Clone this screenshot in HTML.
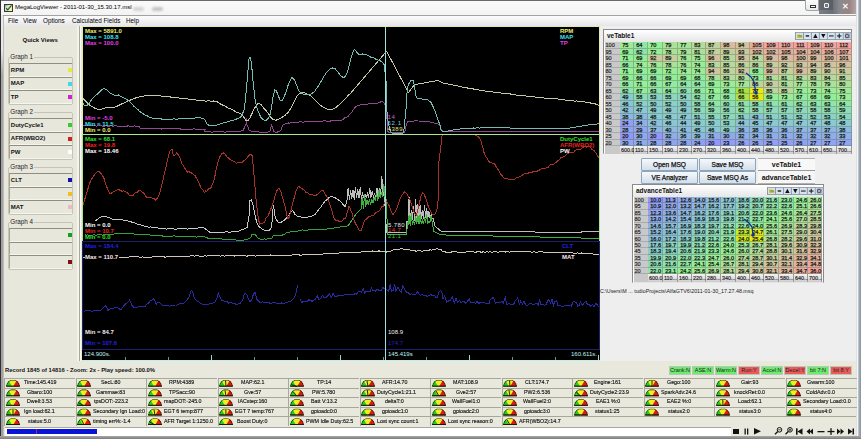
<!DOCTYPE html><html><head><meta charset="utf-8"><style>
html,body{margin:0;padding:0;width:861px;height:439px;overflow:hidden;background:#e9e8dd;font-family:"Liberation Sans", sans-serif;}
div{box-sizing:border-box;}
</style></head><body>
<div style="position:absolute;left:0px;top:0px;width:861px;height:15px;background:linear-gradient(#fbfbfb,#f3f3f3);"></div>
<div style="position:absolute;left:0px;top:0px;width:861px;height:1px;background:#6a6a6a;"></div>
<div style="position:absolute;left:4px;top:4px;width:9px;height:8px;background:linear-gradient(135deg,#b070b0 0%,#e8f0e0 35%,#90d090 50%,#f4f4c0 65%,#f0eca0 100%);border:1px solid #3a3a2a;"></div>
<svg style="position:absolute;left:5px;top:5px" width="7" height="6"><path d="M1 3 L2.8 5 L6.5 0.5" stroke="#1a4a2a" stroke-width="1.1" fill="none"/></svg>
<div style="position:absolute;left:15px;top:4px;font-size:6px;line-height:7px;color:#000;font-weight:normal;white-space:nowrap;">MegaLogViewer - 2011-01-30_15.30.17.msl</div>
<div style="position:absolute;left:133px;top:7px;width:11px;height:4px;background:#d4d4d4;border-radius:2px;filter:blur(1px);"></div>
<div style="position:absolute;left:152px;top:7px;width:11px;height:4px;background:#c4c4c4;border-radius:2px;filter:blur(1px);"></div>
<div style="position:absolute;left:805px;top:0px;width:14px;height:10.5px;background:linear-gradient(#fcfcfc,#e8eaec);border:1px solid #a0a4a8;border-top:none;border-radius:0 0 0 3px;"></div>
<div style="position:absolute;left:810px;top:5px;width:6px;height:2.5px;border:1px solid #333;background:#f8f8f8;"></div>
<div style="position:absolute;left:819px;top:0px;width:38px;height:14px;background:linear-gradient(90deg,#7a8088 0%,#6a7078 35%,#8a8a8e 55%,#9a8486 80%,#b8a8aa 100%);filter:blur(0.4px);"></div>
<div style="position:absolute;left:819px;top:0px;width:14px;height:10px;background:rgba(60,64,70,0.35);"></div>
<div style="position:absolute;left:824px;top:3px;width:5px;height:4.5px;border:1px solid #f4f4f4;border-radius:1px;background:#707880;"></div>
<div style="position:absolute;left:841.5px;top:1.5px;font-size:8px;line-height:9px;color:#f8f8f8;font-weight:bold;white-space:nowrap;">✕</div>
<div style="position:absolute;left:0px;top:0px;width:1px;height:439px;background:#303034;"></div>
<div style="position:absolute;left:1px;top:15px;width:2px;height:424px;background:linear-gradient(#e8e8e8 0px,#e8e8e8 35px,#a4a4a4 60px,#a0a0a0);"></div>
<div style="position:absolute;left:3px;top:15px;width:1px;height:424px;background:#bcbcb8;"></div>
<div style="position:absolute;left:856px;top:0px;width:5px;height:439px;background:linear-gradient(90deg,#c8ccd0 0%,#f4f6f8 20%,#f4f6f8 35%,#a8b0b8 55%,#8a929c);"></div>
<div style="position:absolute;left:0px;top:436px;width:861px;height:3px;background:linear-gradient(#a8a8a8,#7c7c7c);"></div>
<div style="position:absolute;left:3px;top:15px;width:853px;height:1px;background:#a2a2a2;"></div>
<div style="position:absolute;left:4px;top:16px;width:852px;height:10px;background:linear-gradient(#fdfdfd,#e6e6ea);"></div>
<div style="position:absolute;left:8px;top:17px;font-size:6.3px;line-height:7.3px;color:#000;font-weight:normal;white-space:nowrap;">File</div>
<div style="position:absolute;left:23px;top:17px;font-size:6.3px;line-height:7.3px;color:#000;font-weight:normal;white-space:nowrap;">View</div>
<div style="position:absolute;left:43px;top:17px;font-size:6.3px;line-height:7.3px;color:#000;font-weight:normal;white-space:nowrap;">Options</div>
<div style="position:absolute;left:72px;top:17px;font-size:6.3px;line-height:7.3px;color:#000;font-weight:normal;white-space:nowrap;">Calculated Fields</div>
<div style="position:absolute;left:126px;top:17px;font-size:6.3px;line-height:7.3px;color:#000;font-weight:normal;white-space:nowrap;">Help</div>
<div style="position:absolute;left:4px;top:26px;width:75px;height:335px;background:#e8e7dc;"></div>
<div style="position:absolute;left:77px;top:26px;width:2px;height:335px;background:#f4f3ec;"></div>
<div style="position:absolute;left:79px;top:26px;width:1px;height:335px;background:#a9a89d;"></div>
<div style="position:absolute;left:80px;top:26px;width:1px;height:335px;background:#f8f8f2;"></div>
<div style="position:absolute;left:81px;top:26px;width:1px;height:335px;background:#e8e7dc;"></div>
<div style="position:absolute;left:22.5px;top:37px;font-size:6px;line-height:7px;color:#111;font-weight:bold;white-space:nowrap;">Quick Views</div>
<div style="position:absolute;left:8px;top:57px;width:65px;height:48px;border:1px solid #c5c4b8;border-radius:2px;"></div>
<div style="position:absolute;left:10px;top:53px;width:24px;height:8px;background:#e8e7dc;"></div>
<div style="position:absolute;left:10.3px;top:53px;font-size:6.3px;line-height:7.3px;color:#222;font-weight:normal;white-space:nowrap;">Graph 1</div>
<div style="position:absolute;left:9px;top:63.0px;width:63px;height:13.6px;border-top:1px solid #8f8e83;border-left:1px solid #a3a295;border-bottom:1px solid #f6f5ee;"></div>
<div style="position:absolute;left:10.8px;top:66.5px;font-size:6px;line-height:7px;color:#111;font-weight:bold;white-space:nowrap;">RPM</div>
<div style="position:absolute;left:68px;top:68.0px;width:4px;height:4px;background:#e8e83a;"></div>
<div style="position:absolute;left:9px;top:76.6px;width:63px;height:13.6px;border-top:1px solid #8f8e83;border-left:1px solid #a3a295;border-bottom:1px solid #f6f5ee;"></div>
<div style="position:absolute;left:10.8px;top:80.1px;font-size:6px;line-height:7px;color:#111;font-weight:bold;white-space:nowrap;">MAP</div>
<div style="position:absolute;left:68px;top:81.6px;width:4px;height:4px;background:#40d8e8;"></div>
<div style="position:absolute;left:9px;top:90.2px;width:63px;height:13.6px;border-top:1px solid #8f8e83;border-left:1px solid #a3a295;border-bottom:1px solid #f6f5ee;"></div>
<div style="position:absolute;left:10.8px;top:93.7px;font-size:6px;line-height:7px;color:#111;font-weight:bold;white-space:nowrap;">TP</div>
<div style="position:absolute;left:68px;top:95.2px;width:4px;height:4px;background:#d020d0;"></div>
<div style="position:absolute;left:8px;top:112px;width:65px;height:48px;border:1px solid #c5c4b8;border-radius:2px;"></div>
<div style="position:absolute;left:10px;top:108px;width:24px;height:8px;background:#e8e7dc;"></div>
<div style="position:absolute;left:10.3px;top:108px;font-size:6.3px;line-height:7.3px;color:#222;font-weight:normal;white-space:nowrap;">Graph 2</div>
<div style="position:absolute;left:9px;top:118.0px;width:63px;height:13.6px;border-top:1px solid #8f8e83;border-left:1px solid #a3a295;border-bottom:1px solid #f6f5ee;"></div>
<div style="position:absolute;left:10.8px;top:121.5px;font-size:6px;line-height:7px;color:#111;font-weight:bold;white-space:nowrap;">DutyCycle1</div>
<div style="position:absolute;left:68px;top:123.0px;width:4px;height:4px;background:#30d030;"></div>
<div style="position:absolute;left:9px;top:131.6px;width:63px;height:13.6px;border-top:1px solid #8f8e83;border-left:1px solid #a3a295;border-bottom:1px solid #f6f5ee;"></div>
<div style="position:absolute;left:10.8px;top:135.1px;font-size:6px;line-height:7px;color:#111;font-weight:bold;white-space:nowrap;">AFR(WBO2)</div>
<div style="position:absolute;left:68px;top:136.6px;width:4px;height:4px;background:#d02020;"></div>
<div style="position:absolute;left:9px;top:145.2px;width:63px;height:13.6px;border-top:1px solid #8f8e83;border-left:1px solid #a3a295;border-bottom:1px solid #f6f5ee;"></div>
<div style="position:absolute;left:10.8px;top:148.7px;font-size:6px;line-height:7px;color:#111;font-weight:bold;white-space:nowrap;">PW</div>
<div style="position:absolute;left:68px;top:150.2px;width:4px;height:4px;background:#ffffff;"></div>
<div style="position:absolute;left:8px;top:167px;width:65px;height:48px;border:1px solid #c5c4b8;border-radius:2px;"></div>
<div style="position:absolute;left:10px;top:163px;width:24px;height:8px;background:#e8e7dc;"></div>
<div style="position:absolute;left:10.3px;top:163px;font-size:6.3px;line-height:7.3px;color:#222;font-weight:normal;white-space:nowrap;">Graph 3</div>
<div style="position:absolute;left:9px;top:173.0px;width:63px;height:13.6px;border-top:1px solid #8f8e83;border-left:1px solid #a3a295;border-bottom:1px solid #f6f5ee;"></div>
<div style="position:absolute;left:10.8px;top:176.5px;font-size:6px;line-height:7px;color:#111;font-weight:bold;white-space:nowrap;">CLT</div>
<div style="position:absolute;left:68px;top:178.0px;width:4px;height:4px;background:#1010b0;"></div>
<div style="position:absolute;left:9px;top:186.6px;width:63px;height:13.6px;border-top:1px solid #8f8e83;border-left:1px solid #a3a295;border-bottom:1px solid #f6f5ee;"></div>
<div style="position:absolute;left:68px;top:191.6px;width:4px;height:4px;background:#f0c020;"></div>
<div style="position:absolute;left:9px;top:200.2px;width:63px;height:13.6px;border-top:1px solid #8f8e83;border-left:1px solid #a3a295;border-bottom:1px solid #f6f5ee;"></div>
<div style="position:absolute;left:10.8px;top:203.7px;font-size:6px;line-height:7px;color:#111;font-weight:bold;white-space:nowrap;">MAT</div>
<div style="position:absolute;left:68px;top:205.2px;width:4px;height:4px;background:#f0b8c0;"></div>
<div style="position:absolute;left:8px;top:222px;width:65px;height:48px;border:1px solid #c5c4b8;border-radius:2px;"></div>
<div style="position:absolute;left:10px;top:218px;width:24px;height:8px;background:#e8e7dc;"></div>
<div style="position:absolute;left:10.3px;top:218px;font-size:6.3px;line-height:7.3px;color:#222;font-weight:normal;white-space:nowrap;">Graph 4</div>
<div style="position:absolute;left:9px;top:228.0px;width:63px;height:13.6px;border-top:1px solid #8f8e83;border-left:1px solid #a3a295;border-bottom:1px solid #f6f5ee;"></div>
<div style="position:absolute;left:68px;top:233.0px;width:4px;height:4px;background:#10a020;"></div>
<div style="position:absolute;left:9px;top:241.6px;width:63px;height:13.6px;border-top:1px solid #8f8e83;border-left:1px solid #a3a295;border-bottom:1px solid #f6f5ee;"></div>
<div style="position:absolute;left:9px;top:255.2px;width:63px;height:13.6px;border-top:1px solid #8f8e83;border-left:1px solid #a3a295;border-bottom:1px solid #f6f5ee;"></div>
<div style="position:absolute;left:68px;top:260.2px;width:4px;height:4px;background:#801010;"></div>
<div style="position:absolute;left:600px;top:26px;width:256px;height:335px;background:#eeeeee;"></div>
<div style="position:absolute;left:603px;top:29px;width:249px;height:125px;background:#f7f7f7;border:1px solid #8a8a8a;border-bottom-color:#e4e4e4;box-shadow:inset 1px 1px 0 #fff;"></div>
<div style="position:absolute;left:604px;top:30px;width:247px;height:12px;background:linear-gradient(#ffffff,#e6e6e6);"></div>
<div style="position:absolute;left:607px;top:32px;font-size:6.5px;line-height:7.5px;color:#111;font-weight:bold;white-space:nowrap;">veTable1</div>
<div style="position:absolute;left:795px;top:31.8px;width:56.65px;height:8.3px;background:#8a9aaa;"></div>
<svg style="position:absolute;left:0;top:0" width="861" height="439"><rect x="796.0" y="32.8" width="7.0" height="6.3" fill="#d8e2ec"/><path d="M797.0,34.4 h3 l1,1 h1.5 v2.5 h-5.5 z" fill="#c8c040"/><path d="M798.5,35.9 h3.5" stroke="#609030" stroke-width="1"/><rect x="804.0" y="32.8" width="7.0" height="6.3" fill="#d8e2ec"/><rect x="805.7" y="35.1" width="3.4" height="1.6" fill="#333"/><rect x="811.9" y="32.8" width="7.0" height="6.3" fill="#d8e2ec"/><path d="M813.2,37.9 L815.4,33.7 L817.6,37.9 Z" fill="#111"/><rect x="819.9" y="32.8" width="7.0" height="6.3" fill="#d8e2ec"/><path d="M821.1,33.9 L823.3,38.1 L825.5,33.9 Z" fill="#111"/><rect x="827.8" y="32.8" width="7.0" height="6.3" fill="#d8e2ec"/><rect x="829.0" y="35.4" width="4.6" height="1.1" fill="#222"/><rect x="835.8" y="32.8" width="7.0" height="6.3" fill="#d8e2ec"/><rect x="836.9" y="35.4" width="4.6" height="1.1" fill="#222"/><rect x="838.7" y="33.6" width="1.1" height="4.6" fill="#222"/><rect x="843.7" y="32.8" width="7.0" height="6.3" fill="#d8e2ec"/><rect x="844.9" y="33.6" width="4.6" height="4.6" fill="#556"/><path d="M845.7,34.4 L848.7,37.4 M848.7,34.4 L845.7,37.4" stroke="#dde" stroke-width="0.8"/></svg>
<div style="position:absolute;left:605px;top:42px;width:15px;height:7px;background:#c9c9c9;border-bottom:1px solid #aaaaaa;"></div>
<div style="position:absolute;left:605.5px;top:42.3px;font-size:5.6px;line-height:6.6px;color:#222;font-weight:normal;white-space:nowrap;-webkit-text-stroke:0.15px #222;">100</div>
<div style="position:absolute;left:620px;top:42px;width:14px;height:7px;background:#a2e898;border-right:1px solid rgba(70,100,70,0.35);border-bottom:1px solid rgba(70,100,70,0.35);"></div>
<div style="position:absolute;left:622.2px;top:42.3px;font-size:5.6px;line-height:6.6px;color:#102010;font-weight:normal;white-space:nowrap;-webkit-text-stroke:0.25px #102010;">75</div>
<div style="position:absolute;left:634px;top:42px;width:14px;height:7px;background:#93e5a7;border-right:1px solid rgba(70,100,70,0.35);border-bottom:1px solid rgba(70,100,70,0.35);"></div>
<div style="position:absolute;left:636.2px;top:42.3px;font-size:5.6px;line-height:6.6px;color:#102010;font-weight:normal;white-space:nowrap;-webkit-text-stroke:0.25px #102010;">64</div>
<div style="position:absolute;left:648px;top:42px;width:15px;height:7px;background:#96ef98;border-right:1px solid rgba(70,100,70,0.35);border-bottom:1px solid rgba(70,100,70,0.35);"></div>
<div style="position:absolute;left:650.2px;top:42.3px;font-size:5.6px;line-height:6.6px;color:#102010;font-weight:normal;white-space:nowrap;-webkit-text-stroke:0.25px #102010;">70</div>
<div style="position:absolute;left:663px;top:42px;width:15px;height:7px;background:#ade09b;border-right:1px solid rgba(70,100,70,0.35);border-bottom:1px solid rgba(70,100,70,0.35);"></div>
<div style="position:absolute;left:665.2px;top:42.3px;font-size:5.6px;line-height:6.6px;color:#102010;font-weight:normal;white-space:nowrap;-webkit-text-stroke:0.25px #102010;">79</div>
<div style="position:absolute;left:678px;top:42px;width:14px;height:7px;background:#a7e499;border-right:1px solid rgba(70,100,70,0.35);border-bottom:1px solid rgba(70,100,70,0.35);"></div>
<div style="position:absolute;left:680.2px;top:42.3px;font-size:5.6px;line-height:6.6px;color:#102010;font-weight:normal;white-space:nowrap;-webkit-text-stroke:0.25px #102010;">77</div>
<div style="position:absolute;left:692px;top:42px;width:14px;height:7px;background:#b8d89d;border-right:1px solid rgba(70,100,70,0.35);border-bottom:1px solid rgba(70,100,70,0.35);"></div>
<div style="position:absolute;left:694.2px;top:42.3px;font-size:5.6px;line-height:6.6px;color:#102010;font-weight:normal;white-space:nowrap;-webkit-text-stroke:0.25px #102010;">83</div>
<div style="position:absolute;left:706px;top:42px;width:15px;height:7px;background:#c3d19f;border-right:1px solid rgba(70,100,70,0.35);border-bottom:1px solid rgba(70,100,70,0.35);"></div>
<div style="position:absolute;left:708.2px;top:42.3px;font-size:5.6px;line-height:6.6px;color:#102010;font-weight:normal;white-space:nowrap;-webkit-text-stroke:0.25px #102010;">87</div>
<div style="position:absolute;left:721px;top:42px;width:15px;height:7px;background:#dabba0;border-right:1px solid rgba(70,100,70,0.35);border-bottom:1px solid rgba(70,100,70,0.35);"></div>
<div style="position:absolute;left:723.2px;top:42.3px;font-size:5.6px;line-height:6.6px;color:#102010;font-weight:normal;white-space:nowrap;-webkit-text-stroke:0.25px #102010;">98</div>
<div style="position:absolute;left:736px;top:42px;width:14px;height:7px;background:#d2c3a0;border-right:1px solid rgba(70,100,70,0.35);border-bottom:1px solid rgba(70,100,70,0.35);"></div>
<div style="position:absolute;left:738.2px;top:42.3px;font-size:5.6px;line-height:6.6px;color:#102010;font-weight:normal;white-space:nowrap;-webkit-text-stroke:0.25px #102010;">94</div>
<div style="position:absolute;left:750px;top:42px;width:14px;height:7px;background:#e7aea0;border-right:1px solid rgba(70,100,70,0.35);border-bottom:1px solid rgba(70,100,70,0.35);"></div>
<div style="position:absolute;left:752.2px;top:42.3px;font-size:5.6px;line-height:6.6px;color:#102010;font-weight:normal;white-space:nowrap;-webkit-text-stroke:0.25px #102010;">105</div>
<div style="position:absolute;left:764px;top:42px;width:15px;height:7px;background:#efa6a0;border-right:1px solid rgba(70,100,70,0.35);border-bottom:1px solid rgba(70,100,70,0.35);"></div>
<div style="position:absolute;left:766.2px;top:42.3px;font-size:5.6px;line-height:6.6px;color:#102010;font-weight:normal;white-space:nowrap;-webkit-text-stroke:0.25px #102010;">109</div>
<div style="position:absolute;left:779px;top:42px;width:15px;height:7px;background:#f1a4a0;border-right:1px solid rgba(70,100,70,0.35);border-bottom:1px solid rgba(70,100,70,0.35);"></div>
<div style="position:absolute;left:781.2px;top:42.3px;font-size:5.6px;line-height:6.6px;color:#102010;font-weight:normal;white-space:nowrap;-webkit-text-stroke:0.25px #102010;">110</div>
<div style="position:absolute;left:794px;top:42px;width:14px;height:7px;background:#f3a2a0;border-right:1px solid rgba(70,100,70,0.35);border-bottom:1px solid rgba(70,100,70,0.35);"></div>
<div style="position:absolute;left:796.2px;top:42.3px;font-size:5.6px;line-height:6.6px;color:#102010;font-weight:normal;white-space:nowrap;-webkit-text-stroke:0.25px #102010;">111</div>
<div style="position:absolute;left:808px;top:42px;width:14px;height:7px;background:#efa6a0;border-right:1px solid rgba(70,100,70,0.35);border-bottom:1px solid rgba(70,100,70,0.35);"></div>
<div style="position:absolute;left:810.2px;top:42.3px;font-size:5.6px;line-height:6.6px;color:#102010;font-weight:normal;white-space:nowrap;-webkit-text-stroke:0.25px #102010;">109</div>
<div style="position:absolute;left:822px;top:42px;width:15px;height:7px;background:#f1a4a0;border-right:1px solid rgba(70,100,70,0.35);border-bottom:1px solid rgba(70,100,70,0.35);"></div>
<div style="position:absolute;left:824.2px;top:42.3px;font-size:5.6px;line-height:6.6px;color:#102010;font-weight:normal;white-space:nowrap;-webkit-text-stroke:0.25px #102010;">110</div>
<div style="position:absolute;left:837px;top:42px;width:15px;height:7px;background:#f5a0a0;border-right:1px solid rgba(70,100,70,0.35);border-bottom:1px solid rgba(70,100,70,0.35);"></div>
<div style="position:absolute;left:839.2px;top:42.3px;font-size:5.6px;line-height:6.6px;color:#102010;font-weight:normal;white-space:nowrap;-webkit-text-stroke:0.25px #102010;">112</div>
<div style="position:absolute;left:605px;top:49px;width:15px;height:6px;background:#c9c9c9;border-bottom:1px solid #aaaaaa;"></div>
<div style="position:absolute;left:605.5px;top:49.3px;font-size:5.6px;line-height:6.6px;color:#222;font-weight:normal;white-space:nowrap;-webkit-text-stroke:0.15px #222;">95</div>
<div style="position:absolute;left:620px;top:49px;width:14px;height:6px;background:#95ed9a;border-right:1px solid rgba(70,100,70,0.35);border-bottom:1px solid rgba(70,100,70,0.35);"></div>
<div style="position:absolute;left:622.2px;top:49.3px;font-size:5.6px;line-height:6.6px;color:#102010;font-weight:normal;white-space:nowrap;-webkit-text-stroke:0.25px #102010;">69</div>
<div style="position:absolute;left:634px;top:49px;width:14px;height:6px;background:#92e1ac;border-right:1px solid rgba(70,100,70,0.35);border-bottom:1px solid rgba(70,100,70,0.35);"></div>
<div style="position:absolute;left:636.2px;top:49.3px;font-size:5.6px;line-height:6.6px;color:#102010;font-weight:normal;white-space:nowrap;-webkit-text-stroke:0.25px #102010;">62</div>
<div style="position:absolute;left:648px;top:49px;width:15px;height:6px;background:#9aed97;border-right:1px solid rgba(70,100,70,0.35);border-bottom:1px solid rgba(70,100,70,0.35);"></div>
<div style="position:absolute;left:650.2px;top:49.3px;font-size:5.6px;line-height:6.6px;color:#102010;font-weight:normal;white-space:nowrap;-webkit-text-stroke:0.25px #102010;">72</div>
<div style="position:absolute;left:663px;top:49px;width:15px;height:6px;background:#aae29a;border-right:1px solid rgba(70,100,70,0.35);border-bottom:1px solid rgba(70,100,70,0.35);"></div>
<div style="position:absolute;left:665.2px;top:49.3px;font-size:5.6px;line-height:6.6px;color:#102010;font-weight:normal;white-space:nowrap;-webkit-text-stroke:0.25px #102010;">78</div>
<div style="position:absolute;left:678px;top:49px;width:14px;height:6px;background:#ade09b;border-right:1px solid rgba(70,100,70,0.35);border-bottom:1px solid rgba(70,100,70,0.35);"></div>
<div style="position:absolute;left:680.2px;top:49.3px;font-size:5.6px;line-height:6.6px;color:#102010;font-weight:normal;white-space:nowrap;-webkit-text-stroke:0.25px #102010;">79</div>
<div style="position:absolute;left:692px;top:49px;width:14px;height:6px;background:#b2dc9c;border-right:1px solid rgba(70,100,70,0.35);border-bottom:1px solid rgba(70,100,70,0.35);"></div>
<div style="position:absolute;left:694.2px;top:49.3px;font-size:5.6px;line-height:6.6px;color:#102010;font-weight:normal;white-space:nowrap;-webkit-text-stroke:0.25px #102010;">81</div>
<div style="position:absolute;left:706px;top:49px;width:15px;height:6px;background:#c3d19f;border-right:1px solid rgba(70,100,70,0.35);border-bottom:1px solid rgba(70,100,70,0.35);"></div>
<div style="position:absolute;left:708.2px;top:49.3px;font-size:5.6px;line-height:6.6px;color:#102010;font-weight:normal;white-space:nowrap;-webkit-text-stroke:0.25px #102010;">87</div>
<div style="position:absolute;left:721px;top:49px;width:15px;height:6px;background:#c8cda0;border-right:1px solid rgba(70,100,70,0.35);border-bottom:1px solid rgba(70,100,70,0.35);"></div>
<div style="position:absolute;left:723.2px;top:49.3px;font-size:5.6px;line-height:6.6px;color:#102010;font-weight:normal;white-space:nowrap;-webkit-text-stroke:0.25px #102010;">89</div>
<div style="position:absolute;left:736px;top:49px;width:14px;height:6px;background:#d0c5a0;border-right:1px solid rgba(70,100,70,0.35);border-bottom:1px solid rgba(70,100,70,0.35);"></div>
<div style="position:absolute;left:738.2px;top:49.3px;font-size:5.6px;line-height:6.6px;color:#102010;font-weight:normal;white-space:nowrap;-webkit-text-stroke:0.25px #102010;">93</div>
<div style="position:absolute;left:750px;top:49px;width:14px;height:6px;background:#e1b4a0;border-right:1px solid rgba(70,100,70,0.35);border-bottom:1px solid rgba(70,100,70,0.35);"></div>
<div style="position:absolute;left:752.2px;top:49.3px;font-size:5.6px;line-height:6.6px;color:#102010;font-weight:normal;white-space:nowrap;-webkit-text-stroke:0.25px #102010;">102</div>
<div style="position:absolute;left:764px;top:49px;width:15px;height:6px;background:#e1b4a0;border-right:1px solid rgba(70,100,70,0.35);border-bottom:1px solid rgba(70,100,70,0.35);"></div>
<div style="position:absolute;left:766.2px;top:49.3px;font-size:5.6px;line-height:6.6px;color:#102010;font-weight:normal;white-space:nowrap;-webkit-text-stroke:0.25px #102010;">102</div>
<div style="position:absolute;left:779px;top:49px;width:15px;height:6px;background:#e7aea0;border-right:1px solid rgba(70,100,70,0.35);border-bottom:1px solid rgba(70,100,70,0.35);"></div>
<div style="position:absolute;left:781.2px;top:49.3px;font-size:5.6px;line-height:6.6px;color:#102010;font-weight:normal;white-space:nowrap;-webkit-text-stroke:0.25px #102010;">105</div>
<div style="position:absolute;left:794px;top:49px;width:14px;height:6px;background:#e5b0a0;border-right:1px solid rgba(70,100,70,0.35);border-bottom:1px solid rgba(70,100,70,0.35);"></div>
<div style="position:absolute;left:796.2px;top:49.3px;font-size:5.6px;line-height:6.6px;color:#102010;font-weight:normal;white-space:nowrap;-webkit-text-stroke:0.25px #102010;">104</div>
<div style="position:absolute;left:808px;top:49px;width:14px;height:6px;background:#e5b0a0;border-right:1px solid rgba(70,100,70,0.35);border-bottom:1px solid rgba(70,100,70,0.35);"></div>
<div style="position:absolute;left:810.2px;top:49.3px;font-size:5.6px;line-height:6.6px;color:#102010;font-weight:normal;white-space:nowrap;-webkit-text-stroke:0.25px #102010;">104</div>
<div style="position:absolute;left:822px;top:49px;width:15px;height:6px;background:#e9aca0;border-right:1px solid rgba(70,100,70,0.35);border-bottom:1px solid rgba(70,100,70,0.35);"></div>
<div style="position:absolute;left:824.2px;top:49.3px;font-size:5.6px;line-height:6.6px;color:#102010;font-weight:normal;white-space:nowrap;-webkit-text-stroke:0.25px #102010;">106</div>
<div style="position:absolute;left:837px;top:49px;width:15px;height:6px;background:#ebaaa0;border-right:1px solid rgba(70,100,70,0.35);border-bottom:1px solid rgba(70,100,70,0.35);"></div>
<div style="position:absolute;left:839.2px;top:49.3px;font-size:5.6px;line-height:6.6px;color:#102010;font-weight:normal;white-space:nowrap;-webkit-text-stroke:0.25px #102010;">107</div>
<div style="position:absolute;left:605px;top:55px;width:15px;height:7px;background:#c9c9c9;border-bottom:1px solid #aaaaaa;"></div>
<div style="position:absolute;left:605.5px;top:55.3px;font-size:5.6px;line-height:6.6px;color:#222;font-weight:normal;white-space:nowrap;-webkit-text-stroke:0.15px #222;">90</div>
<div style="position:absolute;left:620px;top:55px;width:14px;height:7px;background:#97ef96;border-right:1px solid rgba(70,100,70,0.35);border-bottom:1px solid rgba(70,100,70,0.35);"></div>
<div style="position:absolute;left:622.2px;top:55.3px;font-size:5.6px;line-height:6.6px;color:#102010;font-weight:normal;white-space:nowrap;-webkit-text-stroke:0.25px #102010;">71</div>
<div style="position:absolute;left:634px;top:55px;width:14px;height:7px;background:#95ed9a;border-right:1px solid rgba(70,100,70,0.35);border-bottom:1px solid rgba(70,100,70,0.35);"></div>
<div style="position:absolute;left:636.2px;top:55.3px;font-size:5.6px;line-height:6.6px;color:#102010;font-weight:normal;white-space:nowrap;-webkit-text-stroke:0.25px #102010;">69</div>
<div style="position:absolute;left:648px;top:55px;width:15px;height:7px;background:#cec7a0;border-right:1px solid rgba(70,100,70,0.35);border-bottom:1px solid rgba(70,100,70,0.35);"></div>
<div style="position:absolute;left:650.2px;top:55.3px;font-size:5.6px;line-height:6.6px;color:#102010;font-weight:normal;white-space:nowrap;-webkit-text-stroke:0.25px #102010;">92</div>
<div style="position:absolute;left:663px;top:55px;width:15px;height:7px;background:#c8cda0;border-right:1px solid rgba(70,100,70,0.35);border-bottom:1px solid rgba(70,100,70,0.35);"></div>
<div style="position:absolute;left:665.2px;top:55.3px;font-size:5.6px;line-height:6.6px;color:#102010;font-weight:normal;white-space:nowrap;-webkit-text-stroke:0.25px #102010;">89</div>
<div style="position:absolute;left:678px;top:55px;width:14px;height:7px;background:#a5e699;border-right:1px solid rgba(70,100,70,0.35);border-bottom:1px solid rgba(70,100,70,0.35);"></div>
<div style="position:absolute;left:680.2px;top:55.3px;font-size:5.6px;line-height:6.6px;color:#102010;font-weight:normal;white-space:nowrap;-webkit-text-stroke:0.25px #102010;">76</div>
<div style="position:absolute;left:692px;top:55px;width:14px;height:7px;background:#a2e898;border-right:1px solid rgba(70,100,70,0.35);border-bottom:1px solid rgba(70,100,70,0.35);"></div>
<div style="position:absolute;left:694.2px;top:55.3px;font-size:5.6px;line-height:6.6px;color:#102010;font-weight:normal;white-space:nowrap;-webkit-text-stroke:0.25px #102010;">75</div>
<div style="position:absolute;left:706px;top:55px;width:15px;height:7px;background:#d6bfa0;border-right:1px solid rgba(70,100,70,0.35);border-bottom:1px solid rgba(70,100,70,0.35);"></div>
<div style="position:absolute;left:708.2px;top:55.3px;font-size:5.6px;line-height:6.6px;color:#102010;font-weight:normal;white-space:nowrap;-webkit-text-stroke:0.25px #102010;">96</div>
<div style="position:absolute;left:721px;top:55px;width:15px;height:7px;background:#bdd59e;border-right:1px solid rgba(70,100,70,0.35);border-bottom:1px solid rgba(70,100,70,0.35);"></div>
<div style="position:absolute;left:723.2px;top:55.3px;font-size:5.6px;line-height:6.6px;color:#102010;font-weight:normal;white-space:nowrap;-webkit-text-stroke:0.25px #102010;">85</div>
<div style="position:absolute;left:736px;top:55px;width:14px;height:7px;background:#d4c1a0;border-right:1px solid rgba(70,100,70,0.35);border-bottom:1px solid rgba(70,100,70,0.35);"></div>
<div style="position:absolute;left:738.2px;top:55.3px;font-size:5.6px;line-height:6.6px;color:#102010;font-weight:normal;white-space:nowrap;-webkit-text-stroke:0.25px #102010;">95</div>
<div style="position:absolute;left:750px;top:55px;width:14px;height:7px;background:#bad79d;border-right:1px solid rgba(70,100,70,0.35);border-bottom:1px solid rgba(70,100,70,0.35);"></div>
<div style="position:absolute;left:752.2px;top:55.3px;font-size:5.6px;line-height:6.6px;color:#102010;font-weight:normal;white-space:nowrap;-webkit-text-stroke:0.25px #102010;">84</div>
<div style="position:absolute;left:764px;top:55px;width:15px;height:7px;background:#dcb9a0;border-right:1px solid rgba(70,100,70,0.35);border-bottom:1px solid rgba(70,100,70,0.35);"></div>
<div style="position:absolute;left:766.2px;top:55.3px;font-size:5.6px;line-height:6.6px;color:#102010;font-weight:normal;white-space:nowrap;-webkit-text-stroke:0.25px #102010;">99</div>
<div style="position:absolute;left:779px;top:55px;width:15px;height:7px;background:#dabba0;border-right:1px solid rgba(70,100,70,0.35);border-bottom:1px solid rgba(70,100,70,0.35);"></div>
<div style="position:absolute;left:781.2px;top:55.3px;font-size:5.6px;line-height:6.6px;color:#102010;font-weight:normal;white-space:nowrap;-webkit-text-stroke:0.25px #102010;">98</div>
<div style="position:absolute;left:794px;top:55px;width:14px;height:7px;background:#deb7a0;border-right:1px solid rgba(70,100,70,0.35);border-bottom:1px solid rgba(70,100,70,0.35);"></div>
<div style="position:absolute;left:796.2px;top:55.3px;font-size:5.6px;line-height:6.6px;color:#102010;font-weight:normal;white-space:nowrap;-webkit-text-stroke:0.25px #102010;">100</div>
<div style="position:absolute;left:808px;top:55px;width:14px;height:7px;background:#dcb9a0;border-right:1px solid rgba(70,100,70,0.35);border-bottom:1px solid rgba(70,100,70,0.35);"></div>
<div style="position:absolute;left:810.2px;top:55.3px;font-size:5.6px;line-height:6.6px;color:#102010;font-weight:normal;white-space:nowrap;-webkit-text-stroke:0.25px #102010;">99</div>
<div style="position:absolute;left:822px;top:55px;width:15px;height:7px;background:#deb7a0;border-right:1px solid rgba(70,100,70,0.35);border-bottom:1px solid rgba(70,100,70,0.35);"></div>
<div style="position:absolute;left:824.2px;top:55.3px;font-size:5.6px;line-height:6.6px;color:#102010;font-weight:normal;white-space:nowrap;-webkit-text-stroke:0.25px #102010;">100</div>
<div style="position:absolute;left:837px;top:55px;width:15px;height:7px;background:#dfb6a0;border-right:1px solid rgba(70,100,70,0.35);border-bottom:1px solid rgba(70,100,70,0.35);"></div>
<div style="position:absolute;left:839.2px;top:55.3px;font-size:5.6px;line-height:6.6px;color:#102010;font-weight:normal;white-space:nowrap;-webkit-text-stroke:0.25px #102010;">101</div>
<div style="position:absolute;left:605px;top:62px;width:15px;height:6px;background:#c9c9c9;border-bottom:1px solid #aaaaaa;"></div>
<div style="position:absolute;left:605.5px;top:62.3px;font-size:5.6px;line-height:6.6px;color:#222;font-weight:normal;white-space:nowrap;-webkit-text-stroke:0.15px #222;">85</div>
<div style="position:absolute;left:620px;top:62px;width:14px;height:6px;background:#94e8a2;border-right:1px solid rgba(70,100,70,0.35);border-bottom:1px solid rgba(70,100,70,0.35);"></div>
<div style="position:absolute;left:622.2px;top:62.3px;font-size:5.6px;line-height:6.6px;color:#102010;font-weight:normal;white-space:nowrap;-webkit-text-stroke:0.25px #102010;">66</div>
<div style="position:absolute;left:634px;top:62px;width:14px;height:6px;background:#9fea98;border-right:1px solid rgba(70,100,70,0.35);border-bottom:1px solid rgba(70,100,70,0.35);"></div>
<div style="position:absolute;left:636.2px;top:62.3px;font-size:5.6px;line-height:6.6px;color:#102010;font-weight:normal;white-space:nowrap;-webkit-text-stroke:0.25px #102010;">74</div>
<div style="position:absolute;left:648px;top:62px;width:15px;height:6px;background:#a5e699;border-right:1px solid rgba(70,100,70,0.35);border-bottom:1px solid rgba(70,100,70,0.35);"></div>
<div style="position:absolute;left:650.2px;top:62.3px;font-size:5.6px;line-height:6.6px;color:#102010;font-weight:normal;white-space:nowrap;-webkit-text-stroke:0.25px #102010;">76</div>
<div style="position:absolute;left:663px;top:62px;width:15px;height:6px;background:#aae29a;border-right:1px solid rgba(70,100,70,0.35);border-bottom:1px solid rgba(70,100,70,0.35);"></div>
<div style="position:absolute;left:665.2px;top:62.3px;font-size:5.6px;line-height:6.6px;color:#102010;font-weight:normal;white-space:nowrap;-webkit-text-stroke:0.25px #102010;">78</div>
<div style="position:absolute;left:678px;top:62px;width:14px;height:6px;background:#a5e699;border-right:1px solid rgba(70,100,70,0.35);border-bottom:1px solid rgba(70,100,70,0.35);"></div>
<div style="position:absolute;left:680.2px;top:62.3px;font-size:5.6px;line-height:6.6px;color:#102010;font-weight:normal;white-space:nowrap;-webkit-text-stroke:0.25px #102010;">76</div>
<div style="position:absolute;left:692px;top:62px;width:14px;height:6px;background:#9fea98;border-right:1px solid rgba(70,100,70,0.35);border-bottom:1px solid rgba(70,100,70,0.35);"></div>
<div style="position:absolute;left:694.2px;top:62.3px;font-size:5.6px;line-height:6.6px;color:#102010;font-weight:normal;white-space:nowrap;-webkit-text-stroke:0.25px #102010;">74</div>
<div style="position:absolute;left:706px;top:62px;width:15px;height:6px;background:#b8d89d;border-right:1px solid rgba(70,100,70,0.35);border-bottom:1px solid rgba(70,100,70,0.35);"></div>
<div style="position:absolute;left:708.2px;top:62.3px;font-size:5.6px;line-height:6.6px;color:#102010;font-weight:normal;white-space:nowrap;-webkit-text-stroke:0.25px #102010;">83</div>
<div style="position:absolute;left:721px;top:62px;width:15px;height:6px;background:#bdd59e;border-right:1px solid rgba(70,100,70,0.35);border-bottom:1px solid rgba(70,100,70,0.35);"></div>
<div style="position:absolute;left:723.2px;top:62.3px;font-size:5.6px;line-height:6.6px;color:#102010;font-weight:normal;white-space:nowrap;-webkit-text-stroke:0.25px #102010;">85</div>
<div style="position:absolute;left:736px;top:62px;width:14px;height:6px;background:#c0d39e;border-right:1px solid rgba(70,100,70,0.35);border-bottom:1px solid rgba(70,100,70,0.35);"></div>
<div style="position:absolute;left:738.2px;top:62.3px;font-size:5.6px;line-height:6.6px;color:#102010;font-weight:normal;white-space:nowrap;-webkit-text-stroke:0.25px #102010;">86</div>
<div style="position:absolute;left:750px;top:62px;width:14px;height:6px;background:#c0d39e;border-right:1px solid rgba(70,100,70,0.35);border-bottom:1px solid rgba(70,100,70,0.35);"></div>
<div style="position:absolute;left:752.2px;top:62.3px;font-size:5.6px;line-height:6.6px;color:#102010;font-weight:normal;white-space:nowrap;-webkit-text-stroke:0.25px #102010;">86</div>
<div style="position:absolute;left:764px;top:62px;width:15px;height:6px;background:#c8cda0;border-right:1px solid rgba(70,100,70,0.35);border-bottom:1px solid rgba(70,100,70,0.35);"></div>
<div style="position:absolute;left:766.2px;top:62.3px;font-size:5.6px;line-height:6.6px;color:#102010;font-weight:normal;white-space:nowrap;-webkit-text-stroke:0.25px #102010;">89</div>
<div style="position:absolute;left:779px;top:62px;width:15px;height:6px;background:#cec7a0;border-right:1px solid rgba(70,100,70,0.35);border-bottom:1px solid rgba(70,100,70,0.35);"></div>
<div style="position:absolute;left:781.2px;top:62.3px;font-size:5.6px;line-height:6.6px;color:#102010;font-weight:normal;white-space:nowrap;-webkit-text-stroke:0.25px #102010;">92</div>
<div style="position:absolute;left:794px;top:62px;width:14px;height:6px;background:#d0c5a0;border-right:1px solid rgba(70,100,70,0.35);border-bottom:1px solid rgba(70,100,70,0.35);"></div>
<div style="position:absolute;left:796.2px;top:62.3px;font-size:5.6px;line-height:6.6px;color:#102010;font-weight:normal;white-space:nowrap;-webkit-text-stroke:0.25px #102010;">93</div>
<div style="position:absolute;left:808px;top:62px;width:14px;height:6px;background:#d2c3a0;border-right:1px solid rgba(70,100,70,0.35);border-bottom:1px solid rgba(70,100,70,0.35);"></div>
<div style="position:absolute;left:810.2px;top:62.3px;font-size:5.6px;line-height:6.6px;color:#102010;font-weight:normal;white-space:nowrap;-webkit-text-stroke:0.25px #102010;">94</div>
<div style="position:absolute;left:822px;top:62px;width:15px;height:6px;background:#d4c1a0;border-right:1px solid rgba(70,100,70,0.35);border-bottom:1px solid rgba(70,100,70,0.35);"></div>
<div style="position:absolute;left:824.2px;top:62.3px;font-size:5.6px;line-height:6.6px;color:#102010;font-weight:normal;white-space:nowrap;-webkit-text-stroke:0.25px #102010;">95</div>
<div style="position:absolute;left:837px;top:62px;width:15px;height:6px;background:#d6bfa0;border-right:1px solid rgba(70,100,70,0.35);border-bottom:1px solid rgba(70,100,70,0.35);"></div>
<div style="position:absolute;left:839.2px;top:62.3px;font-size:5.6px;line-height:6.6px;color:#102010;font-weight:normal;white-space:nowrap;-webkit-text-stroke:0.25px #102010;">96</div>
<div style="position:absolute;left:605px;top:68px;width:15px;height:7px;background:#c9c9c9;border-bottom:1px solid #aaaaaa;"></div>
<div style="position:absolute;left:605.5px;top:68.3px;font-size:5.6px;line-height:6.6px;color:#222;font-weight:normal;white-space:nowrap;-webkit-text-stroke:0.15px #222;">80</div>
<div style="position:absolute;left:620px;top:68px;width:14px;height:7px;background:#97ef96;border-right:1px solid rgba(70,100,70,0.35);border-bottom:1px solid rgba(70,100,70,0.35);"></div>
<div style="position:absolute;left:622.2px;top:68.3px;font-size:5.6px;line-height:6.6px;color:#102010;font-weight:normal;white-space:nowrap;-webkit-text-stroke:0.25px #102010;">71</div>
<div style="position:absolute;left:634px;top:68px;width:14px;height:7px;background:#95ed9a;border-right:1px solid rgba(70,100,70,0.35);border-bottom:1px solid rgba(70,100,70,0.35);"></div>
<div style="position:absolute;left:636.2px;top:68.3px;font-size:5.6px;line-height:6.6px;color:#102010;font-weight:normal;white-space:nowrap;-webkit-text-stroke:0.25px #102010;">69</div>
<div style="position:absolute;left:648px;top:68px;width:15px;height:7px;background:#95ed9a;border-right:1px solid rgba(70,100,70,0.35);border-bottom:1px solid rgba(70,100,70,0.35);"></div>
<div style="position:absolute;left:650.2px;top:68.3px;font-size:5.6px;line-height:6.6px;color:#102010;font-weight:normal;white-space:nowrap;-webkit-text-stroke:0.25px #102010;">69</div>
<div style="position:absolute;left:663px;top:68px;width:15px;height:7px;background:#9aed97;border-right:1px solid rgba(70,100,70,0.35);border-bottom:1px solid rgba(70,100,70,0.35);"></div>
<div style="position:absolute;left:665.2px;top:68.3px;font-size:5.6px;line-height:6.6px;color:#102010;font-weight:normal;white-space:nowrap;-webkit-text-stroke:0.25px #102010;">72</div>
<div style="position:absolute;left:678px;top:68px;width:14px;height:7px;background:#9fea98;border-right:1px solid rgba(70,100,70,0.35);border-bottom:1px solid rgba(70,100,70,0.35);"></div>
<div style="position:absolute;left:680.2px;top:68.3px;font-size:5.6px;line-height:6.6px;color:#102010;font-weight:normal;white-space:nowrap;-webkit-text-stroke:0.25px #102010;">74</div>
<div style="position:absolute;left:692px;top:68px;width:14px;height:7px;background:#9fea98;border-right:1px solid rgba(70,100,70,0.35);border-bottom:1px solid rgba(70,100,70,0.35);"></div>
<div style="position:absolute;left:694.2px;top:68.3px;font-size:5.6px;line-height:6.6px;color:#102010;font-weight:normal;white-space:nowrap;-webkit-text-stroke:0.25px #102010;">74</div>
<div style="position:absolute;left:706px;top:68px;width:15px;height:7px;background:#d2c3a0;border-right:1px solid rgba(70,100,70,0.35);border-bottom:1px solid rgba(70,100,70,0.35);"></div>
<div style="position:absolute;left:708.2px;top:68.3px;font-size:5.6px;line-height:6.6px;color:#102010;font-weight:normal;white-space:nowrap;-webkit-text-stroke:0.25px #102010;">94</div>
<div style="position:absolute;left:721px;top:68px;width:15px;height:7px;background:#c0d39e;border-right:1px solid rgba(70,100,70,0.35);border-bottom:1px solid rgba(70,100,70,0.35);"></div>
<div style="position:absolute;left:723.2px;top:68.3px;font-size:5.6px;line-height:6.6px;color:#102010;font-weight:normal;white-space:nowrap;-webkit-text-stroke:0.25px #102010;">86</div>
<div style="position:absolute;left:736px;top:68px;width:14px;height:7px;background:#cec7a0;border-right:1px solid rgba(70,100,70,0.35);border-bottom:1px solid rgba(70,100,70,0.35);"></div>
<div style="position:absolute;left:738.2px;top:68.3px;font-size:5.6px;line-height:6.6px;color:#102010;font-weight:normal;white-space:nowrap;-webkit-text-stroke:0.25px #102010;">92</div>
<div style="position:absolute;left:750px;top:68px;width:14px;height:7px;background:#95eb9d;border-right:1px solid rgba(70,100,70,0.35);border-bottom:1px solid rgba(70,100,70,0.35);"></div>
<div style="position:absolute;left:752.2px;top:68.3px;font-size:5.6px;line-height:6.6px;color:#102010;font-weight:normal;white-space:nowrap;-webkit-text-stroke:0.25px #102010;">68</div>
<div style="position:absolute;left:764px;top:68px;width:15px;height:7px;background:#dcb9a0;border-right:1px solid rgba(70,100,70,0.35);border-bottom:1px solid rgba(70,100,70,0.35);"></div>
<div style="position:absolute;left:766.2px;top:68.3px;font-size:5.6px;line-height:6.6px;color:#102010;font-weight:normal;white-space:nowrap;-webkit-text-stroke:0.25px #102010;">99</div>
<div style="position:absolute;left:779px;top:68px;width:15px;height:7px;background:#c3d19f;border-right:1px solid rgba(70,100,70,0.35);border-bottom:1px solid rgba(70,100,70,0.35);"></div>
<div style="position:absolute;left:781.2px;top:68.3px;font-size:5.6px;line-height:6.6px;color:#102010;font-weight:normal;white-space:nowrap;-webkit-text-stroke:0.25px #102010;">87</div>
<div style="position:absolute;left:794px;top:68px;width:14px;height:7px;background:#dcb9a0;border-right:1px solid rgba(70,100,70,0.35);border-bottom:1px solid rgba(70,100,70,0.35);"></div>
<div style="position:absolute;left:796.2px;top:68.3px;font-size:5.6px;line-height:6.6px;color:#102010;font-weight:normal;white-space:nowrap;-webkit-text-stroke:0.25px #102010;">99</div>
<div style="position:absolute;left:808px;top:68px;width:14px;height:7px;background:#c8cda0;border-right:1px solid rgba(70,100,70,0.35);border-bottom:1px solid rgba(70,100,70,0.35);"></div>
<div style="position:absolute;left:810.2px;top:68.3px;font-size:5.6px;line-height:6.6px;color:#102010;font-weight:normal;white-space:nowrap;-webkit-text-stroke:0.25px #102010;">89</div>
<div style="position:absolute;left:822px;top:68px;width:15px;height:7px;background:#cacba0;border-right:1px solid rgba(70,100,70,0.35);border-bottom:1px solid rgba(70,100,70,0.35);"></div>
<div style="position:absolute;left:824.2px;top:68.3px;font-size:5.6px;line-height:6.6px;color:#102010;font-weight:normal;white-space:nowrap;-webkit-text-stroke:0.25px #102010;">90</div>
<div style="position:absolute;left:837px;top:68px;width:15px;height:7px;background:#ccc9a0;border-right:1px solid rgba(70,100,70,0.35);border-bottom:1px solid rgba(70,100,70,0.35);"></div>
<div style="position:absolute;left:839.2px;top:68.3px;font-size:5.6px;line-height:6.6px;color:#102010;font-weight:normal;white-space:nowrap;-webkit-text-stroke:0.25px #102010;">91</div>
<div style="position:absolute;left:605px;top:75px;width:15px;height:6px;background:#c9c9c9;border-bottom:1px solid #aaaaaa;"></div>
<div style="position:absolute;left:605.5px;top:75.3px;font-size:5.6px;line-height:6.6px;color:#222;font-weight:normal;white-space:nowrap;-webkit-text-stroke:0.15px #222;">75</div>
<div style="position:absolute;left:620px;top:75px;width:14px;height:6px;background:#95ed9a;border-right:1px solid rgba(70,100,70,0.35);border-bottom:1px solid rgba(70,100,70,0.35);"></div>
<div style="position:absolute;left:622.2px;top:75.3px;font-size:5.6px;line-height:6.6px;color:#102010;font-weight:normal;white-space:nowrap;-webkit-text-stroke:0.25px #102010;">69</div>
<div style="position:absolute;left:634px;top:75px;width:14px;height:6px;background:#94e8a2;border-right:1px solid rgba(70,100,70,0.35);border-bottom:1px solid rgba(70,100,70,0.35);"></div>
<div style="position:absolute;left:636.2px;top:75.3px;font-size:5.6px;line-height:6.6px;color:#102010;font-weight:normal;white-space:nowrap;-webkit-text-stroke:0.25px #102010;">66</div>
<div style="position:absolute;left:648px;top:75px;width:15px;height:6px;background:#94e8a2;border-right:1px solid rgba(70,100,70,0.35);border-bottom:1px solid rgba(70,100,70,0.35);"></div>
<div style="position:absolute;left:650.2px;top:75.3px;font-size:5.6px;line-height:6.6px;color:#102010;font-weight:normal;white-space:nowrap;-webkit-text-stroke:0.25px #102010;">66</div>
<div style="position:absolute;left:663px;top:75px;width:15px;height:6px;background:#95ed9a;border-right:1px solid rgba(70,100,70,0.35);border-bottom:1px solid rgba(70,100,70,0.35);"></div>
<div style="position:absolute;left:665.2px;top:75.3px;font-size:5.6px;line-height:6.6px;color:#102010;font-weight:normal;white-space:nowrap;-webkit-text-stroke:0.25px #102010;">69</div>
<div style="position:absolute;left:678px;top:75px;width:14px;height:6px;background:#95ed9a;border-right:1px solid rgba(70,100,70,0.35);border-bottom:1px solid rgba(70,100,70,0.35);"></div>
<div style="position:absolute;left:680.2px;top:75.3px;font-size:5.6px;line-height:6.6px;color:#102010;font-weight:normal;white-space:nowrap;-webkit-text-stroke:0.25px #102010;">69</div>
<div style="position:absolute;left:692px;top:75px;width:14px;height:6px;background:#95eb9d;border-right:1px solid rgba(70,100,70,0.35);border-bottom:1px solid rgba(70,100,70,0.35);"></div>
<div style="position:absolute;left:694.2px;top:75.3px;font-size:5.6px;line-height:6.6px;color:#102010;font-weight:normal;white-space:nowrap;-webkit-text-stroke:0.25px #102010;">68</div>
<div style="position:absolute;left:706px;top:75px;width:15px;height:6px;background:#aae29a;border-right:1px solid rgba(70,100,70,0.35);border-bottom:1px solid rgba(70,100,70,0.35);"></div>
<div style="position:absolute;left:708.2px;top:75.3px;font-size:5.6px;line-height:6.6px;color:#102010;font-weight:normal;white-space:nowrap;-webkit-text-stroke:0.25px #102010;">78</div>
<div style="position:absolute;left:721px;top:75px;width:15px;height:6px;background:#b8d89d;border-right:1px solid rgba(70,100,70,0.35);border-bottom:1px solid rgba(70,100,70,0.35);"></div>
<div style="position:absolute;left:723.2px;top:75.3px;font-size:5.6px;line-height:6.6px;color:#102010;font-weight:normal;white-space:nowrap;-webkit-text-stroke:0.25px #102010;">83</div>
<div style="position:absolute;left:736px;top:75px;width:14px;height:6px;background:#b0de9b;border-right:1px solid rgba(70,100,70,0.35);border-bottom:1px solid rgba(70,100,70,0.35);"></div>
<div style="position:absolute;left:738.2px;top:75.3px;font-size:5.6px;line-height:6.6px;color:#102010;font-weight:normal;white-space:nowrap;-webkit-text-stroke:0.25px #102010;">80</div>
<div style="position:absolute;left:750px;top:75px;width:14px;height:6px;background:#9deb97;border-right:1px solid rgba(70,100,70,0.35);border-bottom:1px solid rgba(70,100,70,0.35);"></div>
<div style="position:absolute;left:752.2px;top:75.3px;font-size:5.6px;line-height:6.6px;color:#102010;font-weight:normal;white-space:nowrap;-webkit-text-stroke:0.25px #102010;">73</div>
<div style="position:absolute;left:764px;top:75px;width:15px;height:6px;background:#b2dc9c;border-right:1px solid rgba(70,100,70,0.35);border-bottom:1px solid rgba(70,100,70,0.35);"></div>
<div style="position:absolute;left:766.2px;top:75.3px;font-size:5.6px;line-height:6.6px;color:#102010;font-weight:normal;white-space:nowrap;-webkit-text-stroke:0.25px #102010;">81</div>
<div style="position:absolute;left:779px;top:75px;width:15px;height:6px;background:#b2dc9c;border-right:1px solid rgba(70,100,70,0.35);border-bottom:1px solid rgba(70,100,70,0.35);"></div>
<div style="position:absolute;left:781.2px;top:75.3px;font-size:5.6px;line-height:6.6px;color:#102010;font-weight:normal;white-space:nowrap;-webkit-text-stroke:0.25px #102010;">81</div>
<div style="position:absolute;left:794px;top:75px;width:14px;height:6px;background:#b5da9c;border-right:1px solid rgba(70,100,70,0.35);border-bottom:1px solid rgba(70,100,70,0.35);"></div>
<div style="position:absolute;left:796.2px;top:75.3px;font-size:5.6px;line-height:6.6px;color:#102010;font-weight:normal;white-space:nowrap;-webkit-text-stroke:0.25px #102010;">82</div>
<div style="position:absolute;left:808px;top:75px;width:14px;height:6px;background:#b8d89d;border-right:1px solid rgba(70,100,70,0.35);border-bottom:1px solid rgba(70,100,70,0.35);"></div>
<div style="position:absolute;left:810.2px;top:75.3px;font-size:5.6px;line-height:6.6px;color:#102010;font-weight:normal;white-space:nowrap;-webkit-text-stroke:0.25px #102010;">83</div>
<div style="position:absolute;left:822px;top:75px;width:15px;height:6px;background:#bad79d;border-right:1px solid rgba(70,100,70,0.35);border-bottom:1px solid rgba(70,100,70,0.35);"></div>
<div style="position:absolute;left:824.2px;top:75.3px;font-size:5.6px;line-height:6.6px;color:#102010;font-weight:normal;white-space:nowrap;-webkit-text-stroke:0.25px #102010;">84</div>
<div style="position:absolute;left:837px;top:75px;width:15px;height:6px;background:#bdd59e;border-right:1px solid rgba(70,100,70,0.35);border-bottom:1px solid rgba(70,100,70,0.35);"></div>
<div style="position:absolute;left:839.2px;top:75.3px;font-size:5.6px;line-height:6.6px;color:#102010;font-weight:normal;white-space:nowrap;-webkit-text-stroke:0.25px #102010;">85</div>
<div style="position:absolute;left:605px;top:81px;width:15px;height:7px;background:#c9c9c9;border-bottom:1px solid #aaaaaa;"></div>
<div style="position:absolute;left:605.5px;top:81.3px;font-size:5.6px;line-height:6.6px;color:#222;font-weight:normal;white-space:nowrap;-webkit-text-stroke:0.15px #222;">70</div>
<div style="position:absolute;left:620px;top:81px;width:14px;height:7px;background:#94e8a2;border-right:1px solid rgba(70,100,70,0.35);border-bottom:1px solid rgba(70,100,70,0.35);"></div>
<div style="position:absolute;left:622.2px;top:81.3px;font-size:5.6px;line-height:6.6px;color:#102010;font-weight:normal;white-space:nowrap;-webkit-text-stroke:0.25px #102010;">66</div>
<div style="position:absolute;left:634px;top:81px;width:14px;height:7px;background:#97ef96;border-right:1px solid rgba(70,100,70,0.35);border-bottom:1px solid rgba(70,100,70,0.35);"></div>
<div style="position:absolute;left:636.2px;top:81.3px;font-size:5.6px;line-height:6.6px;color:#102010;font-weight:normal;white-space:nowrap;-webkit-text-stroke:0.25px #102010;">71</div>
<div style="position:absolute;left:648px;top:81px;width:15px;height:7px;background:#94e8a2;border-right:1px solid rgba(70,100,70,0.35);border-bottom:1px solid rgba(70,100,70,0.35);"></div>
<div style="position:absolute;left:650.2px;top:81.3px;font-size:5.6px;line-height:6.6px;color:#102010;font-weight:normal;white-space:nowrap;-webkit-text-stroke:0.25px #102010;">66</div>
<div style="position:absolute;left:663px;top:81px;width:15px;height:7px;background:#94ea9f;border-right:1px solid rgba(70,100,70,0.35);border-bottom:1px solid rgba(70,100,70,0.35);"></div>
<div style="position:absolute;left:665.2px;top:81.3px;font-size:5.6px;line-height:6.6px;color:#102010;font-weight:normal;white-space:nowrap;-webkit-text-stroke:0.25px #102010;">67</div>
<div style="position:absolute;left:678px;top:81px;width:14px;height:7px;background:#93e5a7;border-right:1px solid rgba(70,100,70,0.35);border-bottom:1px solid rgba(70,100,70,0.35);"></div>
<div style="position:absolute;left:680.2px;top:81.3px;font-size:5.6px;line-height:6.6px;color:#102010;font-weight:normal;white-space:nowrap;-webkit-text-stroke:0.25px #102010;">64</div>
<div style="position:absolute;left:692px;top:81px;width:14px;height:7px;background:#93e5a7;border-right:1px solid rgba(70,100,70,0.35);border-bottom:1px solid rgba(70,100,70,0.35);"></div>
<div style="position:absolute;left:694.2px;top:81.3px;font-size:5.6px;line-height:6.6px;color:#102010;font-weight:normal;white-space:nowrap;-webkit-text-stroke:0.25px #102010;">64</div>
<div style="position:absolute;left:706px;top:81px;width:15px;height:7px;background:#95ed9a;border-right:1px solid rgba(70,100,70,0.35);border-bottom:1px solid rgba(70,100,70,0.35);"></div>
<div style="position:absolute;left:708.2px;top:81.3px;font-size:5.6px;line-height:6.6px;color:#102010;font-weight:normal;white-space:nowrap;-webkit-text-stroke:0.25px #102010;">69</div>
<div style="position:absolute;left:721px;top:81px;width:15px;height:7px;background:#9deb97;border-right:1px solid rgba(70,100,70,0.35);border-bottom:1px solid rgba(70,100,70,0.35);"></div>
<div style="position:absolute;left:723.2px;top:81.3px;font-size:5.6px;line-height:6.6px;color:#102010;font-weight:normal;white-space:nowrap;-webkit-text-stroke:0.25px #102010;">73</div>
<div style="position:absolute;left:736px;top:81px;width:14px;height:7px;background:#a7e499;border-right:1px solid rgba(70,100,70,0.35);border-bottom:1px solid rgba(70,100,70,0.35);"></div>
<div style="position:absolute;left:738.2px;top:81.3px;font-size:5.6px;line-height:6.6px;color:#102010;font-weight:normal;white-space:nowrap;-webkit-text-stroke:0.25px #102010;">77</div>
<div style="position:absolute;left:750px;top:81px;width:14px;height:7px;background:#c0d39e;border-right:1px solid rgba(70,100,70,0.35);border-bottom:1px solid rgba(70,100,70,0.35);"></div>
<div style="position:absolute;left:752.2px;top:81.3px;font-size:5.6px;line-height:6.6px;color:#102010;font-weight:normal;white-space:nowrap;-webkit-text-stroke:0.25px #102010;">86</div>
<div style="position:absolute;left:764px;top:81px;width:15px;height:7px;background:#cacba0;border-right:1px solid rgba(70,100,70,0.35);border-bottom:1px solid rgba(70,100,70,0.35);"></div>
<div style="position:absolute;left:766.2px;top:81.3px;font-size:5.6px;line-height:6.6px;color:#102010;font-weight:normal;white-space:nowrap;-webkit-text-stroke:0.25px #102010;">90</div>
<div style="position:absolute;left:779px;top:81px;width:15px;height:7px;background:#b2dc9c;border-right:1px solid rgba(70,100,70,0.35);border-bottom:1px solid rgba(70,100,70,0.35);"></div>
<div style="position:absolute;left:781.2px;top:81.3px;font-size:5.6px;line-height:6.6px;color:#102010;font-weight:normal;white-space:nowrap;-webkit-text-stroke:0.25px #102010;">81</div>
<div style="position:absolute;left:794px;top:81px;width:14px;height:7px;background:#a7e499;border-right:1px solid rgba(70,100,70,0.35);border-bottom:1px solid rgba(70,100,70,0.35);"></div>
<div style="position:absolute;left:796.2px;top:81.3px;font-size:5.6px;line-height:6.6px;color:#102010;font-weight:normal;white-space:nowrap;-webkit-text-stroke:0.25px #102010;">77</div>
<div style="position:absolute;left:808px;top:81px;width:14px;height:7px;background:#aae29a;border-right:1px solid rgba(70,100,70,0.35);border-bottom:1px solid rgba(70,100,70,0.35);"></div>
<div style="position:absolute;left:810.2px;top:81.3px;font-size:5.6px;line-height:6.6px;color:#102010;font-weight:normal;white-space:nowrap;-webkit-text-stroke:0.25px #102010;">78</div>
<div style="position:absolute;left:822px;top:81px;width:15px;height:7px;background:#ade09b;border-right:1px solid rgba(70,100,70,0.35);border-bottom:1px solid rgba(70,100,70,0.35);"></div>
<div style="position:absolute;left:824.2px;top:81.3px;font-size:5.6px;line-height:6.6px;color:#102010;font-weight:normal;white-space:nowrap;-webkit-text-stroke:0.25px #102010;">79</div>
<div style="position:absolute;left:837px;top:81px;width:15px;height:7px;background:#b0de9b;border-right:1px solid rgba(70,100,70,0.35);border-bottom:1px solid rgba(70,100,70,0.35);"></div>
<div style="position:absolute;left:839.2px;top:81.3px;font-size:5.6px;line-height:6.6px;color:#102010;font-weight:normal;white-space:nowrap;-webkit-text-stroke:0.25px #102010;">80</div>
<div style="position:absolute;left:605px;top:88px;width:15px;height:6px;background:#c9c9c9;border-bottom:1px solid #aaaaaa;"></div>
<div style="position:absolute;left:605.5px;top:88.3px;font-size:5.6px;line-height:6.6px;color:#222;font-weight:normal;white-space:nowrap;-webkit-text-stroke:0.15px #222;">65</div>
<div style="position:absolute;left:620px;top:88px;width:14px;height:6px;background:#92e1ac;border-right:1px solid rgba(70,100,70,0.35);border-bottom:1px solid rgba(70,100,70,0.35);"></div>
<div style="position:absolute;left:622.2px;top:88.3px;font-size:5.6px;line-height:6.6px;color:#102010;font-weight:normal;white-space:nowrap;-webkit-text-stroke:0.25px #102010;">62</div>
<div style="position:absolute;left:634px;top:88px;width:14px;height:6px;background:#94ea9f;border-right:1px solid rgba(70,100,70,0.35);border-bottom:1px solid rgba(70,100,70,0.35);"></div>
<div style="position:absolute;left:636.2px;top:88.3px;font-size:5.6px;line-height:6.6px;color:#102010;font-weight:normal;white-space:nowrap;-webkit-text-stroke:0.25px #102010;">67</div>
<div style="position:absolute;left:648px;top:88px;width:15px;height:6px;background:#93e3aa;border-right:1px solid rgba(70,100,70,0.35);border-bottom:1px solid rgba(70,100,70,0.35);"></div>
<div style="position:absolute;left:650.2px;top:88.3px;font-size:5.6px;line-height:6.6px;color:#102010;font-weight:normal;white-space:nowrap;-webkit-text-stroke:0.25px #102010;">63</div>
<div style="position:absolute;left:663px;top:88px;width:15px;height:6px;background:#93e5a7;border-right:1px solid rgba(70,100,70,0.35);border-bottom:1px solid rgba(70,100,70,0.35);"></div>
<div style="position:absolute;left:665.2px;top:88.3px;font-size:5.6px;line-height:6.6px;color:#102010;font-weight:normal;white-space:nowrap;-webkit-text-stroke:0.25px #102010;">64</div>
<div style="position:absolute;left:678px;top:88px;width:14px;height:6px;background:#91deb2;border-right:1px solid rgba(70,100,70,0.35);border-bottom:1px solid rgba(70,100,70,0.35);"></div>
<div style="position:absolute;left:680.2px;top:88.3px;font-size:5.6px;line-height:6.6px;color:#102010;font-weight:normal;white-space:nowrap;-webkit-text-stroke:0.25px #102010;">60</div>
<div style="position:absolute;left:692px;top:88px;width:14px;height:6px;background:#94e8a2;border-right:1px solid rgba(70,100,70,0.35);border-bottom:1px solid rgba(70,100,70,0.35);"></div>
<div style="position:absolute;left:694.2px;top:88.3px;font-size:5.6px;line-height:6.6px;color:#102010;font-weight:normal;white-space:nowrap;-webkit-text-stroke:0.25px #102010;">66</div>
<div style="position:absolute;left:706px;top:88px;width:15px;height:6px;background:#97ef96;border-right:1px solid rgba(70,100,70,0.35);border-bottom:1px solid rgba(70,100,70,0.35);"></div>
<div style="position:absolute;left:708.2px;top:88.3px;font-size:5.6px;line-height:6.6px;color:#102010;font-weight:normal;white-space:nowrap;-webkit-text-stroke:0.25px #102010;">71</div>
<div style="position:absolute;left:721px;top:88px;width:15px;height:6px;background:#95eb9d;border-right:1px solid rgba(70,100,70,0.35);border-bottom:1px solid rgba(70,100,70,0.35);"></div>
<div style="position:absolute;left:723.2px;top:88.3px;font-size:5.6px;line-height:6.6px;color:#102010;font-weight:normal;white-space:nowrap;-webkit-text-stroke:0.25px #102010;">68</div>
<div style="position:absolute;left:736px;top:88px;width:14px;height:6px;background:#a8e048;border-right:1px solid rgba(70,100,70,0.35);border-bottom:1px solid rgba(70,100,70,0.35);"></div>
<div style="position:absolute;left:738.2px;top:88.3px;font-size:5.6px;line-height:6.6px;color:#102010;font-weight:normal;white-space:nowrap;-webkit-text-stroke:0.25px #102010;">61</div>
<div style="position:absolute;left:750px;top:88px;width:14px;height:6px;background:#e8e820;border-right:1px solid rgba(70,100,70,0.35);border-bottom:1px solid rgba(70,100,70,0.35);"></div>
<div style="position:absolute;left:752.2px;top:88.3px;font-size:5.6px;line-height:6.6px;color:#102010;font-weight:normal;white-space:nowrap;-webkit-text-stroke:0.25px #102010;">77</div>
<div style="position:absolute;left:764px;top:88px;width:15px;height:6px;background:#bdd59e;border-right:1px solid rgba(70,100,70,0.35);border-bottom:1px solid rgba(70,100,70,0.35);"></div>
<div style="position:absolute;left:766.2px;top:88.3px;font-size:5.6px;line-height:6.6px;color:#102010;font-weight:normal;white-space:nowrap;-webkit-text-stroke:0.25px #102010;">85</div>
<div style="position:absolute;left:779px;top:88px;width:15px;height:6px;background:#bdd59e;border-right:1px solid rgba(70,100,70,0.35);border-bottom:1px solid rgba(70,100,70,0.35);"></div>
<div style="position:absolute;left:781.2px;top:88.3px;font-size:5.6px;line-height:6.6px;color:#102010;font-weight:normal;white-space:nowrap;-webkit-text-stroke:0.25px #102010;">85</div>
<div style="position:absolute;left:794px;top:88px;width:14px;height:6px;background:#9aed97;border-right:1px solid rgba(70,100,70,0.35);border-bottom:1px solid rgba(70,100,70,0.35);"></div>
<div style="position:absolute;left:796.2px;top:88.3px;font-size:5.6px;line-height:6.6px;color:#102010;font-weight:normal;white-space:nowrap;-webkit-text-stroke:0.25px #102010;">72</div>
<div style="position:absolute;left:808px;top:88px;width:14px;height:6px;background:#9deb97;border-right:1px solid rgba(70,100,70,0.35);border-bottom:1px solid rgba(70,100,70,0.35);"></div>
<div style="position:absolute;left:810.2px;top:88.3px;font-size:5.6px;line-height:6.6px;color:#102010;font-weight:normal;white-space:nowrap;-webkit-text-stroke:0.25px #102010;">73</div>
<div style="position:absolute;left:822px;top:88px;width:15px;height:6px;background:#9fea98;border-right:1px solid rgba(70,100,70,0.35);border-bottom:1px solid rgba(70,100,70,0.35);"></div>
<div style="position:absolute;left:824.2px;top:88.3px;font-size:5.6px;line-height:6.6px;color:#102010;font-weight:normal;white-space:nowrap;-webkit-text-stroke:0.25px #102010;">74</div>
<div style="position:absolute;left:837px;top:88px;width:15px;height:6px;background:#a2e898;border-right:1px solid rgba(70,100,70,0.35);border-bottom:1px solid rgba(70,100,70,0.35);"></div>
<div style="position:absolute;left:839.2px;top:88.3px;font-size:5.6px;line-height:6.6px;color:#102010;font-weight:normal;white-space:nowrap;-webkit-text-stroke:0.25px #102010;">75</div>
<div style="position:absolute;left:605px;top:94px;width:15px;height:7px;background:#c9c9c9;border-bottom:1px solid #aaaaaa;"></div>
<div style="position:absolute;left:605.5px;top:94.3px;font-size:5.6px;line-height:6.6px;color:#222;font-weight:normal;white-space:nowrap;-webkit-text-stroke:0.15px #222;">60</div>
<div style="position:absolute;left:620px;top:94px;width:14px;height:7px;background:#8dcace;border-right:1px solid rgba(70,100,70,0.35);border-bottom:1px solid rgba(70,100,70,0.35);"></div>
<div style="position:absolute;left:622.2px;top:94.3px;font-size:5.6px;line-height:6.6px;color:#102010;font-weight:normal;white-space:nowrap;-webkit-text-stroke:0.25px #102010;">49</div>
<div style="position:absolute;left:634px;top:94px;width:14px;height:7px;background:#91dab7;border-right:1px solid rgba(70,100,70,0.35);border-bottom:1px solid rgba(70,100,70,0.35);"></div>
<div style="position:absolute;left:636.2px;top:94.3px;font-size:5.6px;line-height:6.6px;color:#102010;font-weight:normal;white-space:nowrap;-webkit-text-stroke:0.25px #102010;">58</div>
<div style="position:absolute;left:648px;top:94px;width:15px;height:7px;background:#8ed1c4;border-right:1px solid rgba(70,100,70,0.35);border-bottom:1px solid rgba(70,100,70,0.35);"></div>
<div style="position:absolute;left:650.2px;top:94.3px;font-size:5.6px;line-height:6.6px;color:#102010;font-weight:normal;white-space:nowrap;-webkit-text-stroke:0.25px #102010;">53</div>
<div style="position:absolute;left:663px;top:94px;width:15px;height:7px;background:#8fd5bf;border-right:1px solid rgba(70,100,70,0.35);border-bottom:1px solid rgba(70,100,70,0.35);"></div>
<div style="position:absolute;left:665.2px;top:94.3px;font-size:5.6px;line-height:6.6px;color:#102010;font-weight:normal;white-space:nowrap;-webkit-text-stroke:0.25px #102010;">55</div>
<div style="position:absolute;left:678px;top:94px;width:14px;height:7px;background:#8fd3c1;border-right:1px solid rgba(70,100,70,0.35);border-bottom:1px solid rgba(70,100,70,0.35);"></div>
<div style="position:absolute;left:680.2px;top:94.3px;font-size:5.6px;line-height:6.6px;color:#102010;font-weight:normal;white-space:nowrap;-webkit-text-stroke:0.25px #102010;">54</div>
<div style="position:absolute;left:692px;top:94px;width:14px;height:7px;background:#92e1ac;border-right:1px solid rgba(70,100,70,0.35);border-bottom:1px solid rgba(70,100,70,0.35);"></div>
<div style="position:absolute;left:694.2px;top:94.3px;font-size:5.6px;line-height:6.6px;color:#102010;font-weight:normal;white-space:nowrap;-webkit-text-stroke:0.25px #102010;">62</div>
<div style="position:absolute;left:706px;top:94px;width:15px;height:7px;background:#94ea9f;border-right:1px solid rgba(70,100,70,0.35);border-bottom:1px solid rgba(70,100,70,0.35);"></div>
<div style="position:absolute;left:708.2px;top:94.3px;font-size:5.6px;line-height:6.6px;color:#102010;font-weight:normal;white-space:nowrap;-webkit-text-stroke:0.25px #102010;">67</div>
<div style="position:absolute;left:721px;top:94px;width:15px;height:7px;background:#94e8a2;border-right:1px solid rgba(70,100,70,0.35);border-bottom:1px solid rgba(70,100,70,0.35);"></div>
<div style="position:absolute;left:723.2px;top:94.3px;font-size:5.6px;line-height:6.6px;color:#102010;font-weight:normal;white-space:nowrap;-webkit-text-stroke:0.25px #102010;">66</div>
<div style="position:absolute;left:736px;top:94px;width:14px;height:7px;background:#b0e050;border-right:1px solid rgba(70,100,70,0.35);border-bottom:1px solid rgba(70,100,70,0.35);"></div>
<div style="position:absolute;left:738.2px;top:94.3px;font-size:5.6px;line-height:6.6px;color:#102010;font-weight:normal;white-space:nowrap;-webkit-text-stroke:0.25px #102010;">66</div>
<div style="position:absolute;left:750px;top:94px;width:14px;height:7px;background:#e8e818;border-right:1px solid rgba(70,100,70,0.35);border-bottom:1px solid rgba(70,100,70,0.35);"></div>
<div style="position:absolute;left:752.2px;top:94.3px;font-size:5.6px;line-height:6.6px;color:#102010;font-weight:normal;white-space:nowrap;-webkit-text-stroke:0.25px #102010;">56</div>
<div style="position:absolute;left:764px;top:94px;width:15px;height:7px;background:#95ed9a;border-right:1px solid rgba(70,100,70,0.35);border-bottom:1px solid rgba(70,100,70,0.35);"></div>
<div style="position:absolute;left:766.2px;top:94.3px;font-size:5.6px;line-height:6.6px;color:#102010;font-weight:normal;white-space:nowrap;-webkit-text-stroke:0.25px #102010;">69</div>
<div style="position:absolute;left:779px;top:94px;width:15px;height:7px;background:#9deb97;border-right:1px solid rgba(70,100,70,0.35);border-bottom:1px solid rgba(70,100,70,0.35);"></div>
<div style="position:absolute;left:781.2px;top:94.3px;font-size:5.6px;line-height:6.6px;color:#102010;font-weight:normal;white-space:nowrap;-webkit-text-stroke:0.25px #102010;">73</div>
<div style="position:absolute;left:794px;top:94px;width:14px;height:7px;background:#94ea9f;border-right:1px solid rgba(70,100,70,0.35);border-bottom:1px solid rgba(70,100,70,0.35);"></div>
<div style="position:absolute;left:796.2px;top:94.3px;font-size:5.6px;line-height:6.6px;color:#102010;font-weight:normal;white-space:nowrap;-webkit-text-stroke:0.25px #102010;">67</div>
<div style="position:absolute;left:808px;top:94px;width:14px;height:7px;background:#95eb9d;border-right:1px solid rgba(70,100,70,0.35);border-bottom:1px solid rgba(70,100,70,0.35);"></div>
<div style="position:absolute;left:810.2px;top:94.3px;font-size:5.6px;line-height:6.6px;color:#102010;font-weight:normal;white-space:nowrap;-webkit-text-stroke:0.25px #102010;">68</div>
<div style="position:absolute;left:822px;top:94px;width:15px;height:7px;background:#95ed9a;border-right:1px solid rgba(70,100,70,0.35);border-bottom:1px solid rgba(70,100,70,0.35);"></div>
<div style="position:absolute;left:824.2px;top:94.3px;font-size:5.6px;line-height:6.6px;color:#102010;font-weight:normal;white-space:nowrap;-webkit-text-stroke:0.25px #102010;">69</div>
<div style="position:absolute;left:837px;top:94px;width:15px;height:7px;background:#9deb97;border-right:1px solid rgba(70,100,70,0.35);border-bottom:1px solid rgba(70,100,70,0.35);"></div>
<div style="position:absolute;left:839.2px;top:94.3px;font-size:5.6px;line-height:6.6px;color:#102010;font-weight:normal;white-space:nowrap;-webkit-text-stroke:0.25px #102010;">73</div>
<div style="position:absolute;left:605px;top:101px;width:15px;height:6px;background:#c9c9c9;border-bottom:1px solid #aaaaaa;"></div>
<div style="position:absolute;left:605.5px;top:101.3px;font-size:5.6px;line-height:6.6px;color:#222;font-weight:normal;white-space:nowrap;-webkit-text-stroke:0.15px #222;">55</div>
<div style="position:absolute;left:620px;top:101px;width:14px;height:6px;background:#8dc5d4;border-right:1px solid rgba(70,100,70,0.35);border-bottom:1px solid rgba(70,100,70,0.35);"></div>
<div style="position:absolute;left:622.2px;top:101.3px;font-size:5.6px;line-height:6.6px;color:#102010;font-weight:normal;white-space:nowrap;-webkit-text-stroke:0.25px #102010;">46</div>
<div style="position:absolute;left:634px;top:101px;width:14px;height:6px;background:#8ed0c7;border-right:1px solid rgba(70,100,70,0.35);border-bottom:1px solid rgba(70,100,70,0.35);"></div>
<div style="position:absolute;left:636.2px;top:101.3px;font-size:5.6px;line-height:6.6px;color:#102010;font-weight:normal;white-space:nowrap;-webkit-text-stroke:0.25px #102010;">52</div>
<div style="position:absolute;left:648px;top:101px;width:15px;height:6px;background:#8dcccc;border-right:1px solid rgba(70,100,70,0.35);border-bottom:1px solid rgba(70,100,70,0.35);"></div>
<div style="position:absolute;left:650.2px;top:101.3px;font-size:5.6px;line-height:6.6px;color:#102010;font-weight:normal;white-space:nowrap;-webkit-text-stroke:0.25px #102010;">50</div>
<div style="position:absolute;left:663px;top:101px;width:15px;height:6px;background:#8ed0c7;border-right:1px solid rgba(70,100,70,0.35);border-bottom:1px solid rgba(70,100,70,0.35);"></div>
<div style="position:absolute;left:665.2px;top:101.3px;font-size:5.6px;line-height:6.6px;color:#102010;font-weight:normal;white-space:nowrap;-webkit-text-stroke:0.25px #102010;">52</div>
<div style="position:absolute;left:678px;top:101px;width:14px;height:6px;background:#8dcccc;border-right:1px solid rgba(70,100,70,0.35);border-bottom:1px solid rgba(70,100,70,0.35);"></div>
<div style="position:absolute;left:680.2px;top:101.3px;font-size:5.6px;line-height:6.6px;color:#102010;font-weight:normal;white-space:nowrap;-webkit-text-stroke:0.25px #102010;">50</div>
<div style="position:absolute;left:692px;top:101px;width:14px;height:6px;background:#91dab7;border-right:1px solid rgba(70,100,70,0.35);border-bottom:1px solid rgba(70,100,70,0.35);"></div>
<div style="position:absolute;left:694.2px;top:101.3px;font-size:5.6px;line-height:6.6px;color:#102010;font-weight:normal;white-space:nowrap;-webkit-text-stroke:0.25px #102010;">58</div>
<div style="position:absolute;left:706px;top:101px;width:15px;height:6px;background:#93e5a7;border-right:1px solid rgba(70,100,70,0.35);border-bottom:1px solid rgba(70,100,70,0.35);"></div>
<div style="position:absolute;left:708.2px;top:101.3px;font-size:5.6px;line-height:6.6px;color:#102010;font-weight:normal;white-space:nowrap;-webkit-text-stroke:0.25px #102010;">64</div>
<div style="position:absolute;left:721px;top:101px;width:15px;height:6px;background:#91deb2;border-right:1px solid rgba(70,100,70,0.35);border-bottom:1px solid rgba(70,100,70,0.35);"></div>
<div style="position:absolute;left:723.2px;top:101.3px;font-size:5.6px;line-height:6.6px;color:#102010;font-weight:normal;white-space:nowrap;-webkit-text-stroke:0.25px #102010;">60</div>
<div style="position:absolute;left:736px;top:101px;width:14px;height:6px;background:#92dfaf;border-right:1px solid rgba(70,100,70,0.35);border-bottom:1px solid rgba(70,100,70,0.35);"></div>
<div style="position:absolute;left:738.2px;top:101.3px;font-size:5.6px;line-height:6.6px;color:#102010;font-weight:normal;white-space:nowrap;-webkit-text-stroke:0.25px #102010;">61</div>
<div style="position:absolute;left:750px;top:101px;width:14px;height:6px;background:#91dab7;border-right:1px solid rgba(70,100,70,0.35);border-bottom:1px solid rgba(70,100,70,0.35);"></div>
<div style="position:absolute;left:752.2px;top:101.3px;font-size:5.6px;line-height:6.6px;color:#102010;font-weight:normal;white-space:nowrap;-webkit-text-stroke:0.25px #102010;">58</div>
<div style="position:absolute;left:764px;top:101px;width:15px;height:6px;background:#92dfaf;border-right:1px solid rgba(70,100,70,0.35);border-bottom:1px solid rgba(70,100,70,0.35);"></div>
<div style="position:absolute;left:766.2px;top:101.3px;font-size:5.6px;line-height:6.6px;color:#102010;font-weight:normal;white-space:nowrap;-webkit-text-stroke:0.25px #102010;">61</div>
<div style="position:absolute;left:779px;top:101px;width:15px;height:6px;background:#92dfaf;border-right:1px solid rgba(70,100,70,0.35);border-bottom:1px solid rgba(70,100,70,0.35);"></div>
<div style="position:absolute;left:781.2px;top:101.3px;font-size:5.6px;line-height:6.6px;color:#102010;font-weight:normal;white-space:nowrap;-webkit-text-stroke:0.25px #102010;">61</div>
<div style="position:absolute;left:794px;top:101px;width:14px;height:6px;background:#92e1ac;border-right:1px solid rgba(70,100,70,0.35);border-bottom:1px solid rgba(70,100,70,0.35);"></div>
<div style="position:absolute;left:796.2px;top:101.3px;font-size:5.6px;line-height:6.6px;color:#102010;font-weight:normal;white-space:nowrap;-webkit-text-stroke:0.25px #102010;">62</div>
<div style="position:absolute;left:808px;top:101px;width:14px;height:6px;background:#93e3aa;border-right:1px solid rgba(70,100,70,0.35);border-bottom:1px solid rgba(70,100,70,0.35);"></div>
<div style="position:absolute;left:810.2px;top:101.3px;font-size:5.6px;line-height:6.6px;color:#102010;font-weight:normal;white-space:nowrap;-webkit-text-stroke:0.25px #102010;">63</div>
<div style="position:absolute;left:822px;top:101px;width:15px;height:6px;background:#93e3aa;border-right:1px solid rgba(70,100,70,0.35);border-bottom:1px solid rgba(70,100,70,0.35);"></div>
<div style="position:absolute;left:824.2px;top:101.3px;font-size:5.6px;line-height:6.6px;color:#102010;font-weight:normal;white-space:nowrap;-webkit-text-stroke:0.25px #102010;">63</div>
<div style="position:absolute;left:837px;top:101px;width:15px;height:6px;background:#93e5a7;border-right:1px solid rgba(70,100,70,0.35);border-bottom:1px solid rgba(70,100,70,0.35);"></div>
<div style="position:absolute;left:839.2px;top:101.3px;font-size:5.6px;line-height:6.6px;color:#102010;font-weight:normal;white-space:nowrap;-webkit-text-stroke:0.25px #102010;">64</div>
<div style="position:absolute;left:605px;top:107px;width:15px;height:7px;background:#c9c9c9;border-bottom:1px solid #aaaaaa;"></div>
<div style="position:absolute;left:605.5px;top:107.3px;font-size:5.6px;line-height:6.6px;color:#222;font-weight:normal;white-space:nowrap;-webkit-text-stroke:0.15px #222;">50</div>
<div style="position:absolute;left:620px;top:107px;width:14px;height:7px;background:#8ebeda;border-right:1px solid rgba(70,100,70,0.35);border-bottom:1px solid rgba(70,100,70,0.35);"></div>
<div style="position:absolute;left:622.2px;top:107.3px;font-size:5.6px;line-height:6.6px;color:#102010;font-weight:normal;white-space:nowrap;-webkit-text-stroke:0.25px #102010;">42</div>
<div style="position:absolute;left:634px;top:107px;width:14px;height:7px;background:#8cc7d3;border-right:1px solid rgba(70,100,70,0.35);border-bottom:1px solid rgba(70,100,70,0.35);"></div>
<div style="position:absolute;left:636.2px;top:107.3px;font-size:5.6px;line-height:6.6px;color:#102010;font-weight:normal;white-space:nowrap;-webkit-text-stroke:0.25px #102010;">47</div>
<div style="position:absolute;left:648px;top:107px;width:15px;height:7px;background:#8dcace;border-right:1px solid rgba(70,100,70,0.35);border-bottom:1px solid rgba(70,100,70,0.35);"></div>
<div style="position:absolute;left:650.2px;top:107.3px;font-size:5.6px;line-height:6.6px;color:#102010;font-weight:normal;white-space:nowrap;-webkit-text-stroke:0.25px #102010;">49</div>
<div style="position:absolute;left:663px;top:107px;width:15px;height:7px;background:#8dcace;border-right:1px solid rgba(70,100,70,0.35);border-bottom:1px solid rgba(70,100,70,0.35);"></div>
<div style="position:absolute;left:665.2px;top:107.3px;font-size:5.6px;line-height:6.6px;color:#102010;font-weight:normal;white-space:nowrap;-webkit-text-stroke:0.25px #102010;">49</div>
<div style="position:absolute;left:678px;top:107px;width:14px;height:7px;background:#8dcace;border-right:1px solid rgba(70,100,70,0.35);border-bottom:1px solid rgba(70,100,70,0.35);"></div>
<div style="position:absolute;left:680.2px;top:107.3px;font-size:5.6px;line-height:6.6px;color:#102010;font-weight:normal;white-space:nowrap;-webkit-text-stroke:0.25px #102010;">49</div>
<div style="position:absolute;left:692px;top:107px;width:14px;height:7px;background:#90d7bc;border-right:1px solid rgba(70,100,70,0.35);border-bottom:1px solid rgba(70,100,70,0.35);"></div>
<div style="position:absolute;left:694.2px;top:107.3px;font-size:5.6px;line-height:6.6px;color:#102010;font-weight:normal;white-space:nowrap;-webkit-text-stroke:0.25px #102010;">56</div>
<div style="position:absolute;left:706px;top:107px;width:15px;height:7px;background:#91dcb4;border-right:1px solid rgba(70,100,70,0.35);border-bottom:1px solid rgba(70,100,70,0.35);"></div>
<div style="position:absolute;left:708.2px;top:107.3px;font-size:5.6px;line-height:6.6px;color:#102010;font-weight:normal;white-space:nowrap;-webkit-text-stroke:0.25px #102010;">59</div>
<div style="position:absolute;left:721px;top:107px;width:15px;height:7px;background:#90d7bc;border-right:1px solid rgba(70,100,70,0.35);border-bottom:1px solid rgba(70,100,70,0.35);"></div>
<div style="position:absolute;left:723.2px;top:107.3px;font-size:5.6px;line-height:6.6px;color:#102010;font-weight:normal;white-space:nowrap;-webkit-text-stroke:0.25px #102010;">56</div>
<div style="position:absolute;left:736px;top:107px;width:14px;height:7px;background:#92e1ac;border-right:1px solid rgba(70,100,70,0.35);border-bottom:1px solid rgba(70,100,70,0.35);"></div>
<div style="position:absolute;left:738.2px;top:107.3px;font-size:5.6px;line-height:6.6px;color:#102010;font-weight:normal;white-space:nowrap;-webkit-text-stroke:0.25px #102010;">62</div>
<div style="position:absolute;left:750px;top:107px;width:14px;height:7px;background:#91dab7;border-right:1px solid rgba(70,100,70,0.35);border-bottom:1px solid rgba(70,100,70,0.35);"></div>
<div style="position:absolute;left:752.2px;top:107.3px;font-size:5.6px;line-height:6.6px;color:#102010;font-weight:normal;white-space:nowrap;-webkit-text-stroke:0.25px #102010;">58</div>
<div style="position:absolute;left:764px;top:107px;width:15px;height:7px;background:#90d8b9;border-right:1px solid rgba(70,100,70,0.35);border-bottom:1px solid rgba(70,100,70,0.35);"></div>
<div style="position:absolute;left:766.2px;top:107.3px;font-size:5.6px;line-height:6.6px;color:#102010;font-weight:normal;white-space:nowrap;-webkit-text-stroke:0.25px #102010;">57</div>
<div style="position:absolute;left:779px;top:107px;width:15px;height:7px;background:#90d8b9;border-right:1px solid rgba(70,100,70,0.35);border-bottom:1px solid rgba(70,100,70,0.35);"></div>
<div style="position:absolute;left:781.2px;top:107.3px;font-size:5.6px;line-height:6.6px;color:#102010;font-weight:normal;white-space:nowrap;-webkit-text-stroke:0.25px #102010;">57</div>
<div style="position:absolute;left:794px;top:107px;width:14px;height:7px;background:#90d8b9;border-right:1px solid rgba(70,100,70,0.35);border-bottom:1px solid rgba(70,100,70,0.35);"></div>
<div style="position:absolute;left:796.2px;top:107.3px;font-size:5.6px;line-height:6.6px;color:#102010;font-weight:normal;white-space:nowrap;-webkit-text-stroke:0.25px #102010;">57</div>
<div style="position:absolute;left:808px;top:107px;width:14px;height:7px;background:#91dab7;border-right:1px solid rgba(70,100,70,0.35);border-bottom:1px solid rgba(70,100,70,0.35);"></div>
<div style="position:absolute;left:810.2px;top:107.3px;font-size:5.6px;line-height:6.6px;color:#102010;font-weight:normal;white-space:nowrap;-webkit-text-stroke:0.25px #102010;">58</div>
<div style="position:absolute;left:822px;top:107px;width:15px;height:7px;background:#91dab7;border-right:1px solid rgba(70,100,70,0.35);border-bottom:1px solid rgba(70,100,70,0.35);"></div>
<div style="position:absolute;left:824.2px;top:107.3px;font-size:5.6px;line-height:6.6px;color:#102010;font-weight:normal;white-space:nowrap;-webkit-text-stroke:0.25px #102010;">58</div>
<div style="position:absolute;left:837px;top:107px;width:15px;height:7px;background:#91dcb4;border-right:1px solid rgba(70,100,70,0.35);border-bottom:1px solid rgba(70,100,70,0.35);"></div>
<div style="position:absolute;left:839.2px;top:107.3px;font-size:5.6px;line-height:6.6px;color:#102010;font-weight:normal;white-space:nowrap;-webkit-text-stroke:0.25px #102010;">59</div>
<div style="position:absolute;left:605px;top:114px;width:15px;height:6px;background:#c9c9c9;border-bottom:1px solid #aaaaaa;"></div>
<div style="position:absolute;left:605.5px;top:114.3px;font-size:5.6px;line-height:6.6px;color:#222;font-weight:normal;white-space:nowrap;-webkit-text-stroke:0.15px #222;">45</div>
<div style="position:absolute;left:620px;top:114px;width:14px;height:6px;background:#8fb7e0;border-right:1px solid rgba(70,100,70,0.35);border-bottom:1px solid rgba(70,100,70,0.35);"></div>
<div style="position:absolute;left:622.2px;top:114.3px;font-size:5.6px;line-height:6.6px;color:#102010;font-weight:normal;white-space:nowrap;-webkit-text-stroke:0.25px #102010;">38</div>
<div style="position:absolute;left:634px;top:114px;width:14px;height:6px;background:#8fb7e0;border-right:1px solid rgba(70,100,70,0.35);border-bottom:1px solid rgba(70,100,70,0.35);"></div>
<div style="position:absolute;left:636.2px;top:114.3px;font-size:5.6px;line-height:6.6px;color:#102010;font-weight:normal;white-space:nowrap;-webkit-text-stroke:0.25px #102010;">38</div>
<div style="position:absolute;left:648px;top:114px;width:15px;height:6px;background:#8cc9d1;border-right:1px solid rgba(70,100,70,0.35);border-bottom:1px solid rgba(70,100,70,0.35);"></div>
<div style="position:absolute;left:650.2px;top:114.3px;font-size:5.6px;line-height:6.6px;color:#102010;font-weight:normal;white-space:nowrap;-webkit-text-stroke:0.25px #102010;">48</div>
<div style="position:absolute;left:663px;top:114px;width:15px;height:6px;background:#8cc9d1;border-right:1px solid rgba(70,100,70,0.35);border-bottom:1px solid rgba(70,100,70,0.35);"></div>
<div style="position:absolute;left:665.2px;top:114.3px;font-size:5.6px;line-height:6.6px;color:#102010;font-weight:normal;white-space:nowrap;-webkit-text-stroke:0.25px #102010;">48</div>
<div style="position:absolute;left:678px;top:114px;width:14px;height:6px;background:#8cc7d3;border-right:1px solid rgba(70,100,70,0.35);border-bottom:1px solid rgba(70,100,70,0.35);"></div>
<div style="position:absolute;left:680.2px;top:114.3px;font-size:5.6px;line-height:6.6px;color:#102010;font-weight:normal;white-space:nowrap;-webkit-text-stroke:0.25px #102010;">47</div>
<div style="position:absolute;left:692px;top:114px;width:14px;height:6px;background:#8dcec9;border-right:1px solid rgba(70,100,70,0.35);border-bottom:1px solid rgba(70,100,70,0.35);"></div>
<div style="position:absolute;left:694.2px;top:114.3px;font-size:5.6px;line-height:6.6px;color:#102010;font-weight:normal;white-space:nowrap;-webkit-text-stroke:0.25px #102010;">51</div>
<div style="position:absolute;left:706px;top:114px;width:15px;height:6px;background:#8fd5bf;border-right:1px solid rgba(70,100,70,0.35);border-bottom:1px solid rgba(70,100,70,0.35);"></div>
<div style="position:absolute;left:708.2px;top:114.3px;font-size:5.6px;line-height:6.6px;color:#102010;font-weight:normal;white-space:nowrap;-webkit-text-stroke:0.25px #102010;">55</div>
<div style="position:absolute;left:721px;top:114px;width:15px;height:6px;background:#90d8b9;border-right:1px solid rgba(70,100,70,0.35);border-bottom:1px solid rgba(70,100,70,0.35);"></div>
<div style="position:absolute;left:723.2px;top:114.3px;font-size:5.6px;line-height:6.6px;color:#102010;font-weight:normal;white-space:nowrap;-webkit-text-stroke:0.25px #102010;">57</div>
<div style="position:absolute;left:736px;top:114px;width:14px;height:6px;background:#8dcec9;border-right:1px solid rgba(70,100,70,0.35);border-bottom:1px solid rgba(70,100,70,0.35);"></div>
<div style="position:absolute;left:738.2px;top:114.3px;font-size:5.6px;line-height:6.6px;color:#102010;font-weight:normal;white-space:nowrap;-webkit-text-stroke:0.25px #102010;">51</div>
<div style="position:absolute;left:750px;top:114px;width:14px;height:6px;background:#8ec0d9;border-right:1px solid rgba(70,100,70,0.35);border-bottom:1px solid rgba(70,100,70,0.35);"></div>
<div style="position:absolute;left:752.2px;top:114.3px;font-size:5.6px;line-height:6.6px;color:#102010;font-weight:normal;white-space:nowrap;-webkit-text-stroke:0.25px #102010;">43</div>
<div style="position:absolute;left:764px;top:114px;width:15px;height:6px;background:#8dcec9;border-right:1px solid rgba(70,100,70,0.35);border-bottom:1px solid rgba(70,100,70,0.35);"></div>
<div style="position:absolute;left:766.2px;top:114.3px;font-size:5.6px;line-height:6.6px;color:#102010;font-weight:normal;white-space:nowrap;-webkit-text-stroke:0.25px #102010;">51</div>
<div style="position:absolute;left:779px;top:114px;width:15px;height:6px;background:#8dcec9;border-right:1px solid rgba(70,100,70,0.35);border-bottom:1px solid rgba(70,100,70,0.35);"></div>
<div style="position:absolute;left:781.2px;top:114.3px;font-size:5.6px;line-height:6.6px;color:#102010;font-weight:normal;white-space:nowrap;-webkit-text-stroke:0.25px #102010;">51</div>
<div style="position:absolute;left:794px;top:114px;width:14px;height:6px;background:#8ed0c7;border-right:1px solid rgba(70,100,70,0.35);border-bottom:1px solid rgba(70,100,70,0.35);"></div>
<div style="position:absolute;left:796.2px;top:114.3px;font-size:5.6px;line-height:6.6px;color:#102010;font-weight:normal;white-space:nowrap;-webkit-text-stroke:0.25px #102010;">52</div>
<div style="position:absolute;left:808px;top:114px;width:14px;height:6px;background:#8ed0c7;border-right:1px solid rgba(70,100,70,0.35);border-bottom:1px solid rgba(70,100,70,0.35);"></div>
<div style="position:absolute;left:810.2px;top:114.3px;font-size:5.6px;line-height:6.6px;color:#102010;font-weight:normal;white-space:nowrap;-webkit-text-stroke:0.25px #102010;">52</div>
<div style="position:absolute;left:822px;top:114px;width:15px;height:6px;background:#8ed1c4;border-right:1px solid rgba(70,100,70,0.35);border-bottom:1px solid rgba(70,100,70,0.35);"></div>
<div style="position:absolute;left:824.2px;top:114.3px;font-size:5.6px;line-height:6.6px;color:#102010;font-weight:normal;white-space:nowrap;-webkit-text-stroke:0.25px #102010;">53</div>
<div style="position:absolute;left:837px;top:114px;width:15px;height:6px;background:#8fd3c1;border-right:1px solid rgba(70,100,70,0.35);border-bottom:1px solid rgba(70,100,70,0.35);"></div>
<div style="position:absolute;left:839.2px;top:114.3px;font-size:5.6px;line-height:6.6px;color:#102010;font-weight:normal;white-space:nowrap;-webkit-text-stroke:0.25px #102010;">54</div>
<div style="position:absolute;left:605px;top:120px;width:15px;height:7px;background:#c9c9c9;border-bottom:1px solid #aaaaaa;"></div>
<div style="position:absolute;left:605.5px;top:120.3px;font-size:5.6px;line-height:6.6px;color:#222;font-weight:normal;white-space:nowrap;-webkit-text-stroke:0.15px #222;">40</div>
<div style="position:absolute;left:620px;top:120px;width:14px;height:7px;background:#959df4;border-right:1px solid rgba(70,100,70,0.35);border-bottom:1px solid rgba(70,100,70,0.35);"></div>
<div style="position:absolute;left:622.2px;top:120.3px;font-size:5.6px;line-height:6.6px;color:#102010;font-weight:normal;white-space:nowrap;-webkit-text-stroke:0.25px #102010;">24</div>
<div style="position:absolute;left:634px;top:120px;width:14px;height:7px;background:#91afe6;border-right:1px solid rgba(70,100,70,0.35);border-bottom:1px solid rgba(70,100,70,0.35);"></div>
<div style="position:absolute;left:636.2px;top:120.3px;font-size:5.6px;line-height:6.6px;color:#102010;font-weight:normal;white-space:nowrap;-webkit-text-stroke:0.25px #102010;">34</div>
<div style="position:absolute;left:648px;top:120px;width:15px;height:7px;background:#8ebeda;border-right:1px solid rgba(70,100,70,0.35);border-bottom:1px solid rgba(70,100,70,0.35);"></div>
<div style="position:absolute;left:650.2px;top:120.3px;font-size:5.6px;line-height:6.6px;color:#102010;font-weight:normal;white-space:nowrap;-webkit-text-stroke:0.25px #102010;">42</div>
<div style="position:absolute;left:663px;top:120px;width:15px;height:7px;background:#8dc5d4;border-right:1px solid rgba(70,100,70,0.35);border-bottom:1px solid rgba(70,100,70,0.35);"></div>
<div style="position:absolute;left:665.2px;top:120.3px;font-size:5.6px;line-height:6.6px;color:#102010;font-weight:normal;white-space:nowrap;-webkit-text-stroke:0.25px #102010;">46</div>
<div style="position:absolute;left:678px;top:120px;width:14px;height:7px;background:#8dc1d7;border-right:1px solid rgba(70,100,70,0.35);border-bottom:1px solid rgba(70,100,70,0.35);"></div>
<div style="position:absolute;left:680.2px;top:120.3px;font-size:5.6px;line-height:6.6px;color:#102010;font-weight:normal;white-space:nowrap;-webkit-text-stroke:0.25px #102010;">44</div>
<div style="position:absolute;left:692px;top:120px;width:14px;height:7px;background:#8dcace;border-right:1px solid rgba(70,100,70,0.35);border-bottom:1px solid rgba(70,100,70,0.35);"></div>
<div style="position:absolute;left:694.2px;top:120.3px;font-size:5.6px;line-height:6.6px;color:#102010;font-weight:normal;white-space:nowrap;-webkit-text-stroke:0.25px #102010;">49</div>
<div style="position:absolute;left:706px;top:120px;width:15px;height:7px;background:#8dcccc;border-right:1px solid rgba(70,100,70,0.35);border-bottom:1px solid rgba(70,100,70,0.35);"></div>
<div style="position:absolute;left:708.2px;top:120.3px;font-size:5.6px;line-height:6.6px;color:#102010;font-weight:normal;white-space:nowrap;-webkit-text-stroke:0.25px #102010;">50</div>
<div style="position:absolute;left:721px;top:120px;width:15px;height:7px;background:#8ed1c4;border-right:1px solid rgba(70,100,70,0.35);border-bottom:1px solid rgba(70,100,70,0.35);"></div>
<div style="position:absolute;left:723.2px;top:120.3px;font-size:5.6px;line-height:6.6px;color:#102010;font-weight:normal;white-space:nowrap;-webkit-text-stroke:0.25px #102010;">53</div>
<div style="position:absolute;left:736px;top:120px;width:14px;height:7px;background:#8dc1d7;border-right:1px solid rgba(70,100,70,0.35);border-bottom:1px solid rgba(70,100,70,0.35);"></div>
<div style="position:absolute;left:738.2px;top:120.3px;font-size:5.6px;line-height:6.6px;color:#102010;font-weight:normal;white-space:nowrap;-webkit-text-stroke:0.25px #102010;">44</div>
<div style="position:absolute;left:750px;top:120px;width:14px;height:7px;background:#8dc3d6;border-right:1px solid rgba(70,100,70,0.35);border-bottom:1px solid rgba(70,100,70,0.35);"></div>
<div style="position:absolute;left:752.2px;top:120.3px;font-size:5.6px;line-height:6.6px;color:#102010;font-weight:normal;white-space:nowrap;-webkit-text-stroke:0.25px #102010;">45</div>
<div style="position:absolute;left:764px;top:120px;width:15px;height:7px;background:#8cc7d3;border-right:1px solid rgba(70,100,70,0.35);border-bottom:1px solid rgba(70,100,70,0.35);"></div>
<div style="position:absolute;left:766.2px;top:120.3px;font-size:5.6px;line-height:6.6px;color:#102010;font-weight:normal;white-space:nowrap;-webkit-text-stroke:0.25px #102010;">47</div>
<div style="position:absolute;left:779px;top:120px;width:15px;height:7px;background:#8cc7d3;border-right:1px solid rgba(70,100,70,0.35);border-bottom:1px solid rgba(70,100,70,0.35);"></div>
<div style="position:absolute;left:781.2px;top:120.3px;font-size:5.6px;line-height:6.6px;color:#102010;font-weight:normal;white-space:nowrap;-webkit-text-stroke:0.25px #102010;">47</div>
<div style="position:absolute;left:794px;top:120px;width:14px;height:7px;background:#8cc7d3;border-right:1px solid rgba(70,100,70,0.35);border-bottom:1px solid rgba(70,100,70,0.35);"></div>
<div style="position:absolute;left:796.2px;top:120.3px;font-size:5.6px;line-height:6.6px;color:#102010;font-weight:normal;white-space:nowrap;-webkit-text-stroke:0.25px #102010;">47</div>
<div style="position:absolute;left:808px;top:120px;width:14px;height:7px;background:#8cc7d3;border-right:1px solid rgba(70,100,70,0.35);border-bottom:1px solid rgba(70,100,70,0.35);"></div>
<div style="position:absolute;left:810.2px;top:120.3px;font-size:5.6px;line-height:6.6px;color:#102010;font-weight:normal;white-space:nowrap;-webkit-text-stroke:0.25px #102010;">47</div>
<div style="position:absolute;left:822px;top:120px;width:15px;height:7px;background:#8cc9d1;border-right:1px solid rgba(70,100,70,0.35);border-bottom:1px solid rgba(70,100,70,0.35);"></div>
<div style="position:absolute;left:824.2px;top:120.3px;font-size:5.6px;line-height:6.6px;color:#102010;font-weight:normal;white-space:nowrap;-webkit-text-stroke:0.25px #102010;">48</div>
<div style="position:absolute;left:837px;top:120px;width:15px;height:7px;background:#8cc9d1;border-right:1px solid rgba(70,100,70,0.35);border-bottom:1px solid rgba(70,100,70,0.35);"></div>
<div style="position:absolute;left:839.2px;top:120.3px;font-size:5.6px;line-height:6.6px;color:#102010;font-weight:normal;white-space:nowrap;-webkit-text-stroke:0.25px #102010;">48</div>
<div style="position:absolute;left:605px;top:127px;width:15px;height:6px;background:#c9c9c9;border-bottom:1px solid #aaaaaa;"></div>
<div style="position:absolute;left:605.5px;top:127.3px;font-size:5.6px;line-height:6.6px;color:#222;font-weight:normal;white-space:nowrap;-webkit-text-stroke:0.15px #222;">30</div>
<div style="position:absolute;left:620px;top:127px;width:14px;height:6px;background:#93a4ee;border-right:1px solid rgba(70,100,70,0.35);border-bottom:1px solid rgba(70,100,70,0.35);"></div>
<div style="position:absolute;left:622.2px;top:127.3px;font-size:5.6px;line-height:6.6px;color:#102010;font-weight:normal;white-space:nowrap;-webkit-text-stroke:0.25px #102010;">28</div>
<div style="position:absolute;left:634px;top:127px;width:14px;height:6px;background:#93a6ed;border-right:1px solid rgba(70,100,70,0.35);border-bottom:1px solid rgba(70,100,70,0.35);"></div>
<div style="position:absolute;left:636.2px;top:127.3px;font-size:5.6px;line-height:6.6px;color:#102010;font-weight:normal;white-space:nowrap;-webkit-text-stroke:0.25px #102010;">29</div>
<div style="position:absolute;left:648px;top:127px;width:15px;height:6px;background:#90b5e1;border-right:1px solid rgba(70,100,70,0.35);border-bottom:1px solid rgba(70,100,70,0.35);"></div>
<div style="position:absolute;left:650.2px;top:127.3px;font-size:5.6px;line-height:6.6px;color:#102010;font-weight:normal;white-space:nowrap;-webkit-text-stroke:0.25px #102010;">37</div>
<div style="position:absolute;left:663px;top:127px;width:15px;height:6px;background:#8fbadd;border-right:1px solid rgba(70,100,70,0.35);border-bottom:1px solid rgba(70,100,70,0.35);"></div>
<div style="position:absolute;left:665.2px;top:127.3px;font-size:5.6px;line-height:6.6px;color:#102010;font-weight:normal;white-space:nowrap;-webkit-text-stroke:0.25px #102010;">40</div>
<div style="position:absolute;left:678px;top:127px;width:14px;height:6px;background:#8ebcdc;border-right:1px solid rgba(70,100,70,0.35);border-bottom:1px solid rgba(70,100,70,0.35);"></div>
<div style="position:absolute;left:680.2px;top:127.3px;font-size:5.6px;line-height:6.6px;color:#102010;font-weight:normal;white-space:nowrap;-webkit-text-stroke:0.25px #102010;">41</div>
<div style="position:absolute;left:692px;top:127px;width:14px;height:6px;background:#8dc3d6;border-right:1px solid rgba(70,100,70,0.35);border-bottom:1px solid rgba(70,100,70,0.35);"></div>
<div style="position:absolute;left:694.2px;top:127.3px;font-size:5.6px;line-height:6.6px;color:#102010;font-weight:normal;white-space:nowrap;-webkit-text-stroke:0.25px #102010;">45</div>
<div style="position:absolute;left:706px;top:127px;width:15px;height:6px;background:#8dc5d4;border-right:1px solid rgba(70,100,70,0.35);border-bottom:1px solid rgba(70,100,70,0.35);"></div>
<div style="position:absolute;left:708.2px;top:127.3px;font-size:5.6px;line-height:6.6px;color:#102010;font-weight:normal;white-space:nowrap;-webkit-text-stroke:0.25px #102010;">46</div>
<div style="position:absolute;left:721px;top:127px;width:15px;height:6px;background:#8dcace;border-right:1px solid rgba(70,100,70,0.35);border-bottom:1px solid rgba(70,100,70,0.35);"></div>
<div style="position:absolute;left:723.2px;top:127.3px;font-size:5.6px;line-height:6.6px;color:#102010;font-weight:normal;white-space:nowrap;-webkit-text-stroke:0.25px #102010;">49</div>
<div style="position:absolute;left:736px;top:127px;width:14px;height:6px;background:#90b3e3;border-right:1px solid rgba(70,100,70,0.35);border-bottom:1px solid rgba(70,100,70,0.35);"></div>
<div style="position:absolute;left:738.2px;top:127.3px;font-size:5.6px;line-height:6.6px;color:#102010;font-weight:normal;white-space:nowrap;-webkit-text-stroke:0.25px #102010;">36</div>
<div style="position:absolute;left:750px;top:127px;width:14px;height:6px;background:#8fb7e0;border-right:1px solid rgba(70,100,70,0.35);border-bottom:1px solid rgba(70,100,70,0.35);"></div>
<div style="position:absolute;left:752.2px;top:127.3px;font-size:5.6px;line-height:6.6px;color:#102010;font-weight:normal;white-space:nowrap;-webkit-text-stroke:0.25px #102010;">38</div>
<div style="position:absolute;left:764px;top:127px;width:15px;height:6px;background:#90b3e3;border-right:1px solid rgba(70,100,70,0.35);border-bottom:1px solid rgba(70,100,70,0.35);"></div>
<div style="position:absolute;left:766.2px;top:127.3px;font-size:5.6px;line-height:6.6px;color:#102010;font-weight:normal;white-space:nowrap;-webkit-text-stroke:0.25px #102010;">36</div>
<div style="position:absolute;left:779px;top:127px;width:15px;height:6px;background:#90b3e3;border-right:1px solid rgba(70,100,70,0.35);border-bottom:1px solid rgba(70,100,70,0.35);"></div>
<div style="position:absolute;left:781.2px;top:127.3px;font-size:5.6px;line-height:6.6px;color:#102010;font-weight:normal;white-space:nowrap;-webkit-text-stroke:0.25px #102010;">36</div>
<div style="position:absolute;left:794px;top:127px;width:14px;height:6px;background:#90b5e1;border-right:1px solid rgba(70,100,70,0.35);border-bottom:1px solid rgba(70,100,70,0.35);"></div>
<div style="position:absolute;left:796.2px;top:127.3px;font-size:5.6px;line-height:6.6px;color:#102010;font-weight:normal;white-space:nowrap;-webkit-text-stroke:0.25px #102010;">37</div>
<div style="position:absolute;left:808px;top:127px;width:14px;height:6px;background:#90b5e1;border-right:1px solid rgba(70,100,70,0.35);border-bottom:1px solid rgba(70,100,70,0.35);"></div>
<div style="position:absolute;left:810.2px;top:127.3px;font-size:5.6px;line-height:6.6px;color:#102010;font-weight:normal;white-space:nowrap;-webkit-text-stroke:0.25px #102010;">37</div>
<div style="position:absolute;left:822px;top:127px;width:15px;height:6px;background:#90b5e1;border-right:1px solid rgba(70,100,70,0.35);border-bottom:1px solid rgba(70,100,70,0.35);"></div>
<div style="position:absolute;left:824.2px;top:127.3px;font-size:5.6px;line-height:6.6px;color:#102010;font-weight:normal;white-space:nowrap;-webkit-text-stroke:0.25px #102010;">37</div>
<div style="position:absolute;left:837px;top:127px;width:15px;height:6px;background:#8fb7e0;border-right:1px solid rgba(70,100,70,0.35);border-bottom:1px solid rgba(70,100,70,0.35);"></div>
<div style="position:absolute;left:839.2px;top:127.3px;font-size:5.6px;line-height:6.6px;color:#102010;font-weight:normal;white-space:nowrap;-webkit-text-stroke:0.25px #102010;">38</div>
<div style="position:absolute;left:605px;top:133px;width:15px;height:7px;background:#c9c9c9;border-bottom:1px solid #aaaaaa;"></div>
<div style="position:absolute;left:605.5px;top:133.3px;font-size:5.6px;line-height:6.6px;color:#222;font-weight:normal;white-space:nowrap;-webkit-text-stroke:0.15px #222;">25</div>
<div style="position:absolute;left:620px;top:133px;width:14px;height:7px;background:#9696fa;border-right:1px solid rgba(70,100,70,0.35);border-bottom:1px solid rgba(70,100,70,0.35);"></div>
<div style="position:absolute;left:622.2px;top:133.3px;font-size:5.6px;line-height:6.6px;color:#102010;font-weight:normal;white-space:nowrap;-webkit-text-stroke:0.25px #102010;">20</div>
<div style="position:absolute;left:634px;top:133px;width:14px;height:7px;background:#92a8ec;border-right:1px solid rgba(70,100,70,0.35);border-bottom:1px solid rgba(70,100,70,0.35);"></div>
<div style="position:absolute;left:636.2px;top:133.3px;font-size:5.6px;line-height:6.6px;color:#102010;font-weight:normal;white-space:nowrap;-webkit-text-stroke:0.25px #102010;">30</div>
<div style="position:absolute;left:648px;top:133px;width:15px;height:7px;background:#9696fa;border-right:1px solid rgba(70,100,70,0.35);border-bottom:1px solid rgba(70,100,70,0.35);"></div>
<div style="position:absolute;left:650.2px;top:133.3px;font-size:5.6px;line-height:6.6px;color:#102010;font-weight:normal;white-space:nowrap;-webkit-text-stroke:0.25px #102010;">20</div>
<div style="position:absolute;left:663px;top:133px;width:15px;height:7px;background:#92ace9;border-right:1px solid rgba(70,100,70,0.35);border-bottom:1px solid rgba(70,100,70,0.35);"></div>
<div style="position:absolute;left:665.2px;top:133.3px;font-size:5.6px;line-height:6.6px;color:#102010;font-weight:normal;white-space:nowrap;-webkit-text-stroke:0.25px #102010;">32</div>
<div style="position:absolute;left:678px;top:133px;width:14px;height:7px;background:#90b3e3;border-right:1px solid rgba(70,100,70,0.35);border-bottom:1px solid rgba(70,100,70,0.35);"></div>
<div style="position:absolute;left:680.2px;top:133.3px;font-size:5.6px;line-height:6.6px;color:#102010;font-weight:normal;white-space:nowrap;-webkit-text-stroke:0.25px #102010;">36</div>
<div style="position:absolute;left:692px;top:133px;width:14px;height:7px;background:#8fb8de;border-right:1px solid rgba(70,100,70,0.35);border-bottom:1px solid rgba(70,100,70,0.35);"></div>
<div style="position:absolute;left:694.2px;top:133.3px;font-size:5.6px;line-height:6.6px;color:#102010;font-weight:normal;white-space:nowrap;-webkit-text-stroke:0.25px #102010;">39</div>
<div style="position:absolute;left:706px;top:133px;width:15px;height:7px;background:#92aaea;border-right:1px solid rgba(70,100,70,0.35);border-bottom:1px solid rgba(70,100,70,0.35);"></div>
<div style="position:absolute;left:708.2px;top:133.3px;font-size:5.6px;line-height:6.6px;color:#102010;font-weight:normal;white-space:nowrap;-webkit-text-stroke:0.25px #102010;">31</div>
<div style="position:absolute;left:721px;top:133px;width:15px;height:7px;background:#92a8ec;border-right:1px solid rgba(70,100,70,0.35);border-bottom:1px solid rgba(70,100,70,0.35);"></div>
<div style="position:absolute;left:723.2px;top:133.3px;font-size:5.6px;line-height:6.6px;color:#102010;font-weight:normal;white-space:nowrap;-webkit-text-stroke:0.25px #102010;">30</div>
<div style="position:absolute;left:736px;top:133px;width:14px;height:7px;background:#92ace9;border-right:1px solid rgba(70,100,70,0.35);border-bottom:1px solid rgba(70,100,70,0.35);"></div>
<div style="position:absolute;left:738.2px;top:133.3px;font-size:5.6px;line-height:6.6px;color:#102010;font-weight:normal;white-space:nowrap;-webkit-text-stroke:0.25px #102010;">32</div>
<div style="position:absolute;left:750px;top:133px;width:14px;height:7px;background:#91afe6;border-right:1px solid rgba(70,100,70,0.35);border-bottom:1px solid rgba(70,100,70,0.35);"></div>
<div style="position:absolute;left:752.2px;top:133.3px;font-size:5.6px;line-height:6.6px;color:#102010;font-weight:normal;white-space:nowrap;-webkit-text-stroke:0.25px #102010;">34</div>
<div style="position:absolute;left:764px;top:133px;width:15px;height:7px;background:#92aaea;border-right:1px solid rgba(70,100,70,0.35);border-bottom:1px solid rgba(70,100,70,0.35);"></div>
<div style="position:absolute;left:766.2px;top:133.3px;font-size:5.6px;line-height:6.6px;color:#102010;font-weight:normal;white-space:nowrap;-webkit-text-stroke:0.25px #102010;">31</div>
<div style="position:absolute;left:779px;top:133px;width:15px;height:7px;background:#92aaea;border-right:1px solid rgba(70,100,70,0.35);border-bottom:1px solid rgba(70,100,70,0.35);"></div>
<div style="position:absolute;left:781.2px;top:133.3px;font-size:5.6px;line-height:6.6px;color:#102010;font-weight:normal;white-space:nowrap;-webkit-text-stroke:0.25px #102010;">31</div>
<div style="position:absolute;left:794px;top:133px;width:14px;height:7px;background:#92ace9;border-right:1px solid rgba(70,100,70,0.35);border-bottom:1px solid rgba(70,100,70,0.35);"></div>
<div style="position:absolute;left:796.2px;top:133.3px;font-size:5.6px;line-height:6.6px;color:#102010;font-weight:normal;white-space:nowrap;-webkit-text-stroke:0.25px #102010;">32</div>
<div style="position:absolute;left:808px;top:133px;width:14px;height:7px;background:#92ace9;border-right:1px solid rgba(70,100,70,0.35);border-bottom:1px solid rgba(70,100,70,0.35);"></div>
<div style="position:absolute;left:810.2px;top:133.3px;font-size:5.6px;line-height:6.6px;color:#102010;font-weight:normal;white-space:nowrap;-webkit-text-stroke:0.25px #102010;">32</div>
<div style="position:absolute;left:822px;top:133px;width:15px;height:7px;background:#92ace9;border-right:1px solid rgba(70,100,70,0.35);border-bottom:1px solid rgba(70,100,70,0.35);"></div>
<div style="position:absolute;left:824.2px;top:133.3px;font-size:5.6px;line-height:6.6px;color:#102010;font-weight:normal;white-space:nowrap;-webkit-text-stroke:0.25px #102010;">32</div>
<div style="position:absolute;left:837px;top:133px;width:15px;height:7px;background:#91aee7;border-right:1px solid rgba(70,100,70,0.35);border-bottom:1px solid rgba(70,100,70,0.35);"></div>
<div style="position:absolute;left:839.2px;top:133.3px;font-size:5.6px;line-height:6.6px;color:#102010;font-weight:normal;white-space:nowrap;-webkit-text-stroke:0.25px #102010;">33</div>
<div style="position:absolute;left:605px;top:140px;width:15px;height:6px;background:#c9c9c9;border-bottom:1px solid #aaaaaa;"></div>
<div style="position:absolute;left:605.5px;top:140.3px;font-size:5.6px;line-height:6.6px;color:#222;font-weight:normal;white-space:nowrap;-webkit-text-stroke:0.15px #222;">20</div>
<div style="position:absolute;left:620px;top:140px;width:14px;height:6px;background:#92a8ec;border-right:1px solid rgba(70,100,70,0.35);border-bottom:1px solid rgba(70,100,70,0.35);"></div>
<div style="position:absolute;left:622.2px;top:140.3px;font-size:5.6px;line-height:6.6px;color:#102010;font-weight:normal;white-space:nowrap;-webkit-text-stroke:0.25px #102010;">30</div>
<div style="position:absolute;left:634px;top:140px;width:14px;height:6px;background:#92aaea;border-right:1px solid rgba(70,100,70,0.35);border-bottom:1px solid rgba(70,100,70,0.35);"></div>
<div style="position:absolute;left:636.2px;top:140.3px;font-size:5.6px;line-height:6.6px;color:#102010;font-weight:normal;white-space:nowrap;-webkit-text-stroke:0.25px #102010;">31</div>
<div style="position:absolute;left:648px;top:140px;width:15px;height:6px;background:#93a4ee;border-right:1px solid rgba(70,100,70,0.35);border-bottom:1px solid rgba(70,100,70,0.35);"></div>
<div style="position:absolute;left:650.2px;top:140.3px;font-size:5.6px;line-height:6.6px;color:#102010;font-weight:normal;white-space:nowrap;-webkit-text-stroke:0.25px #102010;">28</div>
<div style="position:absolute;left:663px;top:140px;width:15px;height:6px;background:#93a4ee;border-right:1px solid rgba(70,100,70,0.35);border-bottom:1px solid rgba(70,100,70,0.35);"></div>
<div style="position:absolute;left:665.2px;top:140.3px;font-size:5.6px;line-height:6.6px;color:#102010;font-weight:normal;white-space:nowrap;-webkit-text-stroke:0.25px #102010;">28</div>
<div style="position:absolute;left:678px;top:140px;width:14px;height:6px;background:#93a4ee;border-right:1px solid rgba(70,100,70,0.35);border-bottom:1px solid rgba(70,100,70,0.35);"></div>
<div style="position:absolute;left:680.2px;top:140.3px;font-size:5.6px;line-height:6.6px;color:#102010;font-weight:normal;white-space:nowrap;-webkit-text-stroke:0.25px #102010;">28</div>
<div style="position:absolute;left:692px;top:140px;width:14px;height:6px;background:#959df4;border-right:1px solid rgba(70,100,70,0.35);border-bottom:1px solid rgba(70,100,70,0.35);"></div>
<div style="position:absolute;left:694.2px;top:140.3px;font-size:5.6px;line-height:6.6px;color:#102010;font-weight:normal;white-space:nowrap;-webkit-text-stroke:0.25px #102010;">24</div>
<div style="position:absolute;left:706px;top:140px;width:15px;height:6px;background:#9696fa;border-right:1px solid rgba(70,100,70,0.35);border-bottom:1px solid rgba(70,100,70,0.35);"></div>
<div style="position:absolute;left:708.2px;top:140.3px;font-size:5.6px;line-height:6.6px;color:#102010;font-weight:normal;white-space:nowrap;-webkit-text-stroke:0.25px #102010;">20</div>
<div style="position:absolute;left:721px;top:140px;width:15px;height:6px;background:#959bf6;border-right:1px solid rgba(70,100,70,0.35);border-bottom:1px solid rgba(70,100,70,0.35);"></div>
<div style="position:absolute;left:723.2px;top:140.3px;font-size:5.6px;line-height:6.6px;color:#102010;font-weight:normal;white-space:nowrap;-webkit-text-stroke:0.25px #102010;">23</div>
<div style="position:absolute;left:736px;top:140px;width:14px;height:6px;background:#94a1f1;border-right:1px solid rgba(70,100,70,0.35);border-bottom:1px solid rgba(70,100,70,0.35);"></div>
<div style="position:absolute;left:738.2px;top:140.3px;font-size:5.6px;line-height:6.6px;color:#102010;font-weight:normal;white-space:nowrap;-webkit-text-stroke:0.25px #102010;">26</div>
<div style="position:absolute;left:750px;top:140px;width:14px;height:6px;background:#94a1f1;border-right:1px solid rgba(70,100,70,0.35);border-bottom:1px solid rgba(70,100,70,0.35);"></div>
<div style="position:absolute;left:752.2px;top:140.3px;font-size:5.6px;line-height:6.6px;color:#102010;font-weight:normal;white-space:nowrap;-webkit-text-stroke:0.25px #102010;">26</div>
<div style="position:absolute;left:764px;top:140px;width:15px;height:6px;background:#949ff3;border-right:1px solid rgba(70,100,70,0.35);border-bottom:1px solid rgba(70,100,70,0.35);"></div>
<div style="position:absolute;left:766.2px;top:140.3px;font-size:5.6px;line-height:6.6px;color:#102010;font-weight:normal;white-space:nowrap;-webkit-text-stroke:0.25px #102010;">25</div>
<div style="position:absolute;left:779px;top:140px;width:15px;height:6px;background:#949ff3;border-right:1px solid rgba(70,100,70,0.35);border-bottom:1px solid rgba(70,100,70,0.35);"></div>
<div style="position:absolute;left:781.2px;top:140.3px;font-size:5.6px;line-height:6.6px;color:#102010;font-weight:normal;white-space:nowrap;-webkit-text-stroke:0.25px #102010;">25</div>
<div style="position:absolute;left:794px;top:140px;width:14px;height:6px;background:#94a1f1;border-right:1px solid rgba(70,100,70,0.35);border-bottom:1px solid rgba(70,100,70,0.35);"></div>
<div style="position:absolute;left:796.2px;top:140.3px;font-size:5.6px;line-height:6.6px;color:#102010;font-weight:normal;white-space:nowrap;-webkit-text-stroke:0.25px #102010;">26</div>
<div style="position:absolute;left:808px;top:140px;width:14px;height:6px;background:#93a3f0;border-right:1px solid rgba(70,100,70,0.35);border-bottom:1px solid rgba(70,100,70,0.35);"></div>
<div style="position:absolute;left:810.2px;top:140.3px;font-size:5.6px;line-height:6.6px;color:#102010;font-weight:normal;white-space:nowrap;-webkit-text-stroke:0.25px #102010;">27</div>
<div style="position:absolute;left:822px;top:140px;width:15px;height:6px;background:#93a3f0;border-right:1px solid rgba(70,100,70,0.35);border-bottom:1px solid rgba(70,100,70,0.35);"></div>
<div style="position:absolute;left:824.2px;top:140.3px;font-size:5.6px;line-height:6.6px;color:#102010;font-weight:normal;white-space:nowrap;-webkit-text-stroke:0.25px #102010;">27</div>
<div style="position:absolute;left:837px;top:140px;width:15px;height:6px;background:#93a3f0;border-right:1px solid rgba(70,100,70,0.35);border-bottom:1px solid rgba(70,100,70,0.35);"></div>
<div style="position:absolute;left:839.2px;top:140.3px;font-size:5.6px;line-height:6.6px;color:#102010;font-weight:normal;white-space:nowrap;-webkit-text-stroke:0.25px #102010;">27</div>
<div style="position:absolute;left:605px;top:146px;width:15px;height:8px;background:#c9c9c9;"></div>
<div style="position:absolute;left:620px;top:146px;width:14px;height:8px;background:linear-gradient(#f2f2f2,#cccccc);border-right:1px solid #9a9a9a;"></div>
<div style="position:absolute;left:621px;top:147px;font-size:5.4px;line-height:6.4px;color:#222;font-weight:normal;white-space:nowrap;width:13px;overflow:hidden;-webkit-text-stroke:0.15px #222;">600.0</div>
<div style="position:absolute;left:634px;top:146px;width:14px;height:8px;background:linear-gradient(#f2f2f2,#cccccc);border-right:1px solid #9a9a9a;"></div>
<div style="position:absolute;left:635px;top:147px;font-size:5.4px;line-height:6.4px;color:#222;font-weight:normal;white-space:nowrap;width:13px;overflow:hidden;-webkit-text-stroke:0.15px #222;">110...</div>
<div style="position:absolute;left:648px;top:146px;width:15px;height:8px;background:linear-gradient(#f2f2f2,#cccccc);border-right:1px solid #9a9a9a;"></div>
<div style="position:absolute;left:649px;top:147px;font-size:5.4px;line-height:6.4px;color:#222;font-weight:normal;white-space:nowrap;width:14px;overflow:hidden;-webkit-text-stroke:0.15px #222;">150...</div>
<div style="position:absolute;left:663px;top:146px;width:15px;height:8px;background:linear-gradient(#f2f2f2,#cccccc);border-right:1px solid #9a9a9a;"></div>
<div style="position:absolute;left:664px;top:147px;font-size:5.4px;line-height:6.4px;color:#222;font-weight:normal;white-space:nowrap;width:14px;overflow:hidden;-webkit-text-stroke:0.15px #222;">190...</div>
<div style="position:absolute;left:678px;top:146px;width:14px;height:8px;background:linear-gradient(#f2f2f2,#cccccc);border-right:1px solid #9a9a9a;"></div>
<div style="position:absolute;left:679px;top:147px;font-size:5.4px;line-height:6.4px;color:#222;font-weight:normal;white-space:nowrap;width:13px;overflow:hidden;-webkit-text-stroke:0.15px #222;">230...</div>
<div style="position:absolute;left:692px;top:146px;width:14px;height:8px;background:linear-gradient(#f2f2f2,#cccccc);border-right:1px solid #9a9a9a;"></div>
<div style="position:absolute;left:693px;top:147px;font-size:5.4px;line-height:6.4px;color:#222;font-weight:normal;white-space:nowrap;width:13px;overflow:hidden;-webkit-text-stroke:0.15px #222;">270...</div>
<div style="position:absolute;left:706px;top:146px;width:15px;height:8px;background:linear-gradient(#f2f2f2,#cccccc);border-right:1px solid #9a9a9a;"></div>
<div style="position:absolute;left:707px;top:147px;font-size:5.4px;line-height:6.4px;color:#222;font-weight:normal;white-space:nowrap;width:14px;overflow:hidden;-webkit-text-stroke:0.15px #222;">320...</div>
<div style="position:absolute;left:721px;top:146px;width:15px;height:8px;background:linear-gradient(#f2f2f2,#cccccc);border-right:1px solid #9a9a9a;"></div>
<div style="position:absolute;left:722px;top:147px;font-size:5.4px;line-height:6.4px;color:#222;font-weight:normal;white-space:nowrap;width:14px;overflow:hidden;-webkit-text-stroke:0.15px #222;">360...</div>
<div style="position:absolute;left:736px;top:146px;width:14px;height:8px;background:linear-gradient(#f2f2f2,#cccccc);border-right:1px solid #9a9a9a;"></div>
<div style="position:absolute;left:737px;top:147px;font-size:5.4px;line-height:6.4px;color:#222;font-weight:normal;white-space:nowrap;width:13px;overflow:hidden;-webkit-text-stroke:0.15px #222;">400...</div>
<div style="position:absolute;left:750px;top:146px;width:14px;height:8px;background:linear-gradient(#f2f2f2,#cccccc);border-right:1px solid #9a9a9a;"></div>
<div style="position:absolute;left:751px;top:147px;font-size:5.4px;line-height:6.4px;color:#222;font-weight:normal;white-space:nowrap;width:13px;overflow:hidden;-webkit-text-stroke:0.15px #222;">440...</div>
<div style="position:absolute;left:764px;top:146px;width:15px;height:8px;background:linear-gradient(#f2f2f2,#cccccc);border-right:1px solid #9a9a9a;"></div>
<div style="position:absolute;left:765px;top:147px;font-size:5.4px;line-height:6.4px;color:#222;font-weight:normal;white-space:nowrap;width:14px;overflow:hidden;-webkit-text-stroke:0.15px #222;">480...</div>
<div style="position:absolute;left:779px;top:146px;width:15px;height:8px;background:linear-gradient(#f2f2f2,#cccccc);border-right:1px solid #9a9a9a;"></div>
<div style="position:absolute;left:780px;top:147px;font-size:5.4px;line-height:6.4px;color:#222;font-weight:normal;white-space:nowrap;width:14px;overflow:hidden;-webkit-text-stroke:0.15px #222;">520...</div>
<div style="position:absolute;left:794px;top:146px;width:14px;height:8px;background:linear-gradient(#f2f2f2,#cccccc);border-right:1px solid #9a9a9a;"></div>
<div style="position:absolute;left:795px;top:147px;font-size:5.4px;line-height:6.4px;color:#222;font-weight:normal;white-space:nowrap;width:13px;overflow:hidden;-webkit-text-stroke:0.15px #222;">570...</div>
<div style="position:absolute;left:808px;top:146px;width:14px;height:8px;background:linear-gradient(#f2f2f2,#cccccc);border-right:1px solid #9a9a9a;"></div>
<div style="position:absolute;left:809px;top:147px;font-size:5.4px;line-height:6.4px;color:#222;font-weight:normal;white-space:nowrap;width:13px;overflow:hidden;-webkit-text-stroke:0.15px #222;">610...</div>
<div style="position:absolute;left:822px;top:146px;width:15px;height:8px;background:linear-gradient(#f2f2f2,#cccccc);border-right:1px solid #9a9a9a;"></div>
<div style="position:absolute;left:823px;top:147px;font-size:5.4px;line-height:6.4px;color:#222;font-weight:normal;white-space:nowrap;width:14px;overflow:hidden;-webkit-text-stroke:0.15px #222;">650...</div>
<div style="position:absolute;left:837px;top:146px;width:15px;height:8px;background:linear-gradient(#f2f2f2,#cccccc);border-right:1px solid #9a9a9a;"></div>
<div style="position:absolute;left:838px;top:147px;font-size:5.4px;line-height:6.4px;color:#222;font-weight:normal;white-space:nowrap;width:14px;overflow:hidden;-webkit-text-stroke:0.15px #222;">700...</div>
<div style="position:absolute;left:632px;top:184px;width:192px;height:99px;background:#f7f7f7;border:1px solid #8a8a8a;border-bottom-color:#e4e4e4;box-shadow:inset 1px 1px 0 #fff;"></div>
<div style="position:absolute;left:633px;top:185px;width:190px;height:12px;background:linear-gradient(#ffffff,#e6e6e6);"></div>
<div style="position:absolute;left:636px;top:187px;font-size:6.5px;line-height:7.5px;color:#111;font-weight:bold;white-space:nowrap;">advanceTable1</div>
<div style="position:absolute;left:767px;top:186.8px;width:56.65px;height:8.3px;background:#8a9aaa;"></div>
<svg style="position:absolute;left:0;top:0" width="861" height="439"><rect x="768.0" y="187.8" width="7.0" height="6.3" fill="#d8e2ec"/><path d="M769.0,189.5 h3 l1,1 h1.5 v2.5 h-5.5 z" fill="#c8c040"/><path d="M770.5,191.0 h3.5" stroke="#609030" stroke-width="1"/><rect x="776.0" y="187.8" width="7.0" height="6.3" fill="#d8e2ec"/><rect x="777.7" y="190.2" width="3.4" height="1.6" fill="#333"/><rect x="783.9" y="187.8" width="7.0" height="6.3" fill="#d8e2ec"/><path d="M785.2,193.0 L787.4,188.8 L789.6,193.0 Z" fill="#111"/><rect x="791.9" y="187.8" width="7.0" height="6.3" fill="#d8e2ec"/><path d="M793.1,189.0 L795.3,193.2 L797.5,189.0 Z" fill="#111"/><rect x="799.8" y="187.8" width="7.0" height="6.3" fill="#d8e2ec"/><rect x="801.0" y="190.5" width="4.6" height="1.1" fill="#222"/><rect x="807.8" y="187.8" width="7.0" height="6.3" fill="#d8e2ec"/><rect x="808.9" y="190.5" width="4.6" height="1.1" fill="#222"/><rect x="810.7" y="188.7" width="1.1" height="4.6" fill="#222"/><rect x="815.7" y="187.8" width="7.0" height="6.3" fill="#d8e2ec"/><rect x="816.9" y="188.7" width="4.6" height="4.6" fill="#556"/><path d="M817.7,189.5 L820.7,192.5 M820.7,189.5 L817.7,192.5" stroke="#dde" stroke-width="0.8"/></svg>
<div style="position:absolute;left:634px;top:197px;width:14px;height:6px;background:#c9c9c9;border-bottom:1px solid #aaaaaa;"></div>
<div style="position:absolute;left:634.5px;top:197.3px;font-size:5.6px;line-height:6.6px;color:#222;font-weight:normal;white-space:nowrap;-webkit-text-stroke:0.15px #222;">100</div>
<div style="position:absolute;left:648px;top:197px;width:15px;height:6px;background:#9696fa;border-right:1px solid rgba(70,100,70,0.35);border-bottom:1px solid rgba(70,100,70,0.35);"></div>
<div style="position:absolute;left:650.2px;top:197.3px;font-size:5.6px;line-height:6.6px;color:#102010;font-weight:normal;white-space:nowrap;-webkit-text-stroke:0.25px #102010;">10.0</div>
<div style="position:absolute;left:663px;top:197px;width:15px;height:6px;background:#949ef3;border-right:1px solid rgba(70,100,70,0.35);border-bottom:1px solid rgba(70,100,70,0.35);"></div>
<div style="position:absolute;left:665.2px;top:197.3px;font-size:5.6px;line-height:6.6px;color:#102010;font-weight:normal;white-space:nowrap;-webkit-text-stroke:0.25px #102010;">11.3</div>
<div style="position:absolute;left:678px;top:197px;width:14px;height:6px;background:#93a7ed;border-right:1px solid rgba(70,100,70,0.35);border-bottom:1px solid rgba(70,100,70,0.35);"></div>
<div style="position:absolute;left:680.2px;top:197.3px;font-size:5.6px;line-height:6.6px;color:#102010;font-weight:normal;white-space:nowrap;-webkit-text-stroke:0.25px #102010;">12.6</div>
<div style="position:absolute;left:692px;top:197px;width:14px;height:6px;background:#91b0e5;border-right:1px solid rgba(70,100,70,0.35);border-bottom:1px solid rgba(70,100,70,0.35);"></div>
<div style="position:absolute;left:694.2px;top:197.3px;font-size:5.6px;line-height:6.6px;color:#102010;font-weight:normal;white-space:nowrap;-webkit-text-stroke:0.25px #102010;">14.0</div>
<div style="position:absolute;left:706px;top:197px;width:15px;height:6px;background:#8fbadd;border-right:1px solid rgba(70,100,70,0.35);border-bottom:1px solid rgba(70,100,70,0.35);"></div>
<div style="position:absolute;left:708.2px;top:197.3px;font-size:5.6px;line-height:6.6px;color:#102010;font-weight:normal;white-space:nowrap;-webkit-text-stroke:0.25px #102010;">15.6</div>
<div style="position:absolute;left:721px;top:197px;width:15px;height:6px;background:#8dc3d6;border-right:1px solid rgba(70,100,70,0.35);border-bottom:1px solid rgba(70,100,70,0.35);"></div>
<div style="position:absolute;left:723.2px;top:197.3px;font-size:5.6px;line-height:6.6px;color:#102010;font-weight:normal;white-space:nowrap;-webkit-text-stroke:0.25px #102010;">17.0</div>
<div style="position:absolute;left:736px;top:197px;width:14px;height:6px;background:#8dcdcb;border-right:1px solid rgba(70,100,70,0.35);border-bottom:1px solid rgba(70,100,70,0.35);"></div>
<div style="position:absolute;left:738.2px;top:197.3px;font-size:5.6px;line-height:6.6px;color:#102010;font-weight:normal;white-space:nowrap;-webkit-text-stroke:0.25px #102010;">18.6</div>
<div style="position:absolute;left:750px;top:197px;width:14px;height:6px;background:#8fd6be;border-right:1px solid rgba(70,100,70,0.35);border-bottom:1px solid rgba(70,100,70,0.35);"></div>
<div style="position:absolute;left:752.2px;top:197.3px;font-size:5.6px;line-height:6.6px;color:#102010;font-weight:normal;white-space:nowrap;-webkit-text-stroke:0.25px #102010;">20.0</div>
<div style="position:absolute;left:764px;top:197px;width:15px;height:6px;background:#92dfaf;border-right:1px solid rgba(70,100,70,0.35);border-bottom:1px solid rgba(70,100,70,0.35);"></div>
<div style="position:absolute;left:766.2px;top:197.3px;font-size:5.6px;line-height:6.6px;color:#102010;font-weight:normal;white-space:nowrap;-webkit-text-stroke:0.25px #102010;">21.6</div>
<div style="position:absolute;left:779px;top:197px;width:15px;height:6px;background:#94e8a2;border-right:1px solid rgba(70,100,70,0.35);border-bottom:1px solid rgba(70,100,70,0.35);"></div>
<div style="position:absolute;left:781.2px;top:197.3px;font-size:5.6px;line-height:6.6px;color:#102010;font-weight:normal;white-space:nowrap;-webkit-text-stroke:0.25px #102010;">23.0</div>
<div style="position:absolute;left:794px;top:197px;width:14px;height:6px;background:#99ee97;border-right:1px solid rgba(70,100,70,0.35);border-bottom:1px solid rgba(70,100,70,0.35);"></div>
<div style="position:absolute;left:796.2px;top:197.3px;font-size:5.6px;line-height:6.6px;color:#102010;font-weight:normal;white-space:nowrap;-webkit-text-stroke:0.25px #102010;">24.6</div>
<div style="position:absolute;left:808px;top:197px;width:14px;height:6px;background:#a6e599;border-right:1px solid rgba(70,100,70,0.35);border-bottom:1px solid rgba(70,100,70,0.35);"></div>
<div style="position:absolute;left:810.2px;top:197.3px;font-size:5.6px;line-height:6.6px;color:#102010;font-weight:normal;white-space:nowrap;-webkit-text-stroke:0.25px #102010;">26.0</div>
<div style="position:absolute;left:634px;top:203px;width:14px;height:7px;background:#c9c9c9;border-bottom:1px solid #aaaaaa;"></div>
<div style="position:absolute;left:634.5px;top:203.3px;font-size:5.6px;line-height:6.6px;color:#222;font-weight:normal;white-space:nowrap;-webkit-text-stroke:0.15px #222;">95</div>
<div style="position:absolute;left:648px;top:203px;width:15px;height:7px;background:#959cf5;border-right:1px solid rgba(70,100,70,0.35);border-bottom:1px solid rgba(70,100,70,0.35);"></div>
<div style="position:absolute;left:650.2px;top:203.3px;font-size:5.6px;line-height:6.6px;color:#102010;font-weight:normal;white-space:nowrap;-webkit-text-stroke:0.25px #102010;">10.9</div>
<div style="position:absolute;left:663px;top:203px;width:15px;height:7px;background:#93a3f0;border-right:1px solid rgba(70,100,70,0.35);border-bottom:1px solid rgba(70,100,70,0.35);"></div>
<div style="position:absolute;left:665.2px;top:203.3px;font-size:5.6px;line-height:6.6px;color:#102010;font-weight:normal;white-space:nowrap;-webkit-text-stroke:0.25px #102010;">12.0</div>
<div style="position:absolute;left:678px;top:203px;width:14px;height:7px;background:#92abea;border-right:1px solid rgba(70,100,70,0.35);border-bottom:1px solid rgba(70,100,70,0.35);"></div>
<div style="position:absolute;left:680.2px;top:203.3px;font-size:5.6px;line-height:6.6px;color:#102010;font-weight:normal;white-space:nowrap;-webkit-text-stroke:0.25px #102010;">13.2</div>
<div style="position:absolute;left:692px;top:203px;width:14px;height:7px;background:#90b4e2;border-right:1px solid rgba(70,100,70,0.35);border-bottom:1px solid rgba(70,100,70,0.35);"></div>
<div style="position:absolute;left:694.2px;top:203.3px;font-size:5.6px;line-height:6.6px;color:#102010;font-weight:normal;white-space:nowrap;-webkit-text-stroke:0.25px #102010;">14.7</div>
<div style="position:absolute;left:706px;top:203px;width:15px;height:7px;background:#8ebeda;border-right:1px solid rgba(70,100,70,0.35);border-bottom:1px solid rgba(70,100,70,0.35);"></div>
<div style="position:absolute;left:708.2px;top:203.3px;font-size:5.6px;line-height:6.6px;color:#102010;font-weight:normal;white-space:nowrap;-webkit-text-stroke:0.25px #102010;">16.2</div>
<div style="position:absolute;left:721px;top:203px;width:15px;height:7px;background:#8cc7d3;border-right:1px solid rgba(70,100,70,0.35);border-bottom:1px solid rgba(70,100,70,0.35);"></div>
<div style="position:absolute;left:723.2px;top:203.3px;font-size:5.6px;line-height:6.6px;color:#102010;font-weight:normal;white-space:nowrap;-webkit-text-stroke:0.25px #102010;">17.7</div>
<div style="position:absolute;left:736px;top:203px;width:14px;height:7px;background:#8ed1c5;border-right:1px solid rgba(70,100,70,0.35);border-bottom:1px solid rgba(70,100,70,0.35);"></div>
<div style="position:absolute;left:738.2px;top:203.3px;font-size:5.6px;line-height:6.6px;color:#102010;font-weight:normal;white-space:nowrap;-webkit-text-stroke:0.25px #102010;">19.2</div>
<div style="position:absolute;left:750px;top:203px;width:14px;height:7px;background:#90dab7;border-right:1px solid rgba(70,100,70,0.35);border-bottom:1px solid rgba(70,100,70,0.35);"></div>
<div style="position:absolute;left:752.2px;top:203.3px;font-size:5.6px;line-height:6.6px;color:#102010;font-weight:normal;white-space:nowrap;-webkit-text-stroke:0.25px #102010;">20.7</div>
<div style="position:absolute;left:764px;top:203px;width:15px;height:7px;background:#93e3a9;border-right:1px solid rgba(70,100,70,0.35);border-bottom:1px solid rgba(70,100,70,0.35);"></div>
<div style="position:absolute;left:766.2px;top:203.3px;font-size:5.6px;line-height:6.6px;color:#102010;font-weight:normal;white-space:nowrap;-webkit-text-stroke:0.25px #102010;">22.2</div>
<div style="position:absolute;left:779px;top:203px;width:15px;height:7px;background:#93e6a6;border-right:1px solid rgba(70,100,70,0.35);border-bottom:1px solid rgba(70,100,70,0.35);"></div>
<div style="position:absolute;left:781.2px;top:203.3px;font-size:5.6px;line-height:6.6px;color:#102010;font-weight:normal;white-space:nowrap;-webkit-text-stroke:0.25px #102010;">22.6</div>
<div style="position:absolute;left:794px;top:203px;width:14px;height:7px;background:#9eeb98;border-right:1px solid rgba(70,100,70,0.35);border-bottom:1px solid rgba(70,100,70,0.35);"></div>
<div style="position:absolute;left:796.2px;top:203.3px;font-size:5.6px;line-height:6.6px;color:#102010;font-weight:normal;white-space:nowrap;-webkit-text-stroke:0.25px #102010;">25.1</div>
<div style="position:absolute;left:808px;top:203px;width:14px;height:7px;background:#ace19a;border-right:1px solid rgba(70,100,70,0.35);border-bottom:1px solid rgba(70,100,70,0.35);"></div>
<div style="position:absolute;left:810.2px;top:203.3px;font-size:5.6px;line-height:6.6px;color:#102010;font-weight:normal;white-space:nowrap;-webkit-text-stroke:0.25px #102010;">26.6</div>
<div style="position:absolute;left:634px;top:210px;width:14px;height:6px;background:#c9c9c9;border-bottom:1px solid #aaaaaa;"></div>
<div style="position:absolute;left:634.5px;top:210.3px;font-size:5.6px;line-height:6.6px;color:#222;font-weight:normal;white-space:nowrap;-webkit-text-stroke:0.15px #222;">85</div>
<div style="position:absolute;left:648px;top:210px;width:15px;height:6px;background:#93a5ee;border-right:1px solid rgba(70,100,70,0.35);border-bottom:1px solid rgba(70,100,70,0.35);"></div>
<div style="position:absolute;left:650.2px;top:210.3px;font-size:5.6px;line-height:6.6px;color:#102010;font-weight:normal;white-space:nowrap;-webkit-text-stroke:0.25px #102010;">12.3</div>
<div style="position:absolute;left:663px;top:210px;width:15px;height:6px;background:#91ade8;border-right:1px solid rgba(70,100,70,0.35);border-bottom:1px solid rgba(70,100,70,0.35);"></div>
<div style="position:absolute;left:665.2px;top:210.3px;font-size:5.6px;line-height:6.6px;color:#102010;font-weight:normal;white-space:nowrap;-webkit-text-stroke:0.25px #102010;">13.6</div>
<div style="position:absolute;left:678px;top:210px;width:14px;height:6px;background:#90b4e2;border-right:1px solid rgba(70,100,70,0.35);border-bottom:1px solid rgba(70,100,70,0.35);"></div>
<div style="position:absolute;left:680.2px;top:210.3px;font-size:5.6px;line-height:6.6px;color:#102010;font-weight:normal;white-space:nowrap;-webkit-text-stroke:0.25px #102010;">14.7</div>
<div style="position:absolute;left:692px;top:210px;width:14px;height:6px;background:#8ebeda;border-right:1px solid rgba(70,100,70,0.35);border-bottom:1px solid rgba(70,100,70,0.35);"></div>
<div style="position:absolute;left:694.2px;top:210.3px;font-size:5.6px;line-height:6.6px;color:#102010;font-weight:normal;white-space:nowrap;-webkit-text-stroke:0.25px #102010;">16.2</div>
<div style="position:absolute;left:706px;top:210px;width:15px;height:6px;background:#8cc7d3;border-right:1px solid rgba(70,100,70,0.35);border-bottom:1px solid rgba(70,100,70,0.35);"></div>
<div style="position:absolute;left:708.2px;top:210.3px;font-size:5.6px;line-height:6.6px;color:#102010;font-weight:normal;white-space:nowrap;-webkit-text-stroke:0.25px #102010;">17.6</div>
<div style="position:absolute;left:721px;top:210px;width:15px;height:6px;background:#8ed0c6;border-right:1px solid rgba(70,100,70,0.35);border-bottom:1px solid rgba(70,100,70,0.35);"></div>
<div style="position:absolute;left:723.2px;top:210.3px;font-size:5.6px;line-height:6.6px;color:#102010;font-weight:normal;white-space:nowrap;-webkit-text-stroke:0.25px #102010;">19.1</div>
<div style="position:absolute;left:736px;top:210px;width:14px;height:6px;background:#90d9b8;border-right:1px solid rgba(70,100,70,0.35);border-bottom:1px solid rgba(70,100,70,0.35);"></div>
<div style="position:absolute;left:738.2px;top:210.3px;font-size:5.6px;line-height:6.6px;color:#102010;font-weight:normal;white-space:nowrap;-webkit-text-stroke:0.25px #102010;">20.6</div>
<div style="position:absolute;left:750px;top:210px;width:14px;height:6px;background:#92e2ab;border-right:1px solid rgba(70,100,70,0.35);border-bottom:1px solid rgba(70,100,70,0.35);"></div>
<div style="position:absolute;left:752.2px;top:210.3px;font-size:5.6px;line-height:6.6px;color:#102010;font-weight:normal;white-space:nowrap;-webkit-text-stroke:0.25px #102010;">22.0</div>
<div style="position:absolute;left:764px;top:210px;width:15px;height:6px;background:#95ec9c;border-right:1px solid rgba(70,100,70,0.35);border-bottom:1px solid rgba(70,100,70,0.35);"></div>
<div style="position:absolute;left:766.2px;top:210.3px;font-size:5.6px;line-height:6.6px;color:#102010;font-weight:normal;white-space:nowrap;-webkit-text-stroke:0.25px #102010;">23.6</div>
<div style="position:absolute;left:779px;top:210px;width:15px;height:6px;background:#99ee97;border-right:1px solid rgba(70,100,70,0.35);border-bottom:1px solid rgba(70,100,70,0.35);"></div>
<div style="position:absolute;left:781.2px;top:210.3px;font-size:5.6px;line-height:6.6px;color:#102010;font-weight:normal;white-space:nowrap;-webkit-text-stroke:0.25px #102010;">24.6</div>
<div style="position:absolute;left:794px;top:210px;width:14px;height:6px;background:#aae29a;border-right:1px solid rgba(70,100,70,0.35);border-bottom:1px solid rgba(70,100,70,0.35);"></div>
<div style="position:absolute;left:796.2px;top:210.3px;font-size:5.6px;line-height:6.6px;color:#102010;font-weight:normal;white-space:nowrap;-webkit-text-stroke:0.25px #102010;">26.4</div>
<div style="position:absolute;left:808px;top:210px;width:14px;height:6px;background:#b5da9c;border-right:1px solid rgba(70,100,70,0.35);border-bottom:1px solid rgba(70,100,70,0.35);"></div>
<div style="position:absolute;left:810.2px;top:210.3px;font-size:5.6px;line-height:6.6px;color:#102010;font-weight:normal;white-space:nowrap;-webkit-text-stroke:0.25px #102010;">27.5</div>
<div style="position:absolute;left:634px;top:216px;width:14px;height:7px;background:#c9c9c9;border-bottom:1px solid #aaaaaa;"></div>
<div style="position:absolute;left:634.5px;top:216.3px;font-size:5.6px;line-height:6.6px;color:#222;font-weight:normal;white-space:nowrap;-webkit-text-stroke:0.15px #222;">80</div>
<div style="position:absolute;left:648px;top:216px;width:15px;height:7px;background:#92a9eb;border-right:1px solid rgba(70,100,70,0.35);border-bottom:1px solid rgba(70,100,70,0.35);"></div>
<div style="position:absolute;left:650.2px;top:216.3px;font-size:5.6px;line-height:6.6px;color:#102010;font-weight:normal;white-space:nowrap;-webkit-text-stroke:0.25px #102010;">13.0</div>
<div style="position:absolute;left:663px;top:216px;width:15px;height:7px;background:#91b1e4;border-right:1px solid rgba(70,100,70,0.35);border-bottom:1px solid rgba(70,100,70,0.35);"></div>
<div style="position:absolute;left:665.2px;top:216.3px;font-size:5.6px;line-height:6.6px;color:#102010;font-weight:normal;white-space:nowrap;-webkit-text-stroke:0.25px #102010;">14.2</div>
<div style="position:absolute;left:678px;top:216px;width:14px;height:7px;background:#8fb9de;border-right:1px solid rgba(70,100,70,0.35);border-bottom:1px solid rgba(70,100,70,0.35);"></div>
<div style="position:absolute;left:680.2px;top:216.3px;font-size:5.6px;line-height:6.6px;color:#102010;font-weight:normal;white-space:nowrap;-webkit-text-stroke:0.25px #102010;">15.4</div>
<div style="position:absolute;left:692px;top:216px;width:14px;height:7px;background:#8dc2d7;border-right:1px solid rgba(70,100,70,0.35);border-bottom:1px solid rgba(70,100,70,0.35);"></div>
<div style="position:absolute;left:694.2px;top:216.3px;font-size:5.6px;line-height:6.6px;color:#102010;font-weight:normal;white-space:nowrap;-webkit-text-stroke:0.25px #102010;">16.9</div>
<div style="position:absolute;left:706px;top:216px;width:15px;height:7px;background:#8dcbcd;border-right:1px solid rgba(70,100,70,0.35);border-bottom:1px solid rgba(70,100,70,0.35);"></div>
<div style="position:absolute;left:708.2px;top:216.3px;font-size:5.6px;line-height:6.6px;color:#102010;font-weight:normal;white-space:nowrap;-webkit-text-stroke:0.25px #102010;">18.3</div>
<div style="position:absolute;left:721px;top:216px;width:15px;height:7px;background:#8fd4c0;border-right:1px solid rgba(70,100,70,0.35);border-bottom:1px solid rgba(70,100,70,0.35);"></div>
<div style="position:absolute;left:723.2px;top:216.3px;font-size:5.6px;line-height:6.6px;color:#102010;font-weight:normal;white-space:nowrap;-webkit-text-stroke:0.25px #102010;">19.8</div>
<div style="position:absolute;left:736px;top:216px;width:14px;height:7px;background:#91ddb3;border-right:1px solid rgba(70,100,70,0.35);border-bottom:1px solid rgba(70,100,70,0.35);"></div>
<div style="position:absolute;left:738.2px;top:216.3px;font-size:5.6px;line-height:6.6px;color:#102010;font-weight:normal;white-space:nowrap;-webkit-text-stroke:0.25px #102010;">21.2</div>
<div style="position:absolute;left:750px;top:216px;width:14px;height:7px;background:#94e6a5;border-right:1px solid rgba(70,100,70,0.35);border-bottom:1px solid rgba(70,100,70,0.35);"></div>
<div style="position:absolute;left:752.2px;top:216.3px;font-size:5.6px;line-height:6.6px;color:#102010;font-weight:normal;white-space:nowrap;-webkit-text-stroke:0.25px #102010;">22.7</div>
<div style="position:absolute;left:764px;top:216px;width:15px;height:7px;background:#96ef98;border-right:1px solid rgba(70,100,70,0.35);border-bottom:1px solid rgba(70,100,70,0.35);"></div>
<div style="position:absolute;left:766.2px;top:216.3px;font-size:5.6px;line-height:6.6px;color:#102010;font-weight:normal;white-space:nowrap;-webkit-text-stroke:0.25px #102010;">24.1</div>
<div style="position:absolute;left:779px;top:216px;width:15px;height:7px;background:#a2e798;border-right:1px solid rgba(70,100,70,0.35);border-bottom:1px solid rgba(70,100,70,0.35);"></div>
<div style="position:absolute;left:781.2px;top:216.3px;font-size:5.6px;line-height:6.6px;color:#102010;font-weight:normal;white-space:nowrap;-webkit-text-stroke:0.25px #102010;">25.6</div>
<div style="position:absolute;left:794px;top:216px;width:14px;height:7px;background:#b0de9b;border-right:1px solid rgba(70,100,70,0.35);border-bottom:1px solid rgba(70,100,70,0.35);"></div>
<div style="position:absolute;left:796.2px;top:216.3px;font-size:5.6px;line-height:6.6px;color:#102010;font-weight:normal;white-space:nowrap;-webkit-text-stroke:0.25px #102010;">27.0</div>
<div style="position:absolute;left:808px;top:216px;width:14px;height:7px;background:#bed49e;border-right:1px solid rgba(70,100,70,0.35);border-bottom:1px solid rgba(70,100,70,0.35);"></div>
<div style="position:absolute;left:810.2px;top:216.3px;font-size:5.6px;line-height:6.6px;color:#102010;font-weight:normal;white-space:nowrap;-webkit-text-stroke:0.25px #102010;">28.5</div>
<div style="position:absolute;left:634px;top:223px;width:14px;height:6px;background:#c9c9c9;border-bottom:1px solid #aaaaaa;"></div>
<div style="position:absolute;left:634.5px;top:223.3px;font-size:5.6px;line-height:6.6px;color:#222;font-weight:normal;white-space:nowrap;-webkit-text-stroke:0.15px #222;">70</div>
<div style="position:absolute;left:648px;top:223px;width:15px;height:6px;background:#90b3e2;border-right:1px solid rgba(70,100,70,0.35);border-bottom:1px solid rgba(70,100,70,0.35);"></div>
<div style="position:absolute;left:650.2px;top:223.3px;font-size:5.6px;line-height:6.6px;color:#102010;font-weight:normal;white-space:nowrap;-webkit-text-stroke:0.25px #102010;">14.6</div>
<div style="position:absolute;left:663px;top:223px;width:15px;height:6px;background:#8fbbdd;border-right:1px solid rgba(70,100,70,0.35);border-bottom:1px solid rgba(70,100,70,0.35);"></div>
<div style="position:absolute;left:665.2px;top:223.3px;font-size:5.6px;line-height:6.6px;color:#102010;font-weight:normal;white-space:nowrap;-webkit-text-stroke:0.25px #102010;">15.7</div>
<div style="position:absolute;left:678px;top:223px;width:14px;height:6px;background:#8dc2d7;border-right:1px solid rgba(70,100,70,0.35);border-bottom:1px solid rgba(70,100,70,0.35);"></div>
<div style="position:absolute;left:680.2px;top:223.3px;font-size:5.6px;line-height:6.6px;color:#102010;font-weight:normal;white-space:nowrap;-webkit-text-stroke:0.25px #102010;">16.9</div>
<div style="position:absolute;left:692px;top:223px;width:14px;height:6px;background:#8dcbcd;border-right:1px solid rgba(70,100,70,0.35);border-bottom:1px solid rgba(70,100,70,0.35);"></div>
<div style="position:absolute;left:694.2px;top:223.3px;font-size:5.6px;line-height:6.6px;color:#102010;font-weight:normal;white-space:nowrap;-webkit-text-stroke:0.25px #102010;">18.3</div>
<div style="position:absolute;left:706px;top:223px;width:15px;height:6px;background:#8fd4c0;border-right:1px solid rgba(70,100,70,0.35);border-bottom:1px solid rgba(70,100,70,0.35);"></div>
<div style="position:absolute;left:708.2px;top:223.3px;font-size:5.6px;line-height:6.6px;color:#102010;font-weight:normal;white-space:nowrap;-webkit-text-stroke:0.25px #102010;">19.7</div>
<div style="position:absolute;left:721px;top:223px;width:15px;height:6px;background:#91ddb3;border-right:1px solid rgba(70,100,70,0.35);border-bottom:1px solid rgba(70,100,70,0.35);"></div>
<div style="position:absolute;left:723.2px;top:223.3px;font-size:5.6px;line-height:6.6px;color:#102010;font-weight:normal;white-space:nowrap;-webkit-text-stroke:0.25px #102010;">21.2</div>
<div style="position:absolute;left:736px;top:223px;width:14px;height:6px;background:#93e6a6;border-right:1px solid rgba(70,100,70,0.35);border-bottom:1px solid rgba(70,100,70,0.35);"></div>
<div style="position:absolute;left:738.2px;top:223.3px;font-size:5.6px;line-height:6.6px;color:#102010;font-weight:normal;white-space:nowrap;-webkit-text-stroke:0.25px #102010;">22.6</div>
<div style="position:absolute;left:750px;top:223px;width:14px;height:6px;background:#96ee99;border-right:1px solid rgba(70,100,70,0.35);border-bottom:1px solid rgba(70,100,70,0.35);"></div>
<div style="position:absolute;left:752.2px;top:223.3px;font-size:5.6px;line-height:6.6px;color:#102010;font-weight:normal;white-space:nowrap;-webkit-text-stroke:0.25px #102010;">24.0</div>
<div style="position:absolute;left:764px;top:223px;width:15px;height:6px;background:#a2e798;border-right:1px solid rgba(70,100,70,0.35);border-bottom:1px solid rgba(70,100,70,0.35);"></div>
<div style="position:absolute;left:766.2px;top:223.3px;font-size:5.6px;line-height:6.6px;color:#102010;font-weight:normal;white-space:nowrap;-webkit-text-stroke:0.25px #102010;">25.6</div>
<div style="position:absolute;left:779px;top:223px;width:15px;height:6px;background:#afdf9b;border-right:1px solid rgba(70,100,70,0.35);border-bottom:1px solid rgba(70,100,70,0.35);"></div>
<div style="position:absolute;left:781.2px;top:223.3px;font-size:5.6px;line-height:6.6px;color:#102010;font-weight:normal;white-space:nowrap;-webkit-text-stroke:0.25px #102010;">26.9</div>
<div style="position:absolute;left:794px;top:223px;width:14px;height:6px;background:#bcd59e;border-right:1px solid rgba(70,100,70,0.35);border-bottom:1px solid rgba(70,100,70,0.35);"></div>
<div style="position:absolute;left:796.2px;top:223.3px;font-size:5.6px;line-height:6.6px;color:#102010;font-weight:normal;white-space:nowrap;-webkit-text-stroke:0.25px #102010;">28.3</div>
<div style="position:absolute;left:808px;top:223px;width:14px;height:6px;background:#cacba0;border-right:1px solid rgba(70,100,70,0.35);border-bottom:1px solid rgba(70,100,70,0.35);"></div>
<div style="position:absolute;left:810.2px;top:223.3px;font-size:5.6px;line-height:6.6px;color:#102010;font-weight:normal;white-space:nowrap;-webkit-text-stroke:0.25px #102010;">29.8</div>
<div style="position:absolute;left:634px;top:229px;width:14px;height:7px;background:#c9c9c9;border-bottom:1px solid #aaaaaa;"></div>
<div style="position:absolute;left:634.5px;top:229.3px;font-size:5.6px;line-height:6.6px;color:#222;font-weight:normal;white-space:nowrap;-webkit-text-stroke:0.15px #222;">65</div>
<div style="position:absolute;left:648px;top:229px;width:15px;height:7px;background:#8fb7df;border-right:1px solid rgba(70,100,70,0.35);border-bottom:1px solid rgba(70,100,70,0.35);"></div>
<div style="position:absolute;left:650.2px;top:229.3px;font-size:5.6px;line-height:6.6px;color:#102010;font-weight:normal;white-space:nowrap;-webkit-text-stroke:0.25px #102010;">15.2</div>
<div style="position:absolute;left:663px;top:229px;width:15px;height:7px;background:#8ebfd9;border-right:1px solid rgba(70,100,70,0.35);border-bottom:1px solid rgba(70,100,70,0.35);"></div>
<div style="position:absolute;left:665.2px;top:229.3px;font-size:5.6px;line-height:6.6px;color:#102010;font-weight:normal;white-space:nowrap;-webkit-text-stroke:0.25px #102010;">16.4</div>
<div style="position:absolute;left:678px;top:229px;width:14px;height:7px;background:#8cc7d3;border-right:1px solid rgba(70,100,70,0.35);border-bottom:1px solid rgba(70,100,70,0.35);"></div>
<div style="position:absolute;left:680.2px;top:229.3px;font-size:5.6px;line-height:6.6px;color:#102010;font-weight:normal;white-space:nowrap;-webkit-text-stroke:0.25px #102010;">17.6</div>
<div style="position:absolute;left:692px;top:229px;width:14px;height:7px;background:#8ecfc7;border-right:1px solid rgba(70,100,70,0.35);border-bottom:1px solid rgba(70,100,70,0.35);"></div>
<div style="position:absolute;left:694.2px;top:229.3px;font-size:5.6px;line-height:6.6px;color:#102010;font-weight:normal;white-space:nowrap;-webkit-text-stroke:0.25px #102010;">19.0</div>
<div style="position:absolute;left:706px;top:229px;width:15px;height:7px;background:#90d8ba;border-right:1px solid rgba(70,100,70,0.35);border-bottom:1px solid rgba(70,100,70,0.35);"></div>
<div style="position:absolute;left:708.2px;top:229.3px;font-size:5.6px;line-height:6.6px;color:#102010;font-weight:normal;white-space:nowrap;-webkit-text-stroke:0.25px #102010;">20.4</div>
<div style="position:absolute;left:721px;top:229px;width:15px;height:7px;background:#92e1ac;border-right:1px solid rgba(70,100,70,0.35);border-bottom:1px solid rgba(70,100,70,0.35);"></div>
<div style="position:absolute;left:723.2px;top:229.3px;font-size:5.6px;line-height:6.6px;color:#102010;font-weight:normal;white-space:nowrap;-webkit-text-stroke:0.25px #102010;">21.9</div>
<div style="position:absolute;left:736px;top:229px;width:14px;height:7px;background:#c8e830;border-right:1px solid rgba(70,100,70,0.35);border-bottom:1px solid rgba(70,100,70,0.35);"></div>
<div style="position:absolute;left:738.2px;top:229.3px;font-size:5.6px;line-height:6.6px;color:#102010;font-weight:normal;white-space:nowrap;-webkit-text-stroke:0.25px #102010;">23.3</div>
<div style="position:absolute;left:750px;top:229px;width:14px;height:7px;background:#e8e818;border-right:1px solid rgba(70,100,70,0.35);border-bottom:1px solid rgba(70,100,70,0.35);"></div>
<div style="position:absolute;left:752.2px;top:229.3px;font-size:5.6px;line-height:6.6px;color:#102010;font-weight:normal;white-space:nowrap;-webkit-text-stroke:0.25px #102010;">24.7</div>
<div style="position:absolute;left:764px;top:229px;width:15px;height:7px;background:#a7e499;border-right:1px solid rgba(70,100,70,0.35);border-bottom:1px solid rgba(70,100,70,0.35);"></div>
<div style="position:absolute;left:766.2px;top:229.3px;font-size:5.6px;line-height:6.6px;color:#102010;font-weight:normal;white-space:nowrap;-webkit-text-stroke:0.25px #102010;">26.1</div>
<div style="position:absolute;left:779px;top:229px;width:15px;height:7px;background:#b5da9c;border-right:1px solid rgba(70,100,70,0.35);border-bottom:1px solid rgba(70,100,70,0.35);"></div>
<div style="position:absolute;left:781.2px;top:229.3px;font-size:5.6px;line-height:6.6px;color:#102010;font-weight:normal;white-space:nowrap;-webkit-text-stroke:0.25px #102010;">27.5</div>
<div style="position:absolute;left:794px;top:229px;width:14px;height:7px;background:#c3d09f;border-right:1px solid rgba(70,100,70,0.35);border-bottom:1px solid rgba(70,100,70,0.35);"></div>
<div style="position:absolute;left:796.2px;top:229.3px;font-size:5.6px;line-height:6.6px;color:#102010;font-weight:normal;white-space:nowrap;-webkit-text-stroke:0.25px #102010;">29.0</div>
<div style="position:absolute;left:808px;top:229px;width:14px;height:7px;background:#cec7a0;border-right:1px solid rgba(70,100,70,0.35);border-bottom:1px solid rgba(70,100,70,0.35);"></div>
<div style="position:absolute;left:810.2px;top:229.3px;font-size:5.6px;line-height:6.6px;color:#102010;font-weight:normal;white-space:nowrap;-webkit-text-stroke:0.25px #102010;">30.4</div>
<div style="position:absolute;left:634px;top:236px;width:14px;height:6px;background:#c9c9c9;border-bottom:1px solid #aaaaaa;"></div>
<div style="position:absolute;left:634.5px;top:236.3px;font-size:5.6px;line-height:6.6px;color:#222;font-weight:normal;white-space:nowrap;-webkit-text-stroke:0.15px #222;">60</div>
<div style="position:absolute;left:648px;top:236px;width:15px;height:6px;background:#8ebcdb;border-right:1px solid rgba(70,100,70,0.35);border-bottom:1px solid rgba(70,100,70,0.35);"></div>
<div style="position:absolute;left:650.2px;top:236.3px;font-size:5.6px;line-height:6.6px;color:#102010;font-weight:normal;white-space:nowrap;-webkit-text-stroke:0.25px #102010;">16.0</div>
<div style="position:absolute;left:663px;top:236px;width:15px;height:6px;background:#8dc4d5;border-right:1px solid rgba(70,100,70,0.35);border-bottom:1px solid rgba(70,100,70,0.35);"></div>
<div style="position:absolute;left:665.2px;top:236.3px;font-size:5.6px;line-height:6.6px;color:#102010;font-weight:normal;white-space:nowrap;-webkit-text-stroke:0.25px #102010;">17.2</div>
<div style="position:absolute;left:678px;top:236px;width:14px;height:6px;background:#8dcbcd;border-right:1px solid rgba(70,100,70,0.35);border-bottom:1px solid rgba(70,100,70,0.35);"></div>
<div style="position:absolute;left:680.2px;top:236.3px;font-size:5.6px;line-height:6.6px;color:#102010;font-weight:normal;white-space:nowrap;-webkit-text-stroke:0.25px #102010;">18.3</div>
<div style="position:absolute;left:692px;top:236px;width:14px;height:6px;background:#8fd4c0;border-right:1px solid rgba(70,100,70,0.35);border-bottom:1px solid rgba(70,100,70,0.35);"></div>
<div style="position:absolute;left:694.2px;top:236.3px;font-size:5.6px;line-height:6.6px;color:#102010;font-weight:normal;white-space:nowrap;-webkit-text-stroke:0.25px #102010;">19.8</div>
<div style="position:absolute;left:706px;top:236px;width:15px;height:6px;background:#91ddb3;border-right:1px solid rgba(70,100,70,0.35);border-bottom:1px solid rgba(70,100,70,0.35);"></div>
<div style="position:absolute;left:708.2px;top:236.3px;font-size:5.6px;line-height:6.6px;color:#102010;font-weight:normal;white-space:nowrap;-webkit-text-stroke:0.25px #102010;">21.2</div>
<div style="position:absolute;left:721px;top:236px;width:15px;height:6px;background:#93e6a6;border-right:1px solid rgba(70,100,70,0.35);border-bottom:1px solid rgba(70,100,70,0.35);"></div>
<div style="position:absolute;left:723.2px;top:236.3px;font-size:5.6px;line-height:6.6px;color:#102010;font-weight:normal;white-space:nowrap;-webkit-text-stroke:0.25px #102010;">22.6</div>
<div style="position:absolute;left:736px;top:236px;width:14px;height:6px;background:#d8e820;border-right:1px solid rgba(70,100,70,0.35);border-bottom:1px solid rgba(70,100,70,0.35);"></div>
<div style="position:absolute;left:738.2px;top:236.3px;font-size:5.6px;line-height:6.6px;color:#102010;font-weight:normal;white-space:nowrap;-webkit-text-stroke:0.25px #102010;">24.0</div>
<div style="position:absolute;left:750px;top:236px;width:14px;height:6px;background:#e8e818;border-right:1px solid rgba(70,100,70,0.35);border-bottom:1px solid rgba(70,100,70,0.35);"></div>
<div style="position:absolute;left:752.2px;top:236.3px;font-size:5.6px;line-height:6.6px;color:#102010;font-weight:normal;white-space:nowrap;-webkit-text-stroke:0.25px #102010;">25.4</div>
<div style="position:absolute;left:764px;top:236px;width:15px;height:6px;background:#aedf9b;border-right:1px solid rgba(70,100,70,0.35);border-bottom:1px solid rgba(70,100,70,0.35);"></div>
<div style="position:absolute;left:766.2px;top:236.3px;font-size:5.6px;line-height:6.6px;color:#102010;font-weight:normal;white-space:nowrap;-webkit-text-stroke:0.25px #102010;">26.8</div>
<div style="position:absolute;left:779px;top:236px;width:15px;height:6px;background:#bcd69e;border-right:1px solid rgba(70,100,70,0.35);border-bottom:1px solid rgba(70,100,70,0.35);"></div>
<div style="position:absolute;left:781.2px;top:236.3px;font-size:5.6px;line-height:6.6px;color:#102010;font-weight:normal;white-space:nowrap;-webkit-text-stroke:0.25px #102010;">28.2</div>
<div style="position:absolute;left:794px;top:236px;width:14px;height:6px;background:#c9cca0;border-right:1px solid rgba(70,100,70,0.35);border-bottom:1px solid rgba(70,100,70,0.35);"></div>
<div style="position:absolute;left:796.2px;top:236.3px;font-size:5.6px;line-height:6.6px;color:#102010;font-weight:normal;white-space:nowrap;-webkit-text-stroke:0.25px #102010;">29.6</div>
<div style="position:absolute;left:808px;top:236px;width:14px;height:6px;background:#d2c3a0;border-right:1px solid rgba(70,100,70,0.35);border-bottom:1px solid rgba(70,100,70,0.35);"></div>
<div style="position:absolute;left:810.2px;top:236.3px;font-size:5.6px;line-height:6.6px;color:#102010;font-weight:normal;white-space:nowrap;-webkit-text-stroke:0.25px #102010;">31.0</div>
<div style="position:absolute;left:634px;top:242px;width:14px;height:6px;background:#c9c9c9;border-bottom:1px solid #aaaaaa;"></div>
<div style="position:absolute;left:634.5px;top:242.3px;font-size:5.6px;line-height:6.6px;color:#222;font-weight:normal;white-space:nowrap;-webkit-text-stroke:0.15px #222;">50</div>
<div style="position:absolute;left:648px;top:242px;width:15px;height:6px;background:#8cc7d3;border-right:1px solid rgba(70,100,70,0.35);border-bottom:1px solid rgba(70,100,70,0.35);"></div>
<div style="position:absolute;left:650.2px;top:242.3px;font-size:5.6px;line-height:6.6px;color:#102010;font-weight:normal;white-space:nowrap;-webkit-text-stroke:0.25px #102010;">17.6</div>
<div style="position:absolute;left:663px;top:242px;width:15px;height:6px;background:#8fd4c0;border-right:1px solid rgba(70,100,70,0.35);border-bottom:1px solid rgba(70,100,70,0.35);"></div>
<div style="position:absolute;left:665.2px;top:242.3px;font-size:5.6px;line-height:6.6px;color:#102010;font-weight:normal;white-space:nowrap;-webkit-text-stroke:0.25px #102010;">19.7</div>
<div style="position:absolute;left:678px;top:242px;width:14px;height:6px;background:#8fd5bf;border-right:1px solid rgba(70,100,70,0.35);border-bottom:1px solid rgba(70,100,70,0.35);"></div>
<div style="position:absolute;left:680.2px;top:242.3px;font-size:5.6px;line-height:6.6px;color:#102010;font-weight:normal;white-space:nowrap;-webkit-text-stroke:0.25px #102010;">19.9</div>
<div style="position:absolute;left:692px;top:242px;width:14px;height:6px;background:#91ddb3;border-right:1px solid rgba(70,100,70,0.35);border-bottom:1px solid rgba(70,100,70,0.35);"></div>
<div style="position:absolute;left:694.2px;top:242.3px;font-size:5.6px;line-height:6.6px;color:#102010;font-weight:normal;white-space:nowrap;-webkit-text-stroke:0.25px #102010;">21.2</div>
<div style="position:absolute;left:706px;top:242px;width:15px;height:6px;background:#93e6a6;border-right:1px solid rgba(70,100,70,0.35);border-bottom:1px solid rgba(70,100,70,0.35);"></div>
<div style="position:absolute;left:708.2px;top:242.3px;font-size:5.6px;line-height:6.6px;color:#102010;font-weight:normal;white-space:nowrap;-webkit-text-stroke:0.25px #102010;">22.6</div>
<div style="position:absolute;left:721px;top:242px;width:15px;height:6px;background:#96ee99;border-right:1px solid rgba(70,100,70,0.35);border-bottom:1px solid rgba(70,100,70,0.35);"></div>
<div style="position:absolute;left:723.2px;top:242.3px;font-size:5.6px;line-height:6.6px;color:#102010;font-weight:normal;white-space:nowrap;-webkit-text-stroke:0.25px #102010;">24.0</div>
<div style="position:absolute;left:736px;top:242px;width:14px;height:6px;background:#a0e998;border-right:1px solid rgba(70,100,70,0.35);border-bottom:1px solid rgba(70,100,70,0.35);"></div>
<div style="position:absolute;left:738.2px;top:242.3px;font-size:5.6px;line-height:6.6px;color:#102010;font-weight:normal;white-space:nowrap;-webkit-text-stroke:0.25px #102010;">25.3</div>
<div style="position:absolute;left:750px;top:242px;width:14px;height:6px;background:#ade09b;border-right:1px solid rgba(70,100,70,0.35);border-bottom:1px solid rgba(70,100,70,0.35);"></div>
<div style="position:absolute;left:752.2px;top:242.3px;font-size:5.6px;line-height:6.6px;color:#102010;font-weight:normal;white-space:nowrap;-webkit-text-stroke:0.25px #102010;">26.7</div>
<div style="position:absolute;left:764px;top:242px;width:15px;height:6px;background:#bbd69d;border-right:1px solid rgba(70,100,70,0.35);border-bottom:1px solid rgba(70,100,70,0.35);"></div>
<div style="position:absolute;left:766.2px;top:242.3px;font-size:5.6px;line-height:6.6px;color:#102010;font-weight:normal;white-space:nowrap;-webkit-text-stroke:0.25px #102010;">28.1</div>
<div style="position:absolute;left:779px;top:242px;width:15px;height:6px;background:#c9cca0;border-right:1px solid rgba(70,100,70,0.35);border-bottom:1px solid rgba(70,100,70,0.35);"></div>
<div style="position:absolute;left:781.2px;top:242.3px;font-size:5.6px;line-height:6.6px;color:#102010;font-weight:normal;white-space:nowrap;-webkit-text-stroke:0.25px #102010;">29.6</div>
<div style="position:absolute;left:794px;top:242px;width:14px;height:6px;background:#d2c3a0;border-right:1px solid rgba(70,100,70,0.35);border-bottom:1px solid rgba(70,100,70,0.35);"></div>
<div style="position:absolute;left:796.2px;top:242.3px;font-size:5.6px;line-height:6.6px;color:#102010;font-weight:normal;white-space:nowrap;-webkit-text-stroke:0.25px #102010;">30.9</div>
<div style="position:absolute;left:808px;top:242px;width:14px;height:6px;background:#dbbaa0;border-right:1px solid rgba(70,100,70,0.35);border-bottom:1px solid rgba(70,100,70,0.35);"></div>
<div style="position:absolute;left:810.2px;top:242.3px;font-size:5.6px;line-height:6.6px;color:#102010;font-weight:normal;white-space:nowrap;-webkit-text-stroke:0.25px #102010;">32.3</div>
<div style="position:absolute;left:634px;top:248px;width:14px;height:7px;background:#c9c9c9;border-bottom:1px solid #aaaaaa;"></div>
<div style="position:absolute;left:634.5px;top:248.3px;font-size:5.6px;line-height:6.6px;color:#222;font-weight:normal;white-space:nowrap;-webkit-text-stroke:0.15px #222;">45</div>
<div style="position:absolute;left:648px;top:248px;width:15px;height:7px;background:#8dcbcd;border-right:1px solid rgba(70,100,70,0.35);border-bottom:1px solid rgba(70,100,70,0.35);"></div>
<div style="position:absolute;left:650.2px;top:248.3px;font-size:5.6px;line-height:6.6px;color:#102010;font-weight:normal;white-space:nowrap;-webkit-text-stroke:0.25px #102010;">18.3</div>
<div style="position:absolute;left:663px;top:248px;width:15px;height:7px;background:#8ed2c3;border-right:1px solid rgba(70,100,70,0.35);border-bottom:1px solid rgba(70,100,70,0.35);"></div>
<div style="position:absolute;left:665.2px;top:248.3px;font-size:5.6px;line-height:6.6px;color:#102010;font-weight:normal;white-space:nowrap;-webkit-text-stroke:0.25px #102010;">19.4</div>
<div style="position:absolute;left:678px;top:248px;width:14px;height:7px;background:#90d9b8;border-right:1px solid rgba(70,100,70,0.35);border-bottom:1px solid rgba(70,100,70,0.35);"></div>
<div style="position:absolute;left:680.2px;top:248.3px;font-size:5.6px;line-height:6.6px;color:#102010;font-weight:normal;white-space:nowrap;-webkit-text-stroke:0.25px #102010;">20.6</div>
<div style="position:absolute;left:692px;top:248px;width:14px;height:7px;background:#92e1ac;border-right:1px solid rgba(70,100,70,0.35);border-bottom:1px solid rgba(70,100,70,0.35);"></div>
<div style="position:absolute;left:694.2px;top:248.3px;font-size:5.6px;line-height:6.6px;color:#102010;font-weight:normal;white-space:nowrap;-webkit-text-stroke:0.25px #102010;">21.9</div>
<div style="position:absolute;left:706px;top:248px;width:15px;height:7px;background:#94ea9f;border-right:1px solid rgba(70,100,70,0.35);border-bottom:1px solid rgba(70,100,70,0.35);"></div>
<div style="position:absolute;left:708.2px;top:248.3px;font-size:5.6px;line-height:6.6px;color:#102010;font-weight:normal;white-space:nowrap;-webkit-text-stroke:0.25px #102010;">23.3</div>
<div style="position:absolute;left:721px;top:248px;width:15px;height:7px;background:#99ee97;border-right:1px solid rgba(70,100,70,0.35);border-bottom:1px solid rgba(70,100,70,0.35);"></div>
<div style="position:absolute;left:723.2px;top:248.3px;font-size:5.6px;line-height:6.6px;color:#102010;font-weight:normal;white-space:nowrap;-webkit-text-stroke:0.25px #102010;">24.6</div>
<div style="position:absolute;left:736px;top:248px;width:14px;height:7px;background:#a6e599;border-right:1px solid rgba(70,100,70,0.35);border-bottom:1px solid rgba(70,100,70,0.35);"></div>
<div style="position:absolute;left:738.2px;top:248.3px;font-size:5.6px;line-height:6.6px;color:#102010;font-weight:normal;white-space:nowrap;-webkit-text-stroke:0.25px #102010;">26.0</div>
<div style="position:absolute;left:750px;top:248px;width:14px;height:7px;background:#b4db9c;border-right:1px solid rgba(70,100,70,0.35);border-bottom:1px solid rgba(70,100,70,0.35);"></div>
<div style="position:absolute;left:752.2px;top:248.3px;font-size:5.6px;line-height:6.6px;color:#102010;font-weight:normal;white-space:nowrap;-webkit-text-stroke:0.25px #102010;">27.4</div>
<div style="position:absolute;left:764px;top:248px;width:15px;height:7px;background:#c1d29f;border-right:1px solid rgba(70,100,70,0.35);border-bottom:1px solid rgba(70,100,70,0.35);"></div>
<div style="position:absolute;left:766.2px;top:248.3px;font-size:5.6px;line-height:6.6px;color:#102010;font-weight:normal;white-space:nowrap;-webkit-text-stroke:0.25px #102010;">28.8</div>
<div style="position:absolute;left:779px;top:248px;width:15px;height:7px;background:#ccc9a0;border-right:1px solid rgba(70,100,70,0.35);border-bottom:1px solid rgba(70,100,70,0.35);"></div>
<div style="position:absolute;left:781.2px;top:248.3px;font-size:5.6px;line-height:6.6px;color:#102010;font-weight:normal;white-space:nowrap;-webkit-text-stroke:0.25px #102010;">30.1</div>
<div style="position:absolute;left:794px;top:248px;width:14px;height:7px;background:#d7bea0;border-right:1px solid rgba(70,100,70,0.35);border-bottom:1px solid rgba(70,100,70,0.35);"></div>
<div style="position:absolute;left:796.2px;top:248.3px;font-size:5.6px;line-height:6.6px;color:#102010;font-weight:normal;white-space:nowrap;-webkit-text-stroke:0.25px #102010;">31.6</div>
<div style="position:absolute;left:808px;top:248px;width:14px;height:7px;background:#e0b5a0;border-right:1px solid rgba(70,100,70,0.35);border-bottom:1px solid rgba(70,100,70,0.35);"></div>
<div style="position:absolute;left:810.2px;top:248.3px;font-size:5.6px;line-height:6.6px;color:#102010;font-weight:normal;white-space:nowrap;-webkit-text-stroke:0.25px #102010;">32.9</div>
<div style="position:absolute;left:634px;top:255px;width:14px;height:6px;background:#c9c9c9;border-bottom:1px solid #aaaaaa;"></div>
<div style="position:absolute;left:634.5px;top:255.3px;font-size:5.6px;line-height:6.6px;color:#222;font-weight:normal;white-space:nowrap;-webkit-text-stroke:0.15px #222;">35</div>
<div style="position:absolute;left:648px;top:255px;width:15px;height:6px;background:#8fd5bf;border-right:1px solid rgba(70,100,70,0.35);border-bottom:1px solid rgba(70,100,70,0.35);"></div>
<div style="position:absolute;left:650.2px;top:255.3px;font-size:5.6px;line-height:6.6px;color:#102010;font-weight:normal;white-space:nowrap;-webkit-text-stroke:0.25px #102010;">19.9</div>
<div style="position:absolute;left:663px;top:255px;width:15px;height:6px;background:#91dbb5;border-right:1px solid rgba(70,100,70,0.35);border-bottom:1px solid rgba(70,100,70,0.35);"></div>
<div style="position:absolute;left:665.2px;top:255.3px;font-size:5.6px;line-height:6.6px;color:#102010;font-weight:normal;white-space:nowrap;-webkit-text-stroke:0.25px #102010;">20.9</div>
<div style="position:absolute;left:678px;top:255px;width:14px;height:6px;background:#92e2ab;border-right:1px solid rgba(70,100,70,0.35);border-bottom:1px solid rgba(70,100,70,0.35);"></div>
<div style="position:absolute;left:680.2px;top:255.3px;font-size:5.6px;line-height:6.6px;color:#102010;font-weight:normal;white-space:nowrap;-webkit-text-stroke:0.25px #102010;">22.0</div>
<div style="position:absolute;left:692px;top:255px;width:14px;height:6px;background:#93e4a8;border-right:1px solid rgba(70,100,70,0.35);border-bottom:1px solid rgba(70,100,70,0.35);"></div>
<div style="position:absolute;left:694.2px;top:255.3px;font-size:5.6px;line-height:6.6px;color:#102010;font-weight:normal;white-space:nowrap;-webkit-text-stroke:0.25px #102010;">22.3</div>
<div style="position:absolute;left:706px;top:255px;width:15px;height:6px;background:#9aed97;border-right:1px solid rgba(70,100,70,0.35);border-bottom:1px solid rgba(70,100,70,0.35);"></div>
<div style="position:absolute;left:708.2px;top:255.3px;font-size:5.6px;line-height:6.6px;color:#102010;font-weight:normal;white-space:nowrap;-webkit-text-stroke:0.25px #102010;">24.7</div>
<div style="position:absolute;left:721px;top:255px;width:15px;height:6px;background:#a6e599;border-right:1px solid rgba(70,100,70,0.35);border-bottom:1px solid rgba(70,100,70,0.35);"></div>
<div style="position:absolute;left:723.2px;top:255.3px;font-size:5.6px;line-height:6.6px;color:#102010;font-weight:normal;white-space:nowrap;-webkit-text-stroke:0.25px #102010;">26.0</div>
<div style="position:absolute;left:736px;top:255px;width:14px;height:6px;background:#b4db9c;border-right:1px solid rgba(70,100,70,0.35);border-bottom:1px solid rgba(70,100,70,0.35);"></div>
<div style="position:absolute;left:738.2px;top:255.3px;font-size:5.6px;line-height:6.6px;color:#102010;font-weight:normal;white-space:nowrap;-webkit-text-stroke:0.25px #102010;">27.4</div>
<div style="position:absolute;left:750px;top:255px;width:14px;height:6px;background:#c0d29e;border-right:1px solid rgba(70,100,70,0.35);border-bottom:1px solid rgba(70,100,70,0.35);"></div>
<div style="position:absolute;left:752.2px;top:255.3px;font-size:5.6px;line-height:6.6px;color:#102010;font-weight:normal;white-space:nowrap;-webkit-text-stroke:0.25px #102010;">28.7</div>
<div style="position:absolute;left:764px;top:255px;width:15px;height:6px;background:#ccc9a0;border-right:1px solid rgba(70,100,70,0.35);border-bottom:1px solid rgba(70,100,70,0.35);"></div>
<div style="position:absolute;left:766.2px;top:255.3px;font-size:5.6px;line-height:6.6px;color:#102010;font-weight:normal;white-space:nowrap;-webkit-text-stroke:0.25px #102010;">30.1</div>
<div style="position:absolute;left:779px;top:255px;width:15px;height:6px;background:#d5c0a0;border-right:1px solid rgba(70,100,70,0.35);border-bottom:1px solid rgba(70,100,70,0.35);"></div>
<div style="position:absolute;left:781.2px;top:255.3px;font-size:5.6px;line-height:6.6px;color:#102010;font-weight:normal;white-space:nowrap;-webkit-text-stroke:0.25px #102010;">31.4</div>
<div style="position:absolute;left:794px;top:255px;width:14px;height:6px;background:#e0b5a0;border-right:1px solid rgba(70,100,70,0.35);border-bottom:1px solid rgba(70,100,70,0.35);"></div>
<div style="position:absolute;left:796.2px;top:255.3px;font-size:5.6px;line-height:6.6px;color:#102010;font-weight:normal;white-space:nowrap;-webkit-text-stroke:0.25px #102010;">32.9</div>
<div style="position:absolute;left:808px;top:255px;width:14px;height:6px;background:#e8ada0;border-right:1px solid rgba(70,100,70,0.35);border-bottom:1px solid rgba(70,100,70,0.35);"></div>
<div style="position:absolute;left:810.2px;top:255.3px;font-size:5.6px;line-height:6.6px;color:#102010;font-weight:normal;white-space:nowrap;-webkit-text-stroke:0.25px #102010;">34.1</div>
<div style="position:absolute;left:634px;top:261px;width:14px;height:7px;background:#c9c9c9;border-bottom:1px solid #aaaaaa;"></div>
<div style="position:absolute;left:634.5px;top:261.3px;font-size:5.6px;line-height:6.6px;color:#222;font-weight:normal;white-space:nowrap;-webkit-text-stroke:0.15px #222;">30</div>
<div style="position:absolute;left:648px;top:261px;width:15px;height:7px;background:#90d9b8;border-right:1px solid rgba(70,100,70,0.35);border-bottom:1px solid rgba(70,100,70,0.35);"></div>
<div style="position:absolute;left:650.2px;top:261.3px;font-size:5.6px;line-height:6.6px;color:#102010;font-weight:normal;white-space:nowrap;-webkit-text-stroke:0.25px #102010;">20.6</div>
<div style="position:absolute;left:663px;top:261px;width:15px;height:7px;background:#92dfaf;border-right:1px solid rgba(70,100,70,0.35);border-bottom:1px solid rgba(70,100,70,0.35);"></div>
<div style="position:absolute;left:665.2px;top:261.3px;font-size:5.6px;line-height:6.6px;color:#102010;font-weight:normal;white-space:nowrap;-webkit-text-stroke:0.25px #102010;">21.6</div>
<div style="position:absolute;left:678px;top:261px;width:14px;height:7px;background:#94e6a5;border-right:1px solid rgba(70,100,70,0.35);border-bottom:1px solid rgba(70,100,70,0.35);"></div>
<div style="position:absolute;left:680.2px;top:261.3px;font-size:5.6px;line-height:6.6px;color:#102010;font-weight:normal;white-space:nowrap;-webkit-text-stroke:0.25px #102010;">22.7</div>
<div style="position:absolute;left:692px;top:261px;width:14px;height:7px;background:#96ef98;border-right:1px solid rgba(70,100,70,0.35);border-bottom:1px solid rgba(70,100,70,0.35);"></div>
<div style="position:absolute;left:694.2px;top:261.3px;font-size:5.6px;line-height:6.6px;color:#102010;font-weight:normal;white-space:nowrap;-webkit-text-stroke:0.25px #102010;">24.1</div>
<div style="position:absolute;left:706px;top:261px;width:15px;height:7px;background:#a1e998;border-right:1px solid rgba(70,100,70,0.35);border-bottom:1px solid rgba(70,100,70,0.35);"></div>
<div style="position:absolute;left:708.2px;top:261.3px;font-size:5.6px;line-height:6.6px;color:#102010;font-weight:normal;white-space:nowrap;-webkit-text-stroke:0.25px #102010;">25.4</div>
<div style="position:absolute;left:721px;top:261px;width:15px;height:7px;background:#ade09b;border-right:1px solid rgba(70,100,70,0.35);border-bottom:1px solid rgba(70,100,70,0.35);"></div>
<div style="position:absolute;left:723.2px;top:261.3px;font-size:5.6px;line-height:6.6px;color:#102010;font-weight:normal;white-space:nowrap;-webkit-text-stroke:0.25px #102010;">26.7</div>
<div style="position:absolute;left:736px;top:261px;width:14px;height:7px;background:#bbd69d;border-right:1px solid rgba(70,100,70,0.35);border-bottom:1px solid rgba(70,100,70,0.35);"></div>
<div style="position:absolute;left:738.2px;top:261.3px;font-size:5.6px;line-height:6.6px;color:#102010;font-weight:normal;white-space:nowrap;-webkit-text-stroke:0.25px #102010;">28.1</div>
<div style="position:absolute;left:750px;top:261px;width:14px;height:7px;background:#c7cea0;border-right:1px solid rgba(70,100,70,0.35);border-bottom:1px solid rgba(70,100,70,0.35);"></div>
<div style="position:absolute;left:752.2px;top:261.3px;font-size:5.6px;line-height:6.6px;color:#102010;font-weight:normal;white-space:nowrap;-webkit-text-stroke:0.25px #102010;">29.4</div>
<div style="position:absolute;left:764px;top:261px;width:15px;height:7px;background:#d0c5a0;border-right:1px solid rgba(70,100,70,0.35);border-bottom:1px solid rgba(70,100,70,0.35);"></div>
<div style="position:absolute;left:766.2px;top:261.3px;font-size:5.6px;line-height:6.6px;color:#102010;font-weight:normal;white-space:nowrap;-webkit-text-stroke:0.25px #102010;">30.7</div>
<div style="position:absolute;left:779px;top:261px;width:15px;height:7px;background:#dabba0;border-right:1px solid rgba(70,100,70,0.35);border-bottom:1px solid rgba(70,100,70,0.35);"></div>
<div style="position:absolute;left:781.2px;top:261.3px;font-size:5.6px;line-height:6.6px;color:#102010;font-weight:normal;white-space:nowrap;-webkit-text-stroke:0.25px #102010;">32.1</div>
<div style="position:absolute;left:794px;top:261px;width:14px;height:7px;background:#e3b2a0;border-right:1px solid rgba(70,100,70,0.35);border-bottom:1px solid rgba(70,100,70,0.35);"></div>
<div style="position:absolute;left:796.2px;top:261.3px;font-size:5.6px;line-height:6.6px;color:#102010;font-weight:normal;white-space:nowrap;-webkit-text-stroke:0.25px #102010;">33.4</div>
<div style="position:absolute;left:808px;top:261px;width:14px;height:7px;background:#eda8a0;border-right:1px solid rgba(70,100,70,0.35);border-bottom:1px solid rgba(70,100,70,0.35);"></div>
<div style="position:absolute;left:810.2px;top:261.3px;font-size:5.6px;line-height:6.6px;color:#102010;font-weight:normal;white-space:nowrap;-webkit-text-stroke:0.25px #102010;">34.8</div>
<div style="position:absolute;left:634px;top:268px;width:14px;height:6px;background:#c9c9c9;border-bottom:1px solid #aaaaaa;"></div>
<div style="position:absolute;left:634.5px;top:268.3px;font-size:5.6px;line-height:6.6px;color:#222;font-weight:normal;white-space:nowrap;-webkit-text-stroke:0.15px #222;">20</div>
<div style="position:absolute;left:648px;top:268px;width:15px;height:6px;background:#92e2ab;border-right:1px solid rgba(70,100,70,0.35);border-bottom:1px solid rgba(70,100,70,0.35);"></div>
<div style="position:absolute;left:650.2px;top:268.3px;font-size:5.6px;line-height:6.6px;color:#102010;font-weight:normal;white-space:nowrap;-webkit-text-stroke:0.25px #102010;">22.0</div>
<div style="position:absolute;left:663px;top:268px;width:15px;height:6px;background:#94e9a1;border-right:1px solid rgba(70,100,70,0.35);border-bottom:1px solid rgba(70,100,70,0.35);"></div>
<div style="position:absolute;left:665.2px;top:268.3px;font-size:5.6px;line-height:6.6px;color:#102010;font-weight:normal;white-space:nowrap;-webkit-text-stroke:0.25px #102010;">23.1</div>
<div style="position:absolute;left:678px;top:268px;width:14px;height:6px;background:#96ef97;border-right:1px solid rgba(70,100,70,0.35);border-bottom:1px solid rgba(70,100,70,0.35);"></div>
<div style="position:absolute;left:680.2px;top:268.3px;font-size:5.6px;line-height:6.6px;color:#102010;font-weight:normal;white-space:nowrap;-webkit-text-stroke:0.25px #102010;">24.2</div>
<div style="position:absolute;left:692px;top:268px;width:14px;height:6px;background:#a2e798;border-right:1px solid rgba(70,100,70,0.35);border-bottom:1px solid rgba(70,100,70,0.35);"></div>
<div style="position:absolute;left:694.2px;top:268.3px;font-size:5.6px;line-height:6.6px;color:#102010;font-weight:normal;white-space:nowrap;-webkit-text-stroke:0.25px #102010;">25.6</div>
<div style="position:absolute;left:706px;top:268px;width:15px;height:6px;background:#afdf9b;border-right:1px solid rgba(70,100,70,0.35);border-bottom:1px solid rgba(70,100,70,0.35);"></div>
<div style="position:absolute;left:708.2px;top:268.3px;font-size:5.6px;line-height:6.6px;color:#102010;font-weight:normal;white-space:nowrap;-webkit-text-stroke:0.25px #102010;">26.9</div>
<div style="position:absolute;left:721px;top:268px;width:15px;height:6px;background:#bbd69d;border-right:1px solid rgba(70,100,70,0.35);border-bottom:1px solid rgba(70,100,70,0.35);"></div>
<div style="position:absolute;left:723.2px;top:268.3px;font-size:5.6px;line-height:6.6px;color:#102010;font-weight:normal;white-space:nowrap;-webkit-text-stroke:0.25px #102010;">28.1</div>
<div style="position:absolute;left:736px;top:268px;width:14px;height:6px;background:#c7cea0;border-right:1px solid rgba(70,100,70,0.35);border-bottom:1px solid rgba(70,100,70,0.35);"></div>
<div style="position:absolute;left:738.2px;top:268.3px;font-size:5.6px;line-height:6.6px;color:#102010;font-weight:normal;white-space:nowrap;-webkit-text-stroke:0.25px #102010;">29.4</div>
<div style="position:absolute;left:750px;top:268px;width:14px;height:6px;background:#d1c4a0;border-right:1px solid rgba(70,100,70,0.35);border-bottom:1px solid rgba(70,100,70,0.35);"></div>
<div style="position:absolute;left:752.2px;top:268.3px;font-size:5.6px;line-height:6.6px;color:#102010;font-weight:normal;white-space:nowrap;-webkit-text-stroke:0.25px #102010;">30.8</div>
<div style="position:absolute;left:764px;top:268px;width:15px;height:6px;background:#dabba0;border-right:1px solid rgba(70,100,70,0.35);border-bottom:1px solid rgba(70,100,70,0.35);"></div>
<div style="position:absolute;left:766.2px;top:268.3px;font-size:5.6px;line-height:6.6px;color:#102010;font-weight:normal;white-space:nowrap;-webkit-text-stroke:0.25px #102010;">32.1</div>
<div style="position:absolute;left:779px;top:268px;width:15px;height:6px;background:#e3b2a0;border-right:1px solid rgba(70,100,70,0.35);border-bottom:1px solid rgba(70,100,70,0.35);"></div>
<div style="position:absolute;left:781.2px;top:268.3px;font-size:5.6px;line-height:6.6px;color:#102010;font-weight:normal;white-space:nowrap;-webkit-text-stroke:0.25px #102010;">33.4</div>
<div style="position:absolute;left:794px;top:268px;width:14px;height:6px;background:#eca9a0;border-right:1px solid rgba(70,100,70,0.35);border-bottom:1px solid rgba(70,100,70,0.35);"></div>
<div style="position:absolute;left:796.2px;top:268.3px;font-size:5.6px;line-height:6.6px;color:#102010;font-weight:normal;white-space:nowrap;-webkit-text-stroke:0.25px #102010;">34.7</div>
<div style="position:absolute;left:808px;top:268px;width:14px;height:6px;background:#f5a0a0;border-right:1px solid rgba(70,100,70,0.35);border-bottom:1px solid rgba(70,100,70,0.35);"></div>
<div style="position:absolute;left:810.2px;top:268.3px;font-size:5.6px;line-height:6.6px;color:#102010;font-weight:normal;white-space:nowrap;-webkit-text-stroke:0.25px #102010;">36.0</div>
<div style="position:absolute;left:634px;top:274px;width:14px;height:8px;background:#c9c9c9;"></div>
<div style="position:absolute;left:648px;top:274px;width:15px;height:8px;background:linear-gradient(#f2f2f2,#cccccc);border-right:1px solid #9a9a9a;"></div>
<div style="position:absolute;left:649px;top:275px;font-size:5.4px;line-height:6.4px;color:#222;font-weight:normal;white-space:nowrap;width:14px;overflow:hidden;-webkit-text-stroke:0.15px #222;">600.0</div>
<div style="position:absolute;left:663px;top:274px;width:15px;height:8px;background:linear-gradient(#f2f2f2,#cccccc);border-right:1px solid #9a9a9a;"></div>
<div style="position:absolute;left:664px;top:275px;font-size:5.4px;line-height:6.4px;color:#222;font-weight:normal;white-space:nowrap;width:14px;overflow:hidden;-webkit-text-stroke:0.15px #222;">110...</div>
<div style="position:absolute;left:678px;top:274px;width:14px;height:8px;background:linear-gradient(#f2f2f2,#cccccc);border-right:1px solid #9a9a9a;"></div>
<div style="position:absolute;left:679px;top:275px;font-size:5.4px;line-height:6.4px;color:#222;font-weight:normal;white-space:nowrap;width:13px;overflow:hidden;-webkit-text-stroke:0.15px #222;">160...</div>
<div style="position:absolute;left:692px;top:274px;width:14px;height:8px;background:linear-gradient(#f2f2f2,#cccccc);border-right:1px solid #9a9a9a;"></div>
<div style="position:absolute;left:693px;top:275px;font-size:5.4px;line-height:6.4px;color:#222;font-weight:normal;white-space:nowrap;width:13px;overflow:hidden;-webkit-text-stroke:0.15px #222;">220...</div>
<div style="position:absolute;left:706px;top:274px;width:15px;height:8px;background:linear-gradient(#f2f2f2,#cccccc);border-right:1px solid #9a9a9a;"></div>
<div style="position:absolute;left:707px;top:275px;font-size:5.4px;line-height:6.4px;color:#222;font-weight:normal;white-space:nowrap;width:14px;overflow:hidden;-webkit-text-stroke:0.15px #222;">280...</div>
<div style="position:absolute;left:721px;top:274px;width:15px;height:8px;background:linear-gradient(#f2f2f2,#cccccc);border-right:1px solid #9a9a9a;"></div>
<div style="position:absolute;left:722px;top:275px;font-size:5.4px;line-height:6.4px;color:#222;font-weight:normal;white-space:nowrap;width:14px;overflow:hidden;-webkit-text-stroke:0.15px #222;">340...</div>
<div style="position:absolute;left:736px;top:274px;width:14px;height:8px;background:linear-gradient(#f2f2f2,#cccccc);border-right:1px solid #9a9a9a;"></div>
<div style="position:absolute;left:737px;top:275px;font-size:5.4px;line-height:6.4px;color:#222;font-weight:normal;white-space:nowrap;width:13px;overflow:hidden;-webkit-text-stroke:0.15px #222;">400...</div>
<div style="position:absolute;left:750px;top:274px;width:14px;height:8px;background:linear-gradient(#f2f2f2,#cccccc);border-right:1px solid #9a9a9a;"></div>
<div style="position:absolute;left:751px;top:275px;font-size:5.4px;line-height:6.4px;color:#222;font-weight:normal;white-space:nowrap;width:13px;overflow:hidden;-webkit-text-stroke:0.15px #222;">460...</div>
<div style="position:absolute;left:764px;top:274px;width:15px;height:8px;background:linear-gradient(#f2f2f2,#cccccc);border-right:1px solid #9a9a9a;"></div>
<div style="position:absolute;left:765px;top:275px;font-size:5.4px;line-height:6.4px;color:#222;font-weight:normal;white-space:nowrap;width:14px;overflow:hidden;-webkit-text-stroke:0.15px #222;">520...</div>
<div style="position:absolute;left:779px;top:274px;width:15px;height:8px;background:linear-gradient(#f2f2f2,#cccccc);border-right:1px solid #9a9a9a;"></div>
<div style="position:absolute;left:780px;top:275px;font-size:5.4px;line-height:6.4px;color:#222;font-weight:normal;white-space:nowrap;width:14px;overflow:hidden;-webkit-text-stroke:0.15px #222;">580...</div>
<div style="position:absolute;left:794px;top:274px;width:14px;height:8px;background:linear-gradient(#f2f2f2,#cccccc);border-right:1px solid #9a9a9a;"></div>
<div style="position:absolute;left:795px;top:275px;font-size:5.4px;line-height:6.4px;color:#222;font-weight:normal;white-space:nowrap;width:13px;overflow:hidden;-webkit-text-stroke:0.15px #222;">640...</div>
<div style="position:absolute;left:808px;top:274px;width:14px;height:8px;background:linear-gradient(#f2f2f2,#cccccc);border-right:1px solid #9a9a9a;"></div>
<div style="position:absolute;left:809px;top:275px;font-size:5.4px;line-height:6.4px;color:#222;font-weight:normal;white-space:nowrap;width:13px;overflow:hidden;-webkit-text-stroke:0.15px #222;">700...</div>
<svg style="position:absolute;left:0;top:0" width="861" height="439"><path d="M746 73 L751 77 L754 82 L755 88 L756 93" stroke="#1030a0" stroke-width="1.3" fill="none"/><circle cx="756" cy="93" r="1.8" fill="#1030a0"/><path d="M744 219 L749 223 L752 227 L753 235" stroke="#1030a0" stroke-width="1.3" fill="none"/><circle cx="753" cy="235" r="1.8" fill="#1030a0"/></svg>
<div style="position:absolute;left:641px;top:158px;width:57px;height:12.5px;background:linear-gradient(#f6f9fc,#d3dfeb);border:1px solid #8fa5bb;border-radius:1px;"></div>
<div style="position:absolute;left:641px;top:160.8px;font-size:6.6px;line-height:7.6px;color:#111;font-weight:normal;white-space:nowrap;width:57px;text-align:center;-webkit-text-stroke:0.25px #111;">Open MSQ</div>
<div style="position:absolute;left:699px;top:158px;width:57px;height:12.5px;background:linear-gradient(#f6f9fc,#d3dfeb);border:1px solid #8fa5bb;border-radius:1px;"></div>
<div style="position:absolute;left:699px;top:160.8px;font-size:6.6px;line-height:7.6px;color:#111;font-weight:normal;white-space:nowrap;width:57px;text-align:center;-webkit-text-stroke:0.25px #111;">Save MSQ</div>
<div style="position:absolute;left:641px;top:171px;width:57px;height:12.5px;background:linear-gradient(#f6f9fc,#d3dfeb);border:1px solid #8fa5bb;border-radius:1px;"></div>
<div style="position:absolute;left:641px;top:173.8px;font-size:6.6px;line-height:7.6px;color:#111;font-weight:normal;white-space:nowrap;width:57px;text-align:center;-webkit-text-stroke:0.25px #111;">VE Analyzer</div>
<div style="position:absolute;left:699px;top:171px;width:57px;height:12.5px;background:linear-gradient(#f6f9fc,#d3dfeb);border:1px solid #8fa5bb;border-radius:1px;"></div>
<div style="position:absolute;left:699px;top:173.8px;font-size:6.6px;line-height:7.6px;color:#111;font-weight:normal;white-space:nowrap;width:57px;text-align:center;-webkit-text-stroke:0.25px #111;">Save MSQ As</div>
<div style="position:absolute;left:758px;top:158px;width:57px;height:12.5px;background:#f8f8f8;border-top:1px solid #b0b0b0;border-bottom:1px solid #9a9a9a;"></div>
<div style="position:absolute;left:758px;top:161px;font-size:7px;line-height:8px;color:#111;font-weight:bold;white-space:nowrap;width:57px;text-align:center;">veTable1</div>
<div style="position:absolute;left:758px;top:170.5px;width:57px;height:13px;background:#f6f6f6;border-bottom:1px solid #b0b0b0;"></div>
<div style="position:absolute;left:758px;top:174px;font-size:7px;line-height:8px;color:#111;font-weight:bold;white-space:nowrap;width:57px;text-align:center;">advanceTable1</div>
<div style="position:absolute;left:600px;top:288px;font-size:5.35px;line-height:6.35px;color:#222;font-weight:normal;white-space:nowrap;">C:\Users\M ... tudioProjects\AlfaGTV6\2011-01-30_17.27.48.msq</div>
<div style="position:absolute;left:82px;top:26px;width:518px;height:335px;background:#000;"></div>
<svg style="position:absolute;left:0;top:0" width="861" height="439"><defs><clipPath id="g1"><rect x="83" y="27" width="516" height="107"/></clipPath><clipPath id="g2"><rect x="83" y="134" width="516" height="107"/></clipPath><clipPath id="g3"><rect x="83" y="242" width="516" height="107"/></clipPath></defs><polyline points="83.0,125.8 84.1,125.6 85.4,125.9 86.9,125.7 88.5,125.9 90.3,125.9 92.2,125.5 94.3,125.5 96.5,126.1 98.7,125.7 101.0,125.7 103.4,126.3 105.8,125.9 108.2,126.2 110.6,125.9 113.1,126.1 115.5,125.7 117.8,126.1 120.2,126.3 122.4,126.1 124.5,126.3 126.6,126.2 128.5,125.8 130.3,126.4 131.9,126.3 133.4,126.1 134.7,125.9 138.3,126.9 139.6,126.9 139.7,127.5 139.8,128.0 141.2,128.3 145.0,128.7 146.2,128.4 147.7,128.7 149.2,128.5 150.9,128.9 152.7,128.9 154.7,128.3 156.7,128.4 158.8,128.5 161.0,129.1 163.3,128.7 165.6,128.9 167.9,128.6 170.3,128.8 172.7,128.7 175.0,128.7 177.4,128.9 179.7,128.9 182.0,129.2 184.2,129.1 186.4,129.3 188.5,129.2 190.5,129.4 192.3,129.2 194.1,128.8 195.7,129.4 197.2,129.5 198.5,129.5 199.7,129.3 204.8,129.9 204.6,130.2 204.8,131.3 206.0,131.3 207.2,131.2 208.5,131.2 210.1,131.9 212.2,132.1 215.0,131.4 216.4,131.9 218.0,131.6 219.9,131.5 221.8,131.6 223.9,132.0 226.1,132.1 228.3,131.5 230.5,131.9 232.7,131.4 234.8,131.9 236.8,131.4 238.7,131.7 240.4,131.5 241.8,130.8 243.0,130.8 246.2,123.3 246.2,117.9 246.5,123.5 249.1,130.0 250.4,130.7 252.1,131.3 254.0,131.9 256.1,131.8 258.4,131.9 260.7,132.6 263.0,132.2 265.1,132.6 267.0,132.5 268.7,131.9 269.9,131.7 271.6,124.3 272.5,127.7 274.0,131.8 275.4,132.2 277.1,132.1 279.0,131.7 280.9,130.4 281.7,128.8 281.9,127.0 283.4,124.5 288.2,122.9 289.4,123.3 290.8,122.8 292.4,122.6 294.1,122.0 296.0,122.2 297.9,122.3 300.0,121.7 302.2,122.1 304.4,122.0 306.7,121.4 309.1,121.8 311.4,121.6 313.8,121.7 316.1,121.4 318.5,121.6 320.8,121.6 323.0,120.9 325.2,120.9 327.3,121.3 329.2,121.5 331.1,120.8 332.8,120.9 334.4,121.0 335.8,120.7 337.0,120.6 341.8,120.0 343.3,119.4 343.6,119.0 344.3,118.0 346.3,117.2 348.0,116.4 350.0,114.2 351.5,112.7 352.9,110.4 354.7,107.7 357.3,105.8 358.8,105.7 360.6,104.8 362.6,104.4 364.7,104.4 366.8,104.4 368.9,103.8 370.9,103.8 372.8,103.6 374.4,103.9 376.9,103.1 379.0,102.8 380.8,101.8 382.4,101.8 383.7,102.5 385.7,106.3 386.6,112.1 387.8,131.5 389.1,132.3 390.8,132.7 392.9,132.5 395.1,132.9 397.4,133.0 399.7,132.4 401.8,132.5 403.6,132.5 404.9,131.8 405.7,127.0 407.3,121.8 408.5,121.2 410.1,121.1 412.0,121.4 414.0,120.9 416.2,120.9 418.4,121.0 420.7,121.1 423.0,121.2 425.2,121.7 427.2,121.3 429.0,121.3 430.5,122.3 433.4,122.7 435.7,123.4 437.5,123.8 438.9,125.0 440.2,125.9 440.2,128.4 442.7,131.4 443.7,131.5 444.9,131.4 446.0,131.3 447.3,131.2 448.6,131.2 450.0,131.2 451.4,131.1 453.0,131.5 454.5,131.3 456.2,131.7 457.8,131.1 459.6,131.9 461.4,131.7 463.2,131.9 465.1,131.9 467.0,131.9 469.0,131.7 471.0,131.2 473.1,131.8 475.2,131.4 477.3,131.5 479.5,131.8 481.7,131.7 483.9,131.6 486.1,132.0 488.4,131.8 490.7,131.5 493.1,131.5 495.4,132.0 497.8,131.7 500.2,131.9 502.6,131.6 505.0,131.4 507.5,131.7 509.9,131.9 512.4,131.4 514.8,131.9 517.3,132.0 519.8,131.9 522.2,131.9 524.7,131.2 527.2,131.7 529.6,131.9 532.1,131.3 534.5,131.4 537.0,131.4 539.4,131.6 541.8,131.5 544.2,131.6 546.6,131.8 548.9,131.2 551.2,131.2 553.5,131.2 555.8,131.2 558.1,131.2 560.3,131.9 562.5,131.8 564.7,131.2 566.8,131.5 568.9,131.3 570.9,131.3 572.9,131.3 574.9,131.6 576.8,131.5 578.7,131.3 580.5,131.2 582.3,131.3 584.0,131.1 585.7,131.5 587.3,131.6 588.9,131.3 590.4,131.1 591.8,131.1 593.2,131.3 594.5,131.5 595.7,131.6 596.9,131.3 598.0,131.6 599.0,131.4" fill="none" stroke="#904890" stroke-width="1.0" shape-rendering="crispEdges" clip-path="url(#g1)"/><polyline points="83.0,98.5 84.2,99.9 86.0,101.6 88.0,103.5 90.0,105.3 91.7,106.5 93.5,107.4 95.3,108.5 97.1,109.1 98.8,109.4 100.5,109.6 102.0,109.2 103.6,108.2 105.6,107.9 107.2,107.6 108.9,107.7 110.8,107.6 112.8,107.0 114.8,107.0 116.8,106.4 118.6,105.4 120.4,104.7 122.3,103.6 124.2,103.0 126.1,101.9 127.9,101.2 129.6,100.4 131.5,99.6 133.3,98.9 135.0,98.3 136.6,97.5 138.2,97.3 139.8,96.5 141.6,96.2 143.3,96.2 144.9,95.5 146.6,95.3 148.4,95.2 149.9,95.5 151.5,95.1 153.1,95.0 154.8,95.5 156.6,95.2 158.6,95.8 160.3,95.9 162.0,96.2 163.9,96.5 165.9,96.6 167.9,97.0 169.9,96.8 172.0,97.5 174.0,97.6 175.8,97.9 177.8,97.8 179.7,98.3 181.7,98.6 183.7,98.3 185.6,98.6 187.5,99.0 189.3,99.3 191.0,99.1 193.0,99.4 194.8,99.7 196.5,100.2 198.1,100.5 199.7,100.6 201.3,100.8 203.0,100.9 204.8,101.0 206.6,101.0 208.4,100.8 210.2,101.0 211.9,101.2 213.5,101.0 215.0,101.3 217.0,101.6 218.6,102.7 220.2,103.8 222.3,104.9 223.8,105.6 225.6,106.4 227.4,107.5 229.4,108.6 231.2,109.0 233.0,109.9 234.5,111.0 236.7,112.2 238.5,112.8 240.2,113.5 241.8,114.7 243.3,116.3 244.8,118.8 246.2,120.6 248.0,120.8 249.7,118.3 251.7,114.2 253.7,109.9 255.8,106.1 257.7,103.5 259.5,103.6 261.2,104.6 262.9,106.9 264.5,109.0 266.2,110.8 267.8,112.7 269.4,115.0 271.0,117.6 272.8,119.4 274.8,120.0 276.5,120.0 278.4,119.3 280.4,118.6 282.5,116.9 284.5,115.9 286.4,113.9 288.2,112.2 290.4,109.0 292.3,105.4 294.2,101.4 296.0,97.7 297.9,95.1 299.7,93.7 301.2,93.1 302.9,92.8 305.0,93.0 307.7,94.2 309.2,94.8 311.0,96.0 312.8,97.7 314.8,99.9 316.9,101.8 319.1,104.0 321.2,105.8 323.4,107.1 325.5,108.3 327.6,109.2 329.6,109.5 331.6,109.5 333.7,108.8 335.8,107.5 338.0,105.5 340.1,104.0 342.2,101.7 344.1,99.8 345.9,98.1 347.6,96.0 348.9,94.6 350.0,93.9" fill="none" stroke="#c4c8a4" stroke-width="1.0" shape-rendering="crispEdges" clip-path="url(#g1)"/><polyline points="350.0,93.9 386.6,51.2 408.5,92.6 414.6,84.6 420.7,83.6 437.8,80.4 442.7,82.9" fill="none" stroke="#c4c8a4" stroke-width="1.0" shape-rendering="crispEdges" clip-path="url(#g1)"/><polyline points="442.7,82.9 443.8,83.3 445.0,83.2 446.4,83.6 447.9,84.0 449.6,84.4 451.3,84.4 453.2,85.0 455.2,85.5 457.2,85.9 459.4,86.2 461.6,86.9 463.8,87.6 466.1,87.7 468.4,88.2 470.7,88.4 473.1,88.9 475.4,89.5 477.7,89.6 480.0,90.4 481.7,90.7 483.5,90.5 485.3,91.3 487.1,91.2 488.9,91.7 490.7,91.9 492.6,91.9 494.4,92.3 496.3,92.6 498.2,92.9 500.2,92.8 502.1,93.4 504.1,93.7 506.0,93.8 508.0,93.9 510.0,93.9 512.1,94.4 514.1,94.5 516.2,95.0 518.2,95.2 520.3,95.4 522.4,95.4 524.5,95.9 526.7,96.1 528.8,96.1 530.6,96.7 532.5,96.8 534.5,96.7 536.5,97.4 538.5,97.1 540.6,97.5 542.8,97.9 544.9,98.1 547.1,98.2 549.3,98.5 551.5,98.6 553.7,98.7 556.0,98.9 558.2,99.0 560.4,99.6 562.5,99.9 564.7,100.0 566.8,100.3 568.9,100.3 570.9,100.4 572.9,100.7 574.8,101.2 576.7,100.9 578.4,101.3 580.1,101.4 581.8,101.9 583.3,101.8 584.7,102.0 586.1,102.2 587.3,102.4 592.1,103.3 595.1,103.8 596.8,104.8 597.7,104.9 598.3,105.5 599.0,106.0" fill="none" stroke="#c4c8a4" stroke-width="1.0" shape-rendering="crispEdges" clip-path="url(#g1)"/><polyline points="83.0,103.6 84.0,105.1 86.0,105.9 87.6,105.1 89.5,102.8 91.6,99.7 93.7,97.4 95.4,95.7 97.3,94.1 99.1,92.3 100.8,90.7 102.2,89.5 104.0,88.3 105.6,89.3 107.3,90.3 109.3,92.2 111.4,93.9 113.3,94.8 115.1,95.2 116.5,95.4 118.5,95.0 120.1,96.2 121.8,97.0 123.8,98.0 125.8,98.7 127.9,100.2 129.8,101.8 131.7,103.7 133.8,106.1 135.9,107.9 137.9,109.5 139.8,111.6 141.6,112.6 143.4,113.9 145.1,115.1 146.8,115.4 148.4,116.8 150.0,117.4 151.7,117.9 153.1,118.4 154.6,118.6 156.4,118.6 158.6,119.0 160.1,118.7 161.9,119.1 163.7,119.3 165.7,119.1 167.8,119.2 169.8,119.5 171.9,119.4 173.8,118.8 175.7,119.2 177.7,119.0 179.7,118.5 181.7,118.6 183.7,118.3 185.6,118.1 187.4,118.3 189.3,118.5 191.0,118.0 193.0,118.3 194.9,118.0 196.8,117.4 198.6,117.9 200.2,117.7 201.7,118.1 203.0,118.3 204.9,120.0 206.0,122.1 207.4,124.3 209.0,125.3 210.7,125.7 212.7,125.6 215.0,125.8 216.5,125.4 218.1,124.7 219.8,124.1 221.6,123.6 223.4,123.0 225.3,122.3 227.2,121.9 229.0,121.5 230.9,120.8 233.0,120.2 235.0,119.8 237.0,118.8 238.9,118.1 240.5,117.3 241.8,115.7 244.3,109.1 245.5,99.0 247.4,77.3 249.1,58.4 250.3,57.4 251.6,64.6 253.1,82.2 255.2,101.0 256.8,107.2 258.7,112.6 260.7,117.1 262.6,119.2 264.5,120.5 266.4,120.1 268.2,118.5 269.9,115.5 271.6,107.5 273.1,96.6 274.8,89.8 276.4,90.9 278.1,95.3 280.0,100.0 282.0,100.8 283.8,97.8 285.8,92.5 287.8,86.1 289.9,80.9 291.8,77.6 293.5,78.6 295.2,81.7 296.8,85.6 298.5,90.3 300.4,92.4 301.9,93.3 303.4,94.4 305.1,94.1 306.8,94.5 308.6,94.3 310.5,94.1 312.6,93.0 314.2,92.0 315.9,89.3 317.8,86.9 319.7,83.5 321.7,80.6 323.6,76.8 325.6,73.8 327.5,71.2 329.2,69.7 330.9,68.3 333.1,67.9 335.3,68.9 337.4,71.4 339.4,74.1 341.2,76.1 342.8,77.2 344.3,77.6 346.8,74.1 348.5,67.8 350.0,61.7 352.1,54.6 353.7,50.1 354.8,49.9 356.0,51.0 357.9,53.5 359.8,54.8 360.5,54.4 362.2,53.9 363.5,54.3 365.0,54.1 366.9,55.1 368.8,56.1 370.8,57.2 372.7,57.4 374.4,58.3 376.6,59.8 378.8,60.1 380.9,61.3 382.7,62.6 384.1,64.7 386.0,80.7 387.0,111.8 388.0,120.7 389.3,127.9 391.5,132.8 392.9,133.5 394.7,133.8 396.6,133.4 398.7,133.4 400.6,133.3 402.3,133.7 403.7,131.7 405.9,110.7 407.3,88.7 408.7,84.1 410.4,81.1 412.1,80.2 413.4,80.3 414.7,87.7 415.9,96.0 417.2,98.3 418.8,98.1 420.7,98.7 422.4,99.2 424.3,99.3 426.3,99.0 428.0,99.8 429.7,101.4 431.2,102.9 432.9,106.3 434.7,110.6 436.7,115.8 438.7,121.6 440.2,125.8 440.8,129.9 442.7,131.6 443.9,131.5 445.3,131.6 446.8,131.8 448.6,130.8 450.5,130.8 452.6,130.0 454.8,129.5 457.2,129.6 459.8,129.0 461.3,128.7 462.9,128.7 464.5,128.9 466.2,128.7 468.0,128.2 469.8,128.2 471.6,128.7 473.5,128.0 475.5,128.1 477.5,127.9 479.5,128.1 481.5,127.9 483.6,128.0 485.7,127.7 487.9,127.4 490.0,127.3 491.7,127.3 493.5,127.8 495.4,127.3 497.2,127.2 499.1,128.0 501.0,127.4 502.9,128.0 504.9,127.5 506.9,127.8 508.9,127.7 510.8,128.2 512.9,128.1 514.9,128.2 516.9,128.4 518.9,128.5 520.9,128.1 522.9,128.4 524.9,128.3 526.8,128.1 528.8,128.7 530.8,128.5 532.8,128.7 534.9,128.2 537.1,128.5 539.2,128.5 541.4,128.7 543.6,128.2 545.8,128.4 548.0,128.6 550.1,128.2 552.2,128.6 554.3,128.8 556.3,128.5 558.2,128.7 560.1,128.6 561.9,128.3 563.5,128.4 565.1,128.9 566.5,128.3 567.8,128.3 571.4,127.8 573.3,127.6 574.2,127.1 575.4,127.2 577.6,126.6 579.2,126.5 581.1,126.3 583.2,125.7 585.4,125.6 587.7,125.0 590.1,124.6 592.3,124.7 594.4,124.4 596.3,124.1 597.8,123.6 599.0,123.4" fill="none" stroke="#74bcb2" stroke-width="1.0" shape-rendering="crispEdges" clip-path="url(#g1)"/><polyline points="84.9,234.9 86.1,235.1 87.6,234.8 89.4,235.3 91.5,235.3 93.7,234.8 96.0,235.3 98.3,234.7 100.5,234.7 102.6,235.1 104.6,234.7 106.6,234.8 108.5,234.8 110.4,234.2 112.3,234.5 114.1,234.0 116.0,233.9 117.9,233.7 119.8,234.0 121.8,233.9 123.6,233.5 125.5,233.4 127.4,233.6 129.3,233.7 131.2,233.5 133.1,233.7 135.2,234.3 137.2,234.3 139.3,234.7 141.5,234.8 143.2,234.8 144.9,234.5 146.6,234.5 148.3,234.7 150.0,235.0 151.8,235.2 153.6,235.4 155.5,235.4 157.5,235.9 159.5,235.6 161.6,235.8 163.8,236.3 166.1,236.3 167.8,236.0 169.6,236.0 171.6,236.5 173.6,235.9 175.7,236.1 177.9,236.4 180.2,236.5 182.4,236.2 184.7,236.1 186.9,236.3 189.1,236.8 191.2,236.6 193.3,237.0 195.3,236.9 197.1,237.1 198.8,236.4 200.4,236.5 201.8,236.4 203.0,236.8 207.0,237.3 207.4,237.8 208.0,238.6 209.0,238.4 209.8,238.5 211.4,238.4 215.0,238.8 216.3,238.6 217.8,238.5 219.5,238.5 221.4,238.9 223.4,239.2 225.5,239.4 227.7,239.7 230.0,239.8 232.3,239.4 234.5,239.5 236.7,240.1 238.8,240.2 240.8,240.0 242.7,240.3 244.3,240.0 245.8,239.7 247.0,239.5 250.7,237.7 251.4,235.6 251.9,234.0 253.8,234.0 255.6,234.9 256.9,237.0 259.3,238.9 260.7,239.1 262.5,239.1 264.5,239.0 266.6,239.1 268.6,238.7 270.3,238.6 271.6,238.7 273.3,235.3 274.6,235.2 276.3,235.9 279.0,236.0 280.3,235.7 281.6,235.5 283.0,234.6 284.6,234.2 286.3,232.9 288.4,232.3 290.9,231.8 293.7,231.1 295.2,231.3 296.8,231.1 298.5,231.0 300.4,230.6 302.4,230.0 304.5,230.2 306.6,230.1 308.8,229.9 310.9,229.6 313.1,229.8 315.3,229.9 317.4,229.1 319.5,229.5 321.5,229.1 323.4,229.1 325.1,229.3 326.7,229.2 328.2,228.8 331.1,228.1 333.5,228.4 335.6,227.4 337.4,227.3 339.0,227.3 340.5,226.6 341.8,226.3 343.0,226.7 345.5,226.4 347.0,225.9 347.9,226.0" fill="none" stroke="#38a038" stroke-width="1.0" shape-rendering="crispEdges" clip-path="url(#g2)"/><polyline points="345.4,206.6 347.0,199.9 348.2,187.6 349.4,199.7 350.6,190.3 351.8,198.9 353.0,190.0 354.2,199.8 355.4,186.7 356.6,198.2 357.8,189.5 359.0,197.8 360.2,187.3 361.4,198.8 362.6,193.7 363.8,197.3 365.0,194.5 366.2,197.4 367.4,193.3 368.6,197.7 369.8,188.3 371.0,197.5 372.2,191.0 373.4,197.5 374.6,192.8 375.8,198.0 377.0,188.3 378.2,197.1 379.4,188.5 380.6,196.0 381.8,175.6 383.0,196.0 384.2,191.9 386.5,232.0 406.0,232.0" fill="none" stroke="#bdbdbd" stroke-width="1.0" shape-rendering="crispEdges" clip-path="url(#g2)"/><polyline points="406.0,232.0 407.0,221.0 408.0,221.9 409.1,197.0 410.2,222.0 411.3,209.8 412.4,220.3 413.5,205.9 414.6,220.5 415.7,198.9 416.8,221.0 417.9,204.3 419.0,220.4 420.1,204.8 421.2,219.3 422.3,209.6 423.4,219.0 424.5,204.8 425.6,218.4 426.7,207.8 427.8,218.1 428.9,210.9 430.0,218.3 431.1,214.9 432.2,219.0 433.3,218.9 435.0,226.0 441.0,231.2 580.8,232.4 583.3,231.1 599.0,231.1" fill="none" stroke="#bdbdbd" stroke-width="1.0" shape-rendering="crispEdges" clip-path="url(#g2)"/><polyline points="347.9,226.0 352.0,220.0 356.0,214.0 360.0,210.0 361.0,209.5 362.2,197.2 363.4,209.0 364.6,194.0 365.8,206.6 367.0,200.2 368.2,205.1 369.4,199.1 370.6,204.9 371.8,199.0 373.0,203.1 374.2,196.8 375.4,201.2 376.6,193.0 377.8,200.9 379.0,189.7 380.2,197.8 381.4,192.5 382.6,196.7 383.8,184.1 385.0,196.6 386.4,200.4 387.5,234.0 406.6,234.0" fill="none" stroke="#40b040" stroke-width="1.0" shape-rendering="crispEdges" clip-path="url(#g2)"/><polyline points="406.6,234.0 407.6,222.0 408.0,225.2 409.1,215.3 410.2,225.9 411.3,212.7 412.4,224.8 413.5,220.2 414.6,225.4 415.7,215.8 416.8,224.1 417.9,215.5 419.0,224.0 420.1,214.4 421.2,223.0 422.3,220.5 423.4,224.2 424.5,219.1 425.6,222.6 426.7,214.2 427.8,223.0 428.9,221.4 430.0,222.4 431.1,215.7 433.7,231.2 441.0,234.9 553.8,237.3 599.0,238.5" fill="none" stroke="#40b040" stroke-width="1.0" shape-rendering="crispEdges" clip-path="url(#g2)"/><polyline points="94.8,221.4 96.0,220.5 97.6,219.2 99.5,217.8 101.5,216.8 103.4,216.8 105.1,216.1 106.7,216.7 108.3,217.4 110.0,218.0 112.0,218.9 113.6,219.3 115.2,219.5 117.0,219.5 118.8,219.7 120.7,219.2 122.5,219.6 124.3,220.5 126.1,220.2 127.8,220.8 129.6,221.5 131.3,221.9 133.1,222.7 134.8,222.9 136.6,223.6 138.3,224.7 140.0,224.5 141.6,225.6 143.3,225.5 145.0,226.6 146.9,226.8 148.9,227.1 150.6,227.0 152.3,227.2 154.0,227.9 155.8,227.7 157.7,227.9 159.6,228.6 161.7,228.8 163.8,228.2 166.1,229.1 167.8,228.8 169.6,228.7 171.5,228.5 173.5,228.8 175.6,229.3 177.7,228.7 179.7,228.6 181.8,228.6 183.8,228.5 185.7,228.7 187.5,229.1 189.2,228.4 190.7,228.5 193.2,228.9 195.3,228.7 197.2,228.4 198.9,227.5 200.4,227.4 201.7,227.8 203.0,227.5 205.1,228.6 206.5,229.8 208.0,230.8 209.0,231.7 209.8,232.5 211.4,232.8 215.0,232.5 216.3,232.3 217.8,232.3 219.5,232.1 221.4,232.2 223.5,232.3 225.6,231.8 227.9,232.0 230.1,232.1 232.4,231.9 234.7,231.1 236.9,231.5 239.0,231.0 241.0,230.0 242.8,229.6 244.4,228.9 245.8,228.0 247.0,227.9 249.4,213.3 249.4,200.7 251.2,199.8 253.1,205.0 254.7,214.1 256.8,222.8 258.4,225.8 260.3,227.7 262.3,229.1 264.2,230.2 266.2,230.2 268.3,230.6 270.2,229.7 271.6,227.2 273.3,205.5 274.1,209.7 275.3,217.7 276.6,220.2 278.2,222.0 280.2,222.5 281.8,221.9 283.6,220.8 285.5,218.9 287.3,217.0 288.8,215.5 290.9,211.7 292.5,210.7 293.6,211.6 294.9,214.2 297.4,216.4 298.7,216.9 300.2,216.8 301.9,217.3 303.7,217.1 305.6,217.7 307.6,217.1 309.6,216.8 311.5,216.2 313.4,215.5 315.3,214.1 317.2,211.7 319.1,209.2 321.1,206.7 323.1,203.6 325.0,201.3 326.9,199.5 328.8,197.8 330.6,196.3 332.7,196.9 334.8,197.3 337.0,199.2 339.1,200.4 341.0,202.1 342.8,204.2 344.3,205.9 345.4,206.6" fill="none" stroke="#c8c8c8" stroke-width="1.0" shape-rendering="crispEdges" clip-path="url(#g2)"/><polyline points="83.0,205.4 84.2,201.0 85.9,195.7 87.9,188.9 89.8,182.9 91.7,178.9 93.6,176.1 95.5,173.5 97.2,171.8 98.9,171.6 100.4,172.8 102.1,174.8 103.8,177.9 105.6,183.5 107.6,189.2 109.5,193.2 111.3,193.1 113.1,192.1 115.0,191.1 116.9,190.2 118.6,189.5 120.4,190.5 122.2,191.3 123.9,190.8 125.5,191.6 127.2,192.8 128.6,194.3 130.0,195.8 131.7,195.4 133.3,195.3 135.1,192.9 136.9,193.0 138.7,190.8 140.3,190.6 142.0,192.2 143.5,192.8 144.9,194.6 146.4,197.3 147.9,197.7 149.5,197.3 151.1,197.5 152.6,198.2 154.0,198.3 155.3,200.2 156.8,198.9 158.7,196.2 160.3,190.9 162.3,183.0 164.4,173.5 166.5,164.6 168.3,156.8 169.8,151.1 172.0,149.4 173.5,155.9 175.0,155.0 176.5,153.1 178.4,154.8 180.1,158.6 181.9,163.7 183.9,166.6 185.8,169.9 187.6,172.1 189.3,171.9 191.2,172.8 193.2,174.1 195.1,175.8 197.3,179.8 199.5,184.3 201.5,188.7 203.0,190.0 204.4,192.6 205.5,191.0 207.0,191.1 208.8,188.5 210.9,187.9 212.9,183.2 214.5,178.2 216.0,170.3 217.6,163.3 219.4,157.5 221.2,154.4 222.9,152.9 224.7,153.2 226.6,156.4 228.5,158.0 230.4,159.9 232.2,160.5 234.3,161.5 236.3,163.3 238.3,162.1 240.2,162.8 242.1,162.5 244.0,160.6 245.9,159.1 247.8,156.9 249.4,155.0 250.7,154.2 252.1,155.5 253.1,165.1 254.6,181.9 256.3,202.1 258.1,217.1 259.6,224.3 261.1,223.0 263.0,223.2 264.5,221.9 266.2,217.6 268.1,215.8 269.9,211.2 271.6,207.2 273.5,201.6 275.4,194.6 277.2,190.0 279.0,187.9 281.0,192.3 283.0,199.4 284.9,205.9 286.4,212.5 287.6,218.9 288.8,218.3 290.4,213.1 292.3,204.8 294.4,197.1 296.2,190.3 298.0,186.8 299.5,186.9 301.1,188.0 302.5,189.0 304.0,189.7 305.6,192.2 307.3,192.4 308.9,194.1 310.7,194.7 312.5,194.5 314.3,196.0 315.9,195.3 317.6,194.6 319.1,192.9 320.5,191.3 322.0,190.5 323.5,190.6 325.0,193.9 326.6,196.6 328.2,199.2 329.9,204.3 331.7,209.9 333.6,217.0 335.6,220.5 337.5,220.5 339.6,221.7 341.8,221.4 343.8,218.8 345.4,218.7 347.6,211.2 349.1,206.0 350.6,209.5 352.2,213.9 353.7,219.4 355.6,224.0 357.4,226.7 359.2,230.0 361.1,230.7 362.7,225.5 364.8,220.2 366.4,219.2 368.4,217.1 370.4,216.1 372.1,215.4 373.9,215.0 375.4,213.2 377.1,211.9 378.6,211.7 380.3,209.3 381.9,206.8 383.2,206.2 384.6,202.9 385.7,200.5 387.5,203.0 389.4,206.1 391.2,211.6 393.1,214.8 394.9,211.9 396.8,208.2 398.3,204.2 400.0,198.8 401.7,195.5 403.3,193.4 404.9,191.7 406.6,193.4 408.1,195.8 409.7,199.6 411.3,203.4 412.7,207.9 414.5,213.5 416.4,215.6 417.8,210.2 419.4,203.4 421.0,196.0 422.6,192.8 424.1,194.4 425.6,197.8 427.2,202.9 428.7,207.8 430.3,210.2 431.9,213.7 433.5,214.8 434.9,214.4 436.9,209.7 438.6,196.3 438.6,164.3 442.3,134.0 443.5,132.8 445.0,132.1 446.7,132.6 448.6,132.6 450.7,133.9 452.8,132.2 455.1,133.9 457.4,133.0 459.8,132.9 462.1,132.5 464.4,133.9 466.6,132.4 468.8,133.1 470.7,133.0 472.5,132.4 474.1,132.9 475.5,135.0 478.9,137.3 480.9,141.0 482.1,145.7 483.0,148.3 484.1,152.9 485.8,156.8 487.1,158.3 488.6,160.9 490.0,163.0 491.5,162.3 493.1,163.9 494.8,164.0 496.5,167.5 498.2,169.8 500.1,173.4 502.1,175.5 503.9,177.9 505.9,178.7 507.9,178.9 510.0,179.7 512.0,179.4 514.0,179.8 515.9,178.1 517.9,177.7 519.8,176.8 521.8,175.6 523.7,174.2 525.6,173.7 527.5,173.9 529.5,172.3 531.6,172.6 533.2,171.6 535.0,172.0 536.8,171.3 538.7,170.5 540.5,169.3 542.2,168.1 543.9,168.5 546.0,168.0 547.9,167.5 549.8,165.2 551.7,164.1 553.8,164.5 555.4,162.9 557.1,161.2 558.9,160.4 560.7,157.8 562.5,157.3 564.3,156.3 566.1,155.1 567.9,153.3 569.7,152.5 571.5,152.7 573.3,152.6 575.1,150.5 576.8,149.6 578.4,149.2 580.5,149.5 582.5,147.5 584.3,146.6 586.2,147.1 588.2,146.5 590.1,146.9 592.1,149.7 594.2,150.6 596.2,153.5 597.8,156.4 599.0,157.4" fill="none" stroke="#a83228" stroke-width="1.0" shape-rendering="crispEdges" clip-path="url(#g2)"/><polyline points="83.0,257.5 84.0,257.2 85.2,257.0 86.5,257.5 87.9,257.3 89.4,257.9 91.0,257.0 92.7,257.7 94.5,257.3 96.4,257.7 98.3,257.3 100.3,257.6 102.4,257.2 104.5,257.1 106.7,257.3 108.9,257.6 111.1,257.2 113.4,257.0 115.7,257.2 118.0,256.9 120.3,257.1 122.6,257.3 124.9,257.3 127.2,257.3 129.5,257.0 131.8,256.7 134.0,256.7 136.2,257.0 138.3,256.8 140.4,257.2 142.5,256.9 144.5,257.3 146.4,257.1 148.2,257.2 150.0,257.2 152.2,257.0 154.3,256.9 156.2,256.7 158.1,256.4 159.9,257.1 161.7,256.8 163.4,256.4 165.0,257.2 166.6,256.8 168.2,256.8 169.8,256.6 171.3,256.2 172.9,257.0 174.6,256.2 176.2,256.3 177.9,256.9 179.7,256.0 181.5,256.3 183.4,256.3 185.4,256.0 187.5,256.6 189.7,256.1 192.1,255.6 194.6,256.1 197.2,255.5 200.0,256.2 201.5,256.3 203.0,256.4 204.6,255.5 206.2,256.1 207.9,255.7 209.6,255.9 211.3,255.7 213.1,255.7 214.9,255.5 216.7,256.0 218.6,255.4 220.5,256.3 222.4,255.4 224.4,256.3 226.4,255.5 228.4,255.4 230.4,256.0 232.4,255.8 234.5,256.0 236.5,255.8 238.6,255.9 240.7,255.3 242.8,255.9 244.9,255.7 247.1,256.2 249.2,255.2 251.3,255.2 253.5,255.8 255.6,256.1 257.8,255.5 259.9,255.8 262.0,255.7 264.2,255.5 266.3,255.5 268.4,255.6 270.5,255.0 272.6,255.3 274.7,255.7 276.8,255.2 278.8,255.4 280.9,255.1 282.9,255.2 284.9,255.5 286.9,255.5 288.8,255.7 290.8,255.2 292.7,254.9 294.6,255.0 296.4,254.7 298.2,254.8 300.0,255.1 302.2,255.0 304.4,254.6 306.7,254.5 308.9,254.3 311.2,254.3 313.5,254.5 315.7,254.2 318.0,254.7 320.3,254.3 322.6,254.0 324.8,253.9 327.1,253.4 329.4,254.0 331.6,253.9 333.9,253.4 336.1,253.7 338.3,253.1 340.5,252.9 342.7,252.8 344.8,252.6 346.9,252.9 349.0,252.8 351.1,252.8 353.1,252.1 355.1,252.6 357.0,252.2 358.9,252.0 360.8,252.0 362.6,251.8 364.4,251.5 366.1,251.6 367.8,251.7 369.4,251.7 370.9,251.8 372.4,251.0 373.9,251.7 375.2,251.5 376.5,251.4 377.8,251.6 378.9,250.7 380.0,251.3 386.0,251.4 386.0,251.1 385.7,252.0 386.0,252.4 387.3,251.6 388.8,251.8 390.4,251.4 392.1,250.4 394.0,249.6 395.9,249.2 397.9,249.5 400.0,248.9 401.6,248.8 403.3,249.1 405.0,249.7 406.8,249.3 408.7,249.3 410.6,250.5 412.5,250.2 414.4,250.5 416.3,251.3 418.2,250.7 420.0,250.6 421.9,251.3 423.8,250.6 425.9,250.3 427.9,250.8 429.9,249.8 431.9,250.2 433.8,249.4 435.6,249.1 437.3,248.8 438.7,249.1 440.0,249.1 441.7,249.6 441.7,251.0 445.0,251.8 446.2,252.4 447.4,252.6 448.8,252.4 450.3,252.5 451.9,251.8 453.5,252.0 455.3,251.9 457.1,251.9 459.1,252.7 461.1,252.6 463.2,252.6 465.4,252.2 467.6,251.7 470.0,252.0 472.4,251.6 474.8,252.4 477.4,251.8 480.0,251.8 481.6,252.4 483.2,251.7 484.8,252.4 486.5,251.8 488.3,252.1 490.1,251.6 491.9,252.4 493.7,251.8 495.6,251.8 497.5,252.1 499.5,252.0 501.5,251.7 503.4,251.5 505.5,252.0 507.5,251.4 509.5,252.2 511.6,251.7 513.6,251.5 515.7,251.7 517.8,251.5 519.8,251.7 521.9,251.9 524.0,251.8 526.0,251.7 528.1,251.7 530.1,251.9 532.1,252.2 534.1,251.9 536.1,252.2 538.1,252.0 540.0,251.6 542.0,251.7 544.1,252.4 546.2,252.1 548.4,252.1 550.6,252.3 552.8,252.7 555.1,252.2 557.3,252.3 559.6,252.4 561.9,252.1 564.2,252.7 566.5,252.7 568.8,252.8 571.0,252.9 573.2,253.0 575.4,253.3 577.6,252.9 579.7,253.7 581.7,252.9 583.7,253.8 585.7,253.2 587.5,253.9 589.3,253.4 591.0,253.3 592.6,253.8 594.1,254.2 595.5,254.2 596.8,254.3 598.0,254.4 599.0,254.0" fill="none" stroke="#d0c4bc" stroke-width="1.0" shape-rendering="crispEdges" clip-path="url(#g3)"/><polyline points="84.2,311.4 85.5,310.6 87.2,311.0 89.3,310.5 91.7,311.4 94.0,310.7 96.2,311.0 98.2,310.8 99.8,310.8 102.5,308.7 104.1,307.2 105.4,305.8 106.5,307.1 108.0,310.6 109.4,309.1 111.3,308.4 113.3,308.7 115.2,307.1 116.7,307.4 118.3,308.2 120.0,309.5 121.6,309.0 123.6,305.7 125.7,303.9 127.8,302.5 129.4,300.2 130.9,302.3 131.9,305.4 133.6,307.3 135.1,307.8 136.9,307.7 139.0,306.5 141.1,306.4 143.1,306.4 144.9,306.5 146.9,304.0 148.8,302.8 150.5,300.3 152.1,299.9 153.4,298.6 155.2,301.3 156.2,304.6 157.4,302.4 159.0,301.9 160.4,303.1 162.1,305.0 164.7,305.4 166.1,305.4 167.8,305.3 169.6,306.3 171.6,305.4 173.6,305.1 175.5,305.0 177.2,305.0 178.8,304.0 180.9,303.5 182.8,303.5 184.5,302.8 186.0,301.0 187.3,299.4 189.0,297.2 190.3,292.6 191.5,290.4 192.7,292.1 194.0,297.2 195.7,300.0 197.1,301.0 198.7,301.9 200.4,303.2 202.3,304.2 204.2,304.1 206.0,305.0 208.1,304.3 210.2,303.6 212.3,303.4 214.1,302.5 215.5,301.7 217.4,296.6 218.3,293.0 219.2,295.7 222.0,300.5 223.3,300.1 224.9,301.7 226.8,301.6 228.8,303.1 230.9,302.4 233.0,303.6 235.1,303.9 237.0,304.5 238.7,303.7 240.0,303.6 242.6,300.1 243.8,295.8 245.0,293.1 246.7,294.4 248.3,299.2 250.0,301.5 251.7,300.1 253.3,294.5 255.0,292.1 255.7,293.9 256.5,298.9 260.0,302.5 261.2,302.6 262.7,301.8 264.4,302.8 266.3,303.0 268.3,302.3 270.4,303.5 272.6,302.7 274.8,302.7 277.1,303.2 279.3,303.1 281.4,303.0 283.5,303.6 285.4,303.0 287.1,302.6 288.7,301.8 290.0,302.1 293.1,299.2 295.2,295.7 296.4,291.1 297.3,286.8 298.0,285.0" fill="none" stroke="#2a2aa0" stroke-width="1.0" shape-rendering="crispEdges" clip-path="url(#g3)"/><polyline points="300.0,299.2 301.8,302.3 303.7,301.4 305.3,301.2 306.8,301.8 308.7,299.8 309.8,300.1 311.8,301.2 313.2,300.8 315.4,299.1 317.3,295.7 318.9,299.5 320.5,298.8 322.5,295.5 323.8,297.6 325.7,298.0 327.5,296.0 329.5,293.9 331.6,297.5 333.1,293.1 334.6,296.4 336.5,296.5 338.0,295.8 339.3,296.0 341.1,295.2 342.5,295.9 344.2,295.0 345.3,294.7 346.7,294.6 348.8,294.9 351.0,294.2 353.0,294.3 354.3,294.5 355.4,293.1 357.0,294.3 358.3,291.6 359.5,291.7 361.6,292.3 363.2,288.7 364.8,293.2 366.1,291.5 368.1,291.9 369.8,291.9 371.5,288.2 372.5,290.2 373.5,290.7 375.5,291.2 377.0,289.6 378.2,289.9 379.2,290.8 381.2,290.6 382.9,287.6 384.1,288.6 385.6,289.1 386.7,289.4 388.6,291.4 390.1,284.5 391.4,291.3 393.2,290.7 394.7,284.1 396.0,291.4 398.1,287.0 399.8,291.1 401.1,292.2 402.8,286.0 405.0,290.3 407.2,292.6 408.3,292.8 409.8,294.5 411.6,293.8 413.0,294.6 414.1,294.7 415.9,294.0 417.5,291.6 419.1,294.0 420.2,295.1 422.0,294.8 423.8,295.3 425.8,295.6 427.1,296.4 428.8,295.5 431.0,294.3 432.4,295.8 434.1,294.8 436.2,297.6 437.3,297.3 438.6,292.8 440.4,290.5 441.8,291.6 443.0,299.1 444.7,295.8 446.8,302.2 448.6,300.9 450.0,300.8 452.2,296.5 454.3,303.2 455.9,298.1 457.7,302.3 459.4,300.3 460.9,302.7 462.1,301.9 463.7,301.2 465.2,303.2 467.2,301.8 469.2,298.7 470.3,302.3 472.2,302.4 474.2,302.6 475.8,303.2 477.1,300.9 478.9,303.9 479.9,302.7 481.2,302.7 482.2,302.8 484.0,302.4 486.1,303.4 487.9,303.2 489.0,303.9 490.1,299.6 491.8,298.4 493.4,297.5 495.4,303.2 496.7,302.7 498.3,302.7 499.8,302.8 501.7,301.2 503.5,303.2 505.2,297.3 506.9,304.4 509.1,303.4 511.0,304.3 512.1,304.7 513.7,304.3 514.9,301.1 516.6,299.5 517.8,297.7 519.4,304.2 520.6,301.3 522.4,303.8 524.1,301.4 525.6,304.9 527.2,305.4 529.2,303.9 531.1,303.6 532.6,304.6 534.4,304.5 536.6,303.2 538.4,304.8 539.5,299.1 541.1,305.1 542.9,304.5 544.9,305.2 546.2,304.5 548.3,299.2 550.4,303.0 552.1,299.4 553.5,305.7 554.7,301.8 556.6,300.5 558.0,305.7 559.2,305.0 561.1,306.2 563.1,306.5 565.0,305.7 566.6,305.9 568.3,306.0 569.8,305.5 571.3,306.3 573.3,301.3 574.8,301.8 576.5,302.5 577.7,306.3 579.1,305.7 580.3,301.7 582.3,305.3 584.0,303.3 585.9,301.3 587.5,304.6 589.3,304.9 590.9,306.3 592.7,304.3 594.1,306.8 596.1,303.0 598.1,306.4 599.4,307.5" fill="none" stroke="#2a2aa0" stroke-width="1.0" shape-rendering="crispEdges" clip-path="url(#g3)"/><rect x="82.5" y="26.5" width="517" height="108" fill="none" stroke="#e8e8a8" stroke-width="1"/><rect x="82.5" y="134.5" width="517" height="107" fill="none" stroke="#a8e888" stroke-width="1"/><rect x="82.5" y="241.5" width="517" height="108" fill="none" stroke="#20206a" stroke-width="1"/><line x1="385.5" y1="27" x2="385.5" y2="360" stroke="#a0e0e0" stroke-width="1"/><rect x="82" y="360" width="518" height="2" fill="#c0f0e8"/><rect x="125" y="357" width="1" height="3" fill="#5a9890"/><rect x="168" y="357" width="1" height="3" fill="#5a9890"/><rect x="211" y="355" width="1" height="5" fill="#a0d8d0"/><rect x="254" y="357" width="1" height="3" fill="#5a9890"/><rect x="297" y="357" width="1" height="3" fill="#5a9890"/><rect x="340" y="355" width="1" height="5" fill="#a0d8d0"/><rect x="383" y="357" width="1" height="3" fill="#5a9890"/><rect x="426" y="357" width="1" height="3" fill="#5a9890"/><rect x="469" y="355" width="1" height="5" fill="#a0d8d0"/><rect x="512" y="357" width="1" height="3" fill="#5a9890"/><rect x="555" y="357" width="1" height="3" fill="#5a9890"/><rect x="598" y="355" width="1" height="5" fill="#a0d8d0"/></svg>
<div style="position:absolute;left:85px;top:28px;font-size:6px;line-height:7px;color:#f0f070;font-weight:bold;white-space:nowrap;">Max = 5891.0</div>
<div style="position:absolute;left:85px;top:34px;font-size:6px;line-height:7px;color:#40e0f0;font-weight:bold;white-space:nowrap;">Max = 108.8</div>
<div style="position:absolute;left:85px;top:40px;font-size:6px;line-height:7px;color:#e040e0;font-weight:bold;white-space:nowrap;">Max = 100.0</div>
<div style="position:absolute;left:85px;top:115px;font-size:6px;line-height:7px;color:#e040e0;font-weight:bold;white-space:nowrap;">Min = -5.0</div>
<div style="position:absolute;left:85px;top:121px;font-size:6px;line-height:7px;color:#40e0f0;font-weight:bold;white-space:nowrap;">Min = 11.5</div>
<div style="position:absolute;left:85px;top:127px;font-size:6px;line-height:7px;color:#f0f070;font-weight:bold;white-space:nowrap;">Min = 0.0</div>
<div style="position:absolute;left:560px;top:28px;font-size:6px;line-height:7px;color:#f0f070;font-weight:bold;white-space:nowrap;">RPM</div>
<div style="position:absolute;left:560px;top:34px;font-size:6px;line-height:7px;color:#40e0f0;font-weight:bold;white-space:nowrap;">MAP</div>
<div style="position:absolute;left:560px;top:40px;font-size:6px;line-height:7px;color:#e040e0;font-weight:bold;white-space:nowrap;">TP</div>
<div style="position:absolute;left:387.5px;top:114.2px;font-size:6px;line-height:7px;color:#d060d0;font-weight:normal;white-space:nowrap;letter-spacing:0.6px;">14</div>
<div style="position:absolute;left:387.5px;top:120.2px;font-size:6px;line-height:7px;color:#70d0e0;font-weight:normal;white-space:nowrap;letter-spacing:0.6px;">62.1</div>
<div style="position:absolute;left:387.5px;top:126.2px;font-size:6px;line-height:7px;color:#e0e080;font-weight:normal;white-space:nowrap;letter-spacing:0.6px;">4389</div>
<div style="position:absolute;left:85px;top:136px;font-size:6px;line-height:7px;color:#30e030;font-weight:bold;white-space:nowrap;">Max = 68.1</div>
<div style="position:absolute;left:85px;top:142px;font-size:6px;line-height:7px;color:#f02020;font-weight:bold;white-space:nowrap;">Max = 19.8</div>
<div style="position:absolute;left:85px;top:148px;font-size:6px;line-height:7px;color:#ffffff;font-weight:bold;white-space:nowrap;">Max = 18.46</div>
<div style="position:absolute;left:85px;top:222px;font-size:6px;line-height:7px;color:#ffffff;font-weight:bold;white-space:nowrap;">Min = 0.0</div>
<div style="position:absolute;left:85px;top:228px;font-size:6px;line-height:7px;color:#f02020;font-weight:bold;white-space:nowrap;">Min = 10.7</div>
<div style="position:absolute;left:85px;top:234px;font-size:6px;line-height:7px;color:#30e030;font-weight:bold;white-space:nowrap;">Min = 0.0</div>
<div style="position:absolute;left:560px;top:136px;font-size:6px;line-height:7px;color:#30e030;font-weight:bold;white-space:nowrap;">DutyCycle1</div>
<div style="position:absolute;left:560px;top:142px;font-size:6px;line-height:7px;color:#f02020;font-weight:bold;white-space:nowrap;">AFR(WBO2)</div>
<div style="position:absolute;left:560px;top:148px;font-size:6px;line-height:7px;color:#ffffff;font-weight:bold;white-space:nowrap;">PW</div>
<div style="position:absolute;left:388px;top:221.5px;font-size:6px;line-height:7px;color:#e8e8e8;font-weight:normal;white-space:nowrap;letter-spacing:0.4px;">5.780</div>
<div style="position:absolute;left:388px;top:227.2px;font-size:6px;line-height:7px;color:#e04040;font-weight:normal;white-space:nowrap;letter-spacing:0.4px;">14.7</div>
<div style="position:absolute;left:388px;top:232.6px;font-size:6px;line-height:7px;color:#40d040;font-weight:normal;white-space:nowrap;letter-spacing:0.4px;">21.1</div>
<div style="position:absolute;left:85px;top:243px;font-size:6px;line-height:7px;color:#2020e0;font-weight:bold;white-space:nowrap;">Max = 184.4</div>
<div style="position:absolute;left:85px;top:254px;font-size:6px;line-height:7px;color:#f8e8e8;font-weight:bold;white-space:nowrap;background:#000;padding-right:1px;">Max = 110.7</div>
<div style="position:absolute;left:85px;top:329px;font-size:6px;line-height:7px;color:#f8e8e8;font-weight:bold;white-space:nowrap;">Min = 84.7</div>
<div style="position:absolute;left:85px;top:340px;font-size:6px;line-height:7px;color:#2020e0;font-weight:bold;white-space:nowrap;">Min = 107.6</div>
<div style="position:absolute;left:562px;top:243px;font-size:6px;line-height:7px;color:#2020e0;font-weight:bold;white-space:nowrap;">CLT</div>
<div style="position:absolute;left:562px;top:254px;font-size:6px;line-height:7px;color:#f8e8e8;font-weight:bold;white-space:nowrap;">MAT</div>
<div style="position:absolute;left:388px;top:329px;font-size:6px;line-height:7px;color:#f0f0f0;font-weight:normal;white-space:nowrap;">108.9</div>
<div style="position:absolute;left:388px;top:340px;font-size:6px;line-height:7px;color:#2020d0;font-weight:normal;white-space:nowrap;">174.7</div>
<div style="position:absolute;left:84px;top:351px;font-size:6px;line-height:7px;color:#c0f0f0;font-weight:normal;white-space:nowrap;">124.900s.</div>
<div style="position:absolute;left:388px;top:351px;font-size:6px;line-height:7px;color:#c0f0f0;font-weight:normal;white-space:nowrap;">145.419s</div>
<div style="position:absolute;left:571px;top:351px;font-size:6px;line-height:7px;color:#c0f0f0;font-weight:normal;white-space:nowrap;">160.611s.</div>
<div style="position:absolute;left:4px;top:361px;width:852px;height:75px;background:#e9e8dd;"></div>
<div style="position:absolute;left:5px;top:366.5px;font-size:5.85px;line-height:6.85px;color:#111;font-weight:bold;white-space:nowrap;">Record 1845 of 14816 - Zoom: 2x - Play speed: 100.0%</div>
<div style="position:absolute;left:669px;top:365.5px;width:22px;height:9.5px;background:#6cec6c;border:1px solid #b8c8b8;"></div>
<div style="position:absolute;left:669px;top:367px;font-size:5.5px;line-height:6.5px;color:#222;font-weight:normal;white-space:nowrap;width:22px;text-align:center;">Crank:N</div>
<div style="position:absolute;left:692px;top:365.5px;width:22px;height:9.5px;background:#6cec6c;border:1px solid #b8c8b8;"></div>
<div style="position:absolute;left:692px;top:367px;font-size:5.5px;line-height:6.5px;color:#222;font-weight:normal;white-space:nowrap;width:22px;text-align:center;">ASE:N</div>
<div style="position:absolute;left:715px;top:365.5px;width:22px;height:9.5px;background:#6cec6c;border:1px solid #b8c8b8;"></div>
<div style="position:absolute;left:715px;top:367px;font-size:5.5px;line-height:6.5px;color:#222;font-weight:normal;white-space:nowrap;width:22px;text-align:center;">Warm:N</div>
<div style="position:absolute;left:738px;top:365.5px;width:22px;height:9.5px;background:#ec5a5a;border:1px solid #b8c8b8;"></div>
<div style="position:absolute;left:738px;top:367px;font-size:5.5px;line-height:6.5px;color:#222;font-weight:normal;white-space:nowrap;width:22px;text-align:center;">Run:Y</div>
<div style="position:absolute;left:761px;top:365.5px;width:22px;height:9.5px;background:#6cec6c;border:1px solid #b8c8b8;"></div>
<div style="position:absolute;left:761px;top:367px;font-size:5.5px;line-height:6.5px;color:#222;font-weight:normal;white-space:nowrap;width:22px;text-align:center;">Accel:N</div>
<div style="position:absolute;left:784px;top:365.5px;width:22px;height:9.5px;background:#ec5a5a;border:1px solid #b8c8b8;"></div>
<div style="position:absolute;left:784px;top:367px;font-size:5.5px;line-height:6.5px;color:#222;font-weight:normal;white-space:nowrap;width:22px;text-align:center;">Decel:Y</div>
<div style="position:absolute;left:807px;top:365.5px;width:22px;height:9.5px;background:#6cec6c;border:1px solid #b8c8b8;"></div>
<div style="position:absolute;left:807px;top:367px;font-size:5.5px;line-height:6.5px;color:#222;font-weight:normal;white-space:nowrap;width:22px;text-align:center;">bit 7:N</div>
<div style="position:absolute;left:830px;top:365.5px;width:22px;height:9.5px;background:#ec5a5a;border:1px solid #b8c8b8;"></div>
<div style="position:absolute;left:830px;top:367px;font-size:5.5px;line-height:6.5px;color:#222;font-weight:normal;white-space:nowrap;width:22px;text-align:center;">bit 8:Y</div>
<div style="position:absolute;left:4px;top:378px;width:71px;height:10px;border-top:1px solid #a8a79b;border-left:1px solid #a8a79b;"></div>
<div style="position:absolute;left:23.55px;top:378.10px;width:51.5px;height:9px;overflow:hidden;"><div style="font-size:6.2px;line-height:7px;color:#111;-webkit-text-stroke:0.15px #111;white-space:nowrap;transform:scaleX(0.86);transform-origin:0 0;">Time:145.419</div></div>
<div style="position:absolute;left:4px;top:388px;width:71px;height:10px;border-top:1px solid #a8a79b;border-left:1px solid #a8a79b;"></div>
<div style="position:absolute;left:27.15px;top:387.70px;width:47.8px;height:9px;overflow:hidden;"><div style="font-size:6.2px;line-height:7px;color:#111;-webkit-text-stroke:0.15px #111;white-space:nowrap;transform:scaleX(0.86);transform-origin:0 0;">Gbaro:100</div></div>
<div style="position:absolute;left:4px;top:397px;width:71px;height:10px;border-top:1px solid #a8a79b;border-left:1px solid #a8a79b;"></div>
<div style="position:absolute;left:27.30px;top:397.30px;width:47.7px;height:9px;overflow:hidden;"><div style="font-size:6.2px;line-height:7px;color:#111;-webkit-text-stroke:0.15px #111;white-space:nowrap;transform:scaleX(0.86);transform-origin:0 0;">Dwell:3.53</div></div>
<div style="position:absolute;left:4px;top:407px;width:71px;height:10px;border-top:1px solid #a8a79b;border-left:1px solid #a8a79b;"></div>
<div style="position:absolute;left:24.33px;top:406.90px;width:50.7px;height:9px;overflow:hidden;"><div style="font-size:6.2px;line-height:7px;color:#111;-webkit-text-stroke:0.15px #111;white-space:nowrap;transform:scaleX(0.86);transform-origin:0 0;">Ign load:62.1</div></div>
<div style="position:absolute;left:4px;top:416px;width:71px;height:10px;border-top:1px solid #a8a79b;border-left:1px solid #a8a79b;"></div>
<div style="position:absolute;left:28.19px;top:416.50px;width:46.8px;height:9px;overflow:hidden;"><div style="font-size:6.2px;line-height:7px;color:#111;-webkit-text-stroke:0.15px #111;white-space:nowrap;transform:scaleX(0.86);transform-origin:0 0;">status:5.0</div></div>
<div style="position:absolute;left:76px;top:378px;width:71px;height:10px;border-top:1px solid #a8a79b;border-left:1px solid #a8a79b;"></div>
<div style="position:absolute;left:100.97px;top:378.10px;width:45.0px;height:9px;overflow:hidden;"><div style="font-size:6.2px;line-height:7px;color:#111;-webkit-text-stroke:0.15px #111;white-space:nowrap;transform:scaleX(0.86);transform-origin:0 0;">SecL:80</div></div>
<div style="position:absolute;left:76px;top:388px;width:71px;height:10px;border-top:1px solid #a8a79b;border-left:1px solid #a8a79b;"></div>
<div style="position:absolute;left:96.08px;top:387.70px;width:49.9px;height:9px;overflow:hidden;"><div style="font-size:6.2px;line-height:7px;color:#111;-webkit-text-stroke:0.15px #111;white-space:nowrap;transform:scaleX(0.86);transform-origin:0 0;">Gammae:83</div></div>
<div style="position:absolute;left:76px;top:397px;width:71px;height:10px;border-top:1px solid #a8a79b;border-left:1px solid #a8a79b;"></div>
<div style="position:absolute;left:93.56px;top:397.30px;width:52.4px;height:9px;overflow:hidden;"><div style="font-size:6.2px;line-height:7px;color:#111;-webkit-text-stroke:0.15px #111;white-space:nowrap;transform:scaleX(0.86);transform-origin:0 0;">tpsDOT:-223.2</div></div>
<div style="position:absolute;left:76px;top:407px;width:71px;height:10px;border-top:1px solid #a8a79b;border-left:1px solid #a8a79b;"></div>
<div style="position:absolute;left:92.50px;top:406.90px;width:53.5px;height:9px;overflow:hidden;"><div style="font-size:6.2px;line-height:7px;color:#111;-webkit-text-stroke:0.15px #111;white-space:nowrap;transform:scaleX(0.86);transform-origin:0 0;">Secondary Ign Load:0</div></div>
<div style="position:absolute;left:76px;top:416px;width:71px;height:10px;border-top:1px solid #a8a79b;border-left:1px solid #a8a79b;"></div>
<div style="position:absolute;left:92.50px;top:416.50px;width:53.5px;height:9px;overflow:hidden;"><div style="font-size:6.2px;line-height:7px;color:#111;-webkit-text-stroke:0.15px #111;white-space:nowrap;transform:scaleX(0.86);transform-origin:0 0;">timing err%:-1.4</div></div>
<div style="position:absolute;left:146px;top:378px;width:71px;height:10px;border-top:1px solid #a8a79b;border-left:1px solid #a8a79b;"></div>
<div style="position:absolute;left:169.15px;top:378.10px;width:47.8px;height:9px;overflow:hidden;"><div style="font-size:6.2px;line-height:7px;color:#111;-webkit-text-stroke:0.15px #111;white-space:nowrap;transform:scaleX(0.86);transform-origin:0 0;">RPM:4389</div></div>
<div style="position:absolute;left:146px;top:388px;width:71px;height:10px;border-top:1px solid #a8a79b;border-left:1px solid #a8a79b;"></div>
<div style="position:absolute;left:168.71px;top:387.70px;width:48.3px;height:9px;overflow:hidden;"><div style="font-size:6.2px;line-height:7px;color:#111;-webkit-text-stroke:0.15px #111;white-space:nowrap;transform:scaleX(0.86);transform-origin:0 0;">TPSacc:90</div></div>
<div style="position:absolute;left:146px;top:397px;width:71px;height:10px;border-top:1px solid #a8a79b;border-left:1px solid #a8a79b;"></div>
<div style="position:absolute;left:163.50px;top:397.30px;width:53.5px;height:9px;overflow:hidden;"><div style="font-size:6.2px;line-height:7px;color:#111;-webkit-text-stroke:0.15px #111;white-space:nowrap;transform:scaleX(0.86);transform-origin:0 0;">mapDOT:-245.0</div></div>
<div style="position:absolute;left:146px;top:407px;width:71px;height:10px;border-top:1px solid #a8a79b;border-left:1px solid #a8a79b;"></div>
<div style="position:absolute;left:163.50px;top:406.90px;width:53.5px;height:9px;overflow:hidden;"><div style="font-size:6.2px;line-height:7px;color:#111;-webkit-text-stroke:0.15px #111;white-space:nowrap;transform:scaleX(0.86);transform-origin:0 0;">EGT 6 temp:877</div></div>
<div style="position:absolute;left:146px;top:416px;width:71px;height:10px;border-top:1px solid #a8a79b;border-left:1px solid #a8a79b;"></div>
<div style="position:absolute;left:163.50px;top:416.50px;width:53.5px;height:9px;overflow:hidden;"><div style="font-size:6.2px;line-height:7px;color:#111;-webkit-text-stroke:0.15px #111;white-space:nowrap;transform:scaleX(0.86);transform-origin:0 0;">AFR Target 1:1250.0</div></div>
<div style="position:absolute;left:218px;top:378px;width:71px;height:10px;border-top:1px solid #a8a79b;border-left:1px solid #a8a79b;"></div>
<div style="position:absolute;left:241.04px;top:378.10px;width:47.0px;height:9px;overflow:hidden;"><div style="font-size:6.2px;line-height:7px;color:#111;-webkit-text-stroke:0.15px #111;white-space:nowrap;transform:scaleX(0.86);transform-origin:0 0;">MAP:62.1</div></div>
<div style="position:absolute;left:218px;top:388px;width:71px;height:10px;border-top:1px solid #a8a79b;border-left:1px solid #a8a79b;"></div>
<div style="position:absolute;left:244.16px;top:387.70px;width:43.8px;height:9px;overflow:hidden;"><div style="font-size:6.2px;line-height:7px;color:#111;-webkit-text-stroke:0.15px #111;white-space:nowrap;transform:scaleX(0.86);transform-origin:0 0;">Gve:57</div></div>
<div style="position:absolute;left:218px;top:397px;width:71px;height:10px;border-top:1px solid #a8a79b;border-left:1px solid #a8a79b;"></div>
<div style="position:absolute;left:238.08px;top:397.30px;width:49.9px;height:9px;overflow:hidden;"><div style="font-size:6.2px;line-height:7px;color:#111;-webkit-text-stroke:0.15px #111;white-space:nowrap;transform:scaleX(0.86);transform-origin:0 0;">IACstep:160</div></div>
<div style="position:absolute;left:218px;top:407px;width:71px;height:10px;border-top:1px solid #a8a79b;border-left:1px solid #a8a79b;"></div>
<div style="position:absolute;left:234.50px;top:406.90px;width:53.5px;height:9px;overflow:hidden;"><div style="font-size:6.2px;line-height:7px;color:#111;-webkit-text-stroke:0.15px #111;white-space:nowrap;transform:scaleX(0.86);transform-origin:0 0;">EGT 7 temp:767</div></div>
<div style="position:absolute;left:218px;top:416px;width:71px;height:10px;border-top:1px solid #a8a79b;border-left:1px solid #a8a79b;"></div>
<div style="position:absolute;left:237.49px;top:416.50px;width:50.5px;height:9px;overflow:hidden;"><div style="font-size:6.2px;line-height:7px;color:#111;-webkit-text-stroke:0.15px #111;white-space:nowrap;transform:scaleX(0.86);transform-origin:0 0;">Boost Duty:0</div></div>
<div style="position:absolute;left:288px;top:378px;width:71px;height:10px;border-top:1px solid #a8a79b;border-left:1px solid #a8a79b;"></div>
<div style="position:absolute;left:316.64px;top:378.10px;width:42.4px;height:9px;overflow:hidden;"><div style="font-size:6.2px;line-height:7px;color:#111;-webkit-text-stroke:0.15px #111;white-space:nowrap;transform:scaleX(0.86);transform-origin:0 0;">TP:14</div></div>
<div style="position:absolute;left:288px;top:388px;width:71px;height:10px;border-top:1px solid #a8a79b;border-left:1px solid #a8a79b;"></div>
<div style="position:absolute;left:312.09px;top:387.70px;width:46.9px;height:9px;overflow:hidden;"><div style="font-size:6.2px;line-height:7px;color:#111;-webkit-text-stroke:0.15px #111;white-space:nowrap;transform:scaleX(0.86);transform-origin:0 0;">PW:5.780</div></div>
<div style="position:absolute;left:288px;top:397px;width:71px;height:10px;border-top:1px solid #a8a79b;border-left:1px solid #a8a79b;"></div>
<div style="position:absolute;left:310.66px;top:397.30px;width:48.3px;height:9px;overflow:hidden;"><div style="font-size:6.2px;line-height:7px;color:#111;-webkit-text-stroke:0.15px #111;white-space:nowrap;transform:scaleX(0.86);transform-origin:0 0;">Batt V:13.2</div></div>
<div style="position:absolute;left:288px;top:407px;width:71px;height:10px;border-top:1px solid #a8a79b;border-left:1px solid #a8a79b;"></div>
<div style="position:absolute;left:310.71px;top:406.90px;width:48.3px;height:9px;overflow:hidden;"><div style="font-size:6.2px;line-height:7px;color:#111;-webkit-text-stroke:0.15px #111;white-space:nowrap;transform:scaleX(0.86);transform-origin:0 0;">gpioadc0:0</div></div>
<div style="position:absolute;left:288px;top:416px;width:71px;height:10px;border-top:1px solid #a8a79b;border-left:1px solid #a8a79b;"></div>
<div style="position:absolute;left:305.50px;top:416.50px;width:53.5px;height:9px;overflow:hidden;"><div style="font-size:6.2px;line-height:7px;color:#111;-webkit-text-stroke:0.15px #111;white-space:nowrap;transform:scaleX(0.86);transform-origin:0 0;">PWM Idle Duty:62.5</div></div>
<div style="position:absolute;left:360px;top:378px;width:71px;height:10px;border-top:1px solid #a8a79b;border-left:1px solid #a8a79b;"></div>
<div style="position:absolute;left:382.01px;top:378.10px;width:48.0px;height:9px;overflow:hidden;"><div style="font-size:6.2px;line-height:7px;color:#111;-webkit-text-stroke:0.15px #111;white-space:nowrap;transform:scaleX(0.86);transform-origin:0 0;">AFR:14.70</div></div>
<div style="position:absolute;left:360px;top:388px;width:71px;height:10px;border-top:1px solid #a8a79b;border-left:1px solid #a8a79b;"></div>
<div style="position:absolute;left:376.50px;top:387.70px;width:53.5px;height:9px;overflow:hidden;"><div style="font-size:6.2px;line-height:7px;color:#111;-webkit-text-stroke:0.15px #111;white-space:nowrap;transform:scaleX(0.86);transform-origin:0 0;">DutyCycle1:21.1</div></div>
<div style="position:absolute;left:360px;top:397px;width:71px;height:10px;border-top:1px solid #a8a79b;border-left:1px solid #a8a79b;"></div>
<div style="position:absolute;left:385.41px;top:397.30px;width:44.6px;height:9px;overflow:hidden;"><div style="font-size:6.2px;line-height:7px;color:#111;-webkit-text-stroke:0.15px #111;white-space:nowrap;transform:scaleX(0.86);transform-origin:0 0;">deltaT:0</div></div>
<div style="position:absolute;left:360px;top:407px;width:71px;height:10px;border-top:1px solid #a8a79b;border-left:1px solid #a8a79b;"></div>
<div style="position:absolute;left:381.71px;top:406.90px;width:48.3px;height:9px;overflow:hidden;"><div style="font-size:6.2px;line-height:7px;color:#111;-webkit-text-stroke:0.15px #111;white-space:nowrap;transform:scaleX(0.86);transform-origin:0 0;">gpioadc1:0</div></div>
<div style="position:absolute;left:360px;top:416px;width:71px;height:10px;border-top:1px solid #a8a79b;border-left:1px solid #a8a79b;"></div>
<div style="position:absolute;left:376.50px;top:416.50px;width:53.5px;height:9px;overflow:hidden;"><div style="font-size:6.2px;line-height:7px;color:#111;-webkit-text-stroke:0.15px #111;white-space:nowrap;transform:scaleX(0.86);transform-origin:0 0;">Lost sync count:1</div></div>
<div style="position:absolute;left:430px;top:378px;width:71px;height:10px;border-top:1px solid #a8a79b;border-left:1px solid #a8a79b;"></div>
<div style="position:absolute;left:453.20px;top:378.10px;width:47.8px;height:9px;overflow:hidden;"><div style="font-size:6.2px;line-height:7px;color:#111;-webkit-text-stroke:0.15px #111;white-space:nowrap;transform:scaleX(0.86);transform-origin:0 0;">MAT:108.9</div></div>
<div style="position:absolute;left:430px;top:388px;width:71px;height:10px;border-top:1px solid #a8a79b;border-left:1px solid #a8a79b;"></div>
<div style="position:absolute;left:455.67px;top:387.70px;width:45.3px;height:9px;overflow:hidden;"><div style="font-size:6.2px;line-height:7px;color:#111;-webkit-text-stroke:0.15px #111;white-space:nowrap;transform:scaleX(0.86);transform-origin:0 0;">Gve2:57</div></div>
<div style="position:absolute;left:430px;top:397px;width:71px;height:10px;border-top:1px solid #a8a79b;border-left:1px solid #a8a79b;"></div>
<div style="position:absolute;left:451.77px;top:397.30px;width:49.2px;height:9px;overflow:hidden;"><div style="font-size:6.2px;line-height:7px;color:#111;-webkit-text-stroke:0.15px #111;white-space:nowrap;transform:scaleX(0.86);transform-origin:0 0;">WallFuel1:0</div></div>
<div style="position:absolute;left:430px;top:407px;width:71px;height:10px;border-top:1px solid #a8a79b;border-left:1px solid #a8a79b;"></div>
<div style="position:absolute;left:452.71px;top:406.90px;width:48.3px;height:9px;overflow:hidden;"><div style="font-size:6.2px;line-height:7px;color:#111;-webkit-text-stroke:0.15px #111;white-space:nowrap;transform:scaleX(0.86);transform-origin:0 0;">gpioadc2:0</div></div>
<div style="position:absolute;left:430px;top:416px;width:71px;height:10px;border-top:1px solid #a8a79b;border-left:1px solid #a8a79b;"></div>
<div style="position:absolute;left:447.50px;top:416.50px;width:53.5px;height:9px;overflow:hidden;"><div style="font-size:6.2px;line-height:7px;color:#111;-webkit-text-stroke:0.15px #111;white-space:nowrap;transform:scaleX(0.86);transform-origin:0 0;">Lost sync reason:0</div></div>
<div style="position:absolute;left:502px;top:378px;width:71px;height:10px;border-top:1px solid #a8a79b;border-left:1px solid #a8a79b;"></div>
<div style="position:absolute;left:524.80px;top:378.10px;width:47.2px;height:9px;overflow:hidden;"><div style="font-size:6.2px;line-height:7px;color:#111;-webkit-text-stroke:0.15px #111;white-space:nowrap;transform:scaleX(0.86);transform-origin:0 0;">CLT:174.7</div></div>
<div style="position:absolute;left:502px;top:388px;width:71px;height:10px;border-top:1px solid #a8a79b;border-left:1px solid #a8a79b;"></div>
<div style="position:absolute;left:523.56px;top:387.70px;width:48.4px;height:9px;overflow:hidden;"><div style="font-size:6.2px;line-height:7px;color:#111;-webkit-text-stroke:0.15px #111;white-space:nowrap;transform:scaleX(0.86);transform-origin:0 0;">PW2:6.536</div></div>
<div style="position:absolute;left:502px;top:397px;width:71px;height:10px;border-top:1px solid #a8a79b;border-left:1px solid #a8a79b;"></div>
<div style="position:absolute;left:522.77px;top:397.30px;width:49.2px;height:9px;overflow:hidden;"><div style="font-size:6.2px;line-height:7px;color:#111;-webkit-text-stroke:0.15px #111;white-space:nowrap;transform:scaleX(0.86);transform-origin:0 0;">WallFuel2:0</div></div>
<div style="position:absolute;left:502px;top:407px;width:71px;height:10px;border-top:1px solid #a8a79b;border-left:1px solid #a8a79b;"></div>
<div style="position:absolute;left:523.71px;top:406.90px;width:48.3px;height:9px;overflow:hidden;"><div style="font-size:6.2px;line-height:7px;color:#111;-webkit-text-stroke:0.15px #111;white-space:nowrap;transform:scaleX(0.86);transform-origin:0 0;">gpioadc3:0</div></div>
<div style="position:absolute;left:502px;top:416px;width:71px;height:10px;border-top:1px solid #a8a79b;border-left:1px solid #a8a79b;"></div>
<div style="position:absolute;left:518.50px;top:416.50px;width:53.5px;height:9px;overflow:hidden;"><div style="font-size:6.2px;line-height:7px;color:#111;-webkit-text-stroke:0.15px #111;white-space:nowrap;transform:scaleX(0.86);transform-origin:0 0;">AFR(WBO2):14.7</div></div>
<div style="position:absolute;left:572px;top:378px;width:71px;height:10px;border-top:1px solid #a8a79b;border-left:1px solid #a8a79b;"></div>
<div style="position:absolute;left:594.26px;top:378.10px;width:48.7px;height:9px;overflow:hidden;"><div style="font-size:6.2px;line-height:7px;color:#111;-webkit-text-stroke:0.15px #111;white-space:nowrap;transform:scaleX(0.86);transform-origin:0 0;">Engine:161</div></div>
<div style="position:absolute;left:572px;top:388px;width:71px;height:10px;border-top:1px solid #a8a79b;border-left:1px solid #a8a79b;"></div>
<div style="position:absolute;left:589.50px;top:387.70px;width:53.5px;height:9px;overflow:hidden;"><div style="font-size:6.2px;line-height:7px;color:#111;-webkit-text-stroke:0.15px #111;white-space:nowrap;transform:scaleX(0.86);transform-origin:0 0;">DutyCycle2:23.9</div></div>
<div style="position:absolute;left:572px;top:397px;width:71px;height:10px;border-top:1px solid #a8a79b;border-left:1px solid #a8a79b;"></div>
<div style="position:absolute;left:595.60px;top:397.30px;width:47.4px;height:9px;overflow:hidden;"><div style="font-size:6.2px;line-height:7px;color:#111;-webkit-text-stroke:0.15px #111;white-space:nowrap;transform:scaleX(0.86);transform-origin:0 0;">EAE1 %:0</div></div>
<div style="position:absolute;left:572px;top:407px;width:71px;height:10px;border-top:1px solid #a8a79b;border-left:1px solid #a8a79b;"></div>
<div style="position:absolute;left:595.45px;top:406.90px;width:47.6px;height:9px;overflow:hidden;"><div style="font-size:6.2px;line-height:7px;color:#111;-webkit-text-stroke:0.15px #111;white-space:nowrap;transform:scaleX(0.86);transform-origin:0 0;">status1:25</div></div>
<div style="position:absolute;left:644px;top:378px;width:71px;height:10px;border-top:1px solid #a8a79b;border-left:1px solid #a8a79b;"></div>
<div style="position:absolute;left:667.04px;top:378.10px;width:47.0px;height:9px;overflow:hidden;"><div style="font-size:6.2px;line-height:7px;color:#111;-webkit-text-stroke:0.15px #111;white-space:nowrap;transform:scaleX(0.86);transform-origin:0 0;">Gego:100</div></div>
<div style="position:absolute;left:644px;top:388px;width:71px;height:10px;border-top:1px solid #a8a79b;border-left:1px solid #a8a79b;"></div>
<div style="position:absolute;left:661.26px;top:387.70px;width:52.7px;height:9px;overflow:hidden;"><div style="font-size:6.2px;line-height:7px;color:#111;-webkit-text-stroke:0.15px #111;white-space:nowrap;transform:scaleX(0.86);transform-origin:0 0;">SparkAdv:24.6</div></div>
<div style="position:absolute;left:644px;top:397px;width:71px;height:10px;border-top:1px solid #a8a79b;border-left:1px solid #a8a79b;"></div>
<div style="position:absolute;left:666.60px;top:397.30px;width:47.4px;height:9px;overflow:hidden;"><div style="font-size:6.2px;line-height:7px;color:#111;-webkit-text-stroke:0.15px #111;white-space:nowrap;transform:scaleX(0.86);transform-origin:0 0;">EAE2 %:0</div></div>
<div style="position:absolute;left:644px;top:407px;width:71px;height:10px;border-top:1px solid #a8a79b;border-left:1px solid #a8a79b;"></div>
<div style="position:absolute;left:667.93px;top:406.90px;width:46.1px;height:9px;overflow:hidden;"><div style="font-size:6.2px;line-height:7px;color:#111;-webkit-text-stroke:0.15px #111;white-space:nowrap;transform:scaleX(0.86);transform-origin:0 0;">status2:0</div></div>
<div style="position:absolute;left:714px;top:378px;width:71px;height:10px;border-top:1px solid #a8a79b;border-left:1px solid #a8a79b;"></div>
<div style="position:absolute;left:741.01px;top:378.10px;width:44.0px;height:9px;overflow:hidden;"><div style="font-size:6.2px;line-height:7px;color:#111;-webkit-text-stroke:0.15px #111;white-space:nowrap;transform:scaleX(0.86);transform-origin:0 0;">Gair:93</div></div>
<div style="position:absolute;left:714px;top:388px;width:71px;height:10px;border-top:1px solid #a8a79b;border-left:1px solid #a8a79b;"></div>
<div style="position:absolute;left:734.19px;top:387.70px;width:50.8px;height:9px;overflow:hidden;"><div style="font-size:6.2px;line-height:7px;color:#111;-webkit-text-stroke:0.15px #111;white-space:nowrap;transform:scaleX(0.86);transform-origin:0 0;">knockRet:0.0</div></div>
<div style="position:absolute;left:714px;top:397px;width:71px;height:10px;border-top:1px solid #a8a79b;border-left:1px solid #a8a79b;"></div>
<div style="position:absolute;left:737.89px;top:397.30px;width:47.1px;height:9px;overflow:hidden;"><div style="font-size:6.2px;line-height:7px;color:#111;-webkit-text-stroke:0.15px #111;white-space:nowrap;transform:scaleX(0.86);transform-origin:0 0;">Load:62.1</div></div>
<div style="position:absolute;left:714px;top:407px;width:71px;height:10px;border-top:1px solid #a8a79b;border-left:1px solid #a8a79b;"></div>
<div style="position:absolute;left:738.93px;top:406.90px;width:46.1px;height:9px;overflow:hidden;"><div style="font-size:6.2px;line-height:7px;color:#111;-webkit-text-stroke:0.15px #111;white-space:nowrap;transform:scaleX(0.86);transform-origin:0 0;">status3:0</div></div>
<div style="position:absolute;left:786px;top:378px;width:71px;height:10px;border-top:1px solid #a8a79b;border-left:1px solid #a8a79b;"></div>
<div style="position:absolute;left:806.97px;top:378.10px;width:49.0px;height:9px;overflow:hidden;"><div style="font-size:6.2px;line-height:7px;color:#111;-webkit-text-stroke:0.15px #111;white-space:nowrap;transform:scaleX(0.86);transform-origin:0 0;">Gwarm:100</div></div>
<div style="position:absolute;left:786px;top:388px;width:71px;height:10px;border-top:1px solid #a8a79b;border-left:1px solid #a8a79b;"></div>
<div style="position:absolute;left:806.23px;top:387.70px;width:49.8px;height:9px;overflow:hidden;"><div style="font-size:6.2px;line-height:7px;color:#111;-webkit-text-stroke:0.15px #111;white-space:nowrap;transform:scaleX(0.86);transform-origin:0 0;">ColdAdv:0.0</div></div>
<div style="position:absolute;left:786px;top:397px;width:71px;height:10px;border-top:1px solid #a8a79b;border-left:1px solid #a8a79b;"></div>
<div style="position:absolute;left:802.50px;top:397.30px;width:53.5px;height:9px;overflow:hidden;"><div style="font-size:6.2px;line-height:7px;color:#111;-webkit-text-stroke:0.15px #111;white-space:nowrap;transform:scaleX(0.86);transform-origin:0 0;">Secondary Load:0.0</div></div>
<div style="position:absolute;left:786px;top:407px;width:71px;height:10px;border-top:1px solid #a8a79b;border-left:1px solid #a8a79b;"></div>
<div style="position:absolute;left:809.93px;top:406.90px;width:46.1px;height:9px;overflow:hidden;"><div style="font-size:6.2px;line-height:7px;color:#111;-webkit-text-stroke:0.15px #111;white-space:nowrap;transform:scaleX(0.86);transform-origin:0 0;">status4:0</div></div>
<svg style="position:absolute;left:0;top:0" width="861" height="439"><clipPath id="gc0_0"><path d="M6.2,386.6 L7.0,383.4 L8.8,381.2 L10.8,380.0 L15.2,380.0 L17.2,381.2 L19.0,383.4 L19.8,386.6 Z"/></clipPath><g clip-path="url(#gc0_0)"><rect x="6.2" y="380.0" width="13.6" height="6.6" fill="#f0f020"/><path d="M4.2,386.6 L12.1,386.6 L8.2,380.0 L4.2,380.0 Z" fill="#20d020"/><path d="M13.1,386.6 L21.8,386.6 L21.8,380.0 L17.0,380.0 Z" fill="#e01818"/></g><path d="M6.2,386.6 L7.0,383.4 L8.8,381.2 L10.8,380.0 L15.2,380.0 L17.2,381.2 L19.0,383.4 L19.8,386.6 Z" fill="none" stroke="#1a1a0a" stroke-width="1.1" clip-path="url(#gc0_0)"/><rect x="6.2" y="385.6" width="13.6" height="1" fill="#1a1a0a"/><clipPath id="gc0_1"><path d="M6.2,396.2 L7.0,393.0 L8.8,390.8 L10.8,389.6 L15.2,389.6 L17.2,390.8 L19.0,393.0 L19.8,396.2 Z"/></clipPath><g clip-path="url(#gc0_1)"><rect x="6.2" y="389.6" width="13.6" height="6.6" fill="#f0f020"/><path d="M4.2,396.2 L12.1,396.2 L8.2,389.6 L4.2,389.6 Z" fill="#20d020"/><path d="M13.1,396.2 L21.8,396.2 L21.8,389.6 L17.0,389.6 Z" fill="#e01818"/></g><path d="M6.2,396.2 L7.0,393.0 L8.8,390.8 L10.8,389.6 L15.2,389.6 L17.2,390.8 L19.0,393.0 L19.8,396.2 Z" fill="none" stroke="#1a1a0a" stroke-width="1.1" clip-path="url(#gc0_1)"/><rect x="6.2" y="395.2" width="13.6" height="1" fill="#1a1a0a"/><clipPath id="gc0_2"><path d="M6.2,405.8 L7.0,402.6 L8.8,400.4 L10.8,399.2 L15.2,399.2 L17.2,400.4 L19.0,402.6 L19.8,405.8 Z"/></clipPath><g clip-path="url(#gc0_2)"><rect x="6.2" y="399.2" width="13.6" height="6.6" fill="#f0f020"/><path d="M4.2,405.8 L12.1,405.8 L8.2,399.2 L4.2,399.2 Z" fill="#20d020"/><path d="M13.1,405.8 L21.8,405.8 L21.8,399.2 L17.0,399.2 Z" fill="#e01818"/></g><path d="M6.2,405.8 L7.0,402.6 L8.8,400.4 L10.8,399.2 L15.2,399.2 L17.2,400.4 L19.0,402.6 L19.8,405.8 Z" fill="none" stroke="#1a1a0a" stroke-width="1.1" clip-path="url(#gc0_2)"/><rect x="6.2" y="404.8" width="13.6" height="1" fill="#1a1a0a"/><clipPath id="gc0_3"><path d="M6.2,415.4 L7.0,412.2 L8.8,410.0 L10.8,408.8 L15.2,408.8 L17.2,410.0 L19.0,412.2 L19.8,415.4 Z"/></clipPath><g clip-path="url(#gc0_3)"><rect x="6.2" y="408.8" width="13.6" height="6.6" fill="#f0f020"/><path d="M4.2,415.4 L12.1,415.4 L8.2,408.8 L4.2,408.8 Z" fill="#20d020"/><path d="M13.1,415.4 L21.8,415.4 L21.8,408.8 L17.0,408.8 Z" fill="#e01818"/></g><path d="M6.2,415.4 L7.0,412.2 L8.8,410.0 L10.8,408.8 L15.2,408.8 L17.2,410.0 L19.0,412.2 L19.8,415.4 Z" fill="none" stroke="#1a1a0a" stroke-width="1.1" clip-path="url(#gc0_3)"/><rect x="6.2" y="414.4" width="13.6" height="1" fill="#1a1a0a"/><line x1="13.0" y1="415.4" x2="13.0" y2="409.4" stroke="#111" stroke-width="0.9"/><clipPath id="gc0_4"><path d="M6.2,425.0 L7.0,421.8 L8.8,419.6 L10.8,418.4 L15.2,418.4 L17.2,419.6 L19.0,421.8 L19.8,425.0 Z"/></clipPath><g clip-path="url(#gc0_4)"><rect x="6.2" y="418.4" width="13.6" height="6.6" fill="#f0f020"/><path d="M4.2,425.0 L12.1,425.0 L8.2,418.4 L4.2,418.4 Z" fill="#20d020"/><path d="M13.1,425.0 L21.8,425.0 L21.8,418.4 L17.0,418.4 Z" fill="#e01818"/></g><path d="M6.2,425.0 L7.0,421.8 L8.8,419.6 L10.8,418.4 L15.2,418.4 L17.2,419.6 L19.0,421.8 L19.8,425.0 Z" fill="none" stroke="#1a1a0a" stroke-width="1.1" clip-path="url(#gc0_4)"/><rect x="6.2" y="424.0" width="13.6" height="1" fill="#1a1a0a"/><clipPath id="gc1_0"><path d="M77.2,386.6 L78.0,383.4 L79.8,381.2 L81.8,380.0 L86.2,380.0 L88.2,381.2 L90.0,383.4 L90.8,386.6 Z"/></clipPath><g clip-path="url(#gc1_0)"><rect x="77.2" y="380.0" width="13.6" height="6.6" fill="#f0f020"/><path d="M75.2,386.6 L83.1,386.6 L79.2,380.0 L75.2,380.0 Z" fill="#20d020"/><path d="M84.1,386.6 L92.8,386.6 L92.8,380.0 L88.0,380.0 Z" fill="#e01818"/></g><path d="M77.2,386.6 L78.0,383.4 L79.8,381.2 L81.8,380.0 L86.2,380.0 L88.2,381.2 L90.0,383.4 L90.8,386.6 Z" fill="none" stroke="#1a1a0a" stroke-width="1.1" clip-path="url(#gc1_0)"/><rect x="77.2" y="385.6" width="13.6" height="1" fill="#1a1a0a"/><clipPath id="gc1_1"><path d="M77.2,396.2 L78.0,393.0 L79.8,390.8 L81.8,389.6 L86.2,389.6 L88.2,390.8 L90.0,393.0 L90.8,396.2 Z"/></clipPath><g clip-path="url(#gc1_1)"><rect x="77.2" y="389.6" width="13.6" height="6.6" fill="#f0f020"/><path d="M75.2,396.2 L83.1,396.2 L79.2,389.6 L75.2,389.6 Z" fill="#20d020"/><path d="M84.1,396.2 L92.8,396.2 L92.8,389.6 L88.0,389.6 Z" fill="#e01818"/></g><path d="M77.2,396.2 L78.0,393.0 L79.8,390.8 L81.8,389.6 L86.2,389.6 L88.2,390.8 L90.0,393.0 L90.8,396.2 Z" fill="none" stroke="#1a1a0a" stroke-width="1.1" clip-path="url(#gc1_1)"/><rect x="77.2" y="395.2" width="13.6" height="1" fill="#1a1a0a"/><clipPath id="gc1_2"><path d="M77.2,405.8 L78.0,402.6 L79.8,400.4 L81.8,399.2 L86.2,399.2 L88.2,400.4 L90.0,402.6 L90.8,405.8 Z"/></clipPath><g clip-path="url(#gc1_2)"><rect x="77.2" y="399.2" width="13.6" height="6.6" fill="#f0f020"/><path d="M75.2,405.8 L83.1,405.8 L79.2,399.2 L75.2,399.2 Z" fill="#20d020"/><path d="M84.1,405.8 L92.8,405.8 L92.8,399.2 L88.0,399.2 Z" fill="#e01818"/></g><path d="M77.2,405.8 L78.0,402.6 L79.8,400.4 L81.8,399.2 L86.2,399.2 L88.2,400.4 L90.0,402.6 L90.8,405.8 Z" fill="none" stroke="#1a1a0a" stroke-width="1.1" clip-path="url(#gc1_2)"/><rect x="77.2" y="404.8" width="13.6" height="1" fill="#1a1a0a"/><line x1="84.0" y1="405.8" x2="78.8" y2="402.8" stroke="#111" stroke-width="0.9"/><clipPath id="gc1_3"><path d="M77.2,415.4 L78.0,412.2 L79.8,410.0 L81.8,408.8 L86.2,408.8 L88.2,410.0 L90.0,412.2 L90.8,415.4 Z"/></clipPath><g clip-path="url(#gc1_3)"><rect x="77.2" y="408.8" width="13.6" height="6.6" fill="#f0f020"/><path d="M75.2,415.4 L83.1,415.4 L79.2,408.8 L75.2,408.8 Z" fill="#20d020"/><path d="M84.1,415.4 L92.8,415.4 L92.8,408.8 L88.0,408.8 Z" fill="#e01818"/></g><path d="M77.2,415.4 L78.0,412.2 L79.8,410.0 L81.8,408.8 L86.2,408.8 L88.2,410.0 L90.0,412.2 L90.8,415.4 Z" fill="none" stroke="#1a1a0a" stroke-width="1.1" clip-path="url(#gc1_3)"/><rect x="77.2" y="414.4" width="13.6" height="1" fill="#1a1a0a"/><clipPath id="gc1_4"><path d="M77.2,425.0 L78.0,421.8 L79.8,419.6 L81.8,418.4 L86.2,418.4 L88.2,419.6 L90.0,421.8 L90.8,425.0 Z"/></clipPath><g clip-path="url(#gc1_4)"><rect x="77.2" y="418.4" width="13.6" height="6.6" fill="#f0f020"/><path d="M75.2,425.0 L83.1,425.0 L79.2,418.4 L75.2,418.4 Z" fill="#20d020"/><path d="M84.1,425.0 L92.8,425.0 L92.8,418.4 L88.0,418.4 Z" fill="#e01818"/></g><path d="M77.2,425.0 L78.0,421.8 L79.8,419.6 L81.8,418.4 L86.2,418.4 L88.2,419.6 L90.0,421.8 L90.8,425.0 Z" fill="none" stroke="#1a1a0a" stroke-width="1.1" clip-path="url(#gc1_4)"/><rect x="77.2" y="424.0" width="13.6" height="1" fill="#1a1a0a"/><line x1="84.0" y1="425.0" x2="81.5" y2="419.6" stroke="#111" stroke-width="0.9"/><clipPath id="gc2_0"><path d="M148.2,386.6 L149.0,383.4 L150.8,381.2 L152.8,380.0 L157.2,380.0 L159.2,381.2 L161.0,383.4 L161.8,386.6 Z"/></clipPath><g clip-path="url(#gc2_0)"><rect x="148.2" y="380.0" width="13.6" height="6.6" fill="#f0f020"/><path d="M146.2,386.6 L154.1,386.6 L150.2,380.0 L146.2,380.0 Z" fill="#20d020"/><path d="M155.1,386.6 L163.8,386.6 L163.8,380.0 L159.0,380.0 Z" fill="#e01818"/></g><path d="M148.2,386.6 L149.0,383.4 L150.8,381.2 L152.8,380.0 L157.2,380.0 L159.2,381.2 L161.0,383.4 L161.8,386.6 Z" fill="none" stroke="#1a1a0a" stroke-width="1.1" clip-path="url(#gc2_0)"/><rect x="148.2" y="385.6" width="13.6" height="1" fill="#1a1a0a"/><clipPath id="gc2_1"><path d="M148.2,396.2 L149.0,393.0 L150.8,390.8 L152.8,389.6 L157.2,389.6 L159.2,390.8 L161.0,393.0 L161.8,396.2 Z"/></clipPath><g clip-path="url(#gc2_1)"><rect x="148.2" y="389.6" width="13.6" height="6.6" fill="#f0f020"/><path d="M146.2,396.2 L154.1,396.2 L150.2,389.6 L146.2,389.6 Z" fill="#20d020"/><path d="M155.1,396.2 L163.8,396.2 L163.8,389.6 L159.0,389.6 Z" fill="#e01818"/></g><path d="M148.2,396.2 L149.0,393.0 L150.8,390.8 L152.8,389.6 L157.2,389.6 L159.2,390.8 L161.0,393.0 L161.8,396.2 Z" fill="none" stroke="#1a1a0a" stroke-width="1.1" clip-path="url(#gc2_1)"/><rect x="148.2" y="395.2" width="13.6" height="1" fill="#1a1a0a"/><clipPath id="gc2_2"><path d="M148.2,405.8 L149.0,402.6 L150.8,400.4 L152.8,399.2 L157.2,399.2 L159.2,400.4 L161.0,402.6 L161.8,405.8 Z"/></clipPath><g clip-path="url(#gc2_2)"><rect x="148.2" y="399.2" width="13.6" height="6.6" fill="#f0f020"/><path d="M146.2,405.8 L154.1,405.8 L150.2,399.2 L146.2,399.2 Z" fill="#20d020"/><path d="M155.1,405.8 L163.8,405.8 L163.8,399.2 L159.0,399.2 Z" fill="#e01818"/></g><path d="M148.2,405.8 L149.0,402.6 L150.8,400.4 L152.8,399.2 L157.2,399.2 L159.2,400.4 L161.0,402.6 L161.8,405.8 Z" fill="none" stroke="#1a1a0a" stroke-width="1.1" clip-path="url(#gc2_2)"/><rect x="148.2" y="404.8" width="13.6" height="1" fill="#1a1a0a"/><clipPath id="gc2_3"><path d="M148.2,415.4 L149.0,412.2 L150.8,410.0 L152.8,408.8 L157.2,408.8 L159.2,410.0 L161.0,412.2 L161.8,415.4 Z"/></clipPath><g clip-path="url(#gc2_3)"><rect x="148.2" y="408.8" width="13.6" height="6.6" fill="#f0f020"/><path d="M146.2,415.4 L154.1,415.4 L150.2,408.8 L146.2,408.8 Z" fill="#20d020"/><path d="M155.1,415.4 L163.8,415.4 L163.8,408.8 L159.0,408.8 Z" fill="#e01818"/></g><path d="M148.2,415.4 L149.0,412.2 L150.8,410.0 L152.8,408.8 L157.2,408.8 L159.2,410.0 L161.0,412.2 L161.8,415.4 Z" fill="none" stroke="#1a1a0a" stroke-width="1.1" clip-path="url(#gc2_3)"/><rect x="148.2" y="414.4" width="13.6" height="1" fill="#1a1a0a"/><line x1="155.0" y1="415.4" x2="154.0" y2="409.5" stroke="#111" stroke-width="0.9"/><clipPath id="gc2_4"><path d="M148.2,425.0 L149.0,421.8 L150.8,419.6 L152.8,418.4 L157.2,418.4 L159.2,419.6 L161.0,421.8 L161.8,425.0 Z"/></clipPath><g clip-path="url(#gc2_4)"><rect x="148.2" y="418.4" width="13.6" height="6.6" fill="#f0f020"/><path d="M146.2,425.0 L154.1,425.0 L150.2,418.4 L146.2,418.4 Z" fill="#20d020"/><path d="M155.1,425.0 L163.8,425.0 L163.8,418.4 L159.0,418.4 Z" fill="#e01818"/></g><path d="M148.2,425.0 L149.0,421.8 L150.8,419.6 L152.8,418.4 L157.2,418.4 L159.2,419.6 L161.0,421.8 L161.8,425.0 Z" fill="none" stroke="#1a1a0a" stroke-width="1.1" clip-path="url(#gc2_4)"/><rect x="148.2" y="424.0" width="13.6" height="1" fill="#1a1a0a"/><line x1="155.0" y1="425.0" x2="149.8" y2="422.0" stroke="#111" stroke-width="0.9"/><clipPath id="gc3_0"><path d="M219.2,386.6 L220.0,383.4 L221.8,381.2 L223.8,380.0 L228.2,380.0 L230.2,381.2 L232.0,383.4 L232.8,386.6 Z"/></clipPath><g clip-path="url(#gc3_0)"><rect x="219.2" y="380.0" width="13.6" height="6.6" fill="#f0f020"/><path d="M217.2,386.6 L225.1,386.6 L221.2,380.0 L217.2,380.0 Z" fill="#20d020"/><path d="M226.1,386.6 L234.8,386.6 L234.8,380.0 L230.0,380.0 Z" fill="#e01818"/></g><path d="M219.2,386.6 L220.0,383.4 L221.8,381.2 L223.8,380.0 L228.2,380.0 L230.2,381.2 L232.0,383.4 L232.8,386.6 Z" fill="none" stroke="#1a1a0a" stroke-width="1.1" clip-path="url(#gc3_0)"/><rect x="219.2" y="385.6" width="13.6" height="1" fill="#1a1a0a"/><line x1="226.0" y1="386.6" x2="225.5" y2="380.6" stroke="#111" stroke-width="0.9"/><clipPath id="gc3_1"><path d="M219.2,396.2 L220.0,393.0 L221.8,390.8 L223.8,389.6 L228.2,389.6 L230.2,390.8 L232.0,393.0 L232.8,396.2 Z"/></clipPath><g clip-path="url(#gc3_1)"><rect x="219.2" y="389.6" width="13.6" height="6.6" fill="#f0f020"/><path d="M217.2,396.2 L225.1,396.2 L221.2,389.6 L217.2,389.6 Z" fill="#20d020"/><path d="M226.1,396.2 L234.8,396.2 L234.8,389.6 L230.0,389.6 Z" fill="#e01818"/></g><path d="M219.2,396.2 L220.0,393.0 L221.8,390.8 L223.8,389.6 L228.2,389.6 L230.2,390.8 L232.0,393.0 L232.8,396.2 Z" fill="none" stroke="#1a1a0a" stroke-width="1.1" clip-path="url(#gc3_1)"/><rect x="219.2" y="395.2" width="13.6" height="1" fill="#1a1a0a"/><line x1="226.0" y1="396.2" x2="225.0" y2="390.3" stroke="#111" stroke-width="0.9"/><clipPath id="gc3_2"><path d="M219.2,405.8 L220.0,402.6 L221.8,400.4 L223.8,399.2 L228.2,399.2 L230.2,400.4 L232.0,402.6 L232.8,405.8 Z"/></clipPath><g clip-path="url(#gc3_2)"><rect x="219.2" y="399.2" width="13.6" height="6.6" fill="#f0f020"/><path d="M217.2,405.8 L225.1,405.8 L221.2,399.2 L217.2,399.2 Z" fill="#20d020"/><path d="M226.1,405.8 L234.8,405.8 L234.8,399.2 L230.0,399.2 Z" fill="#e01818"/></g><path d="M219.2,405.8 L220.0,402.6 L221.8,400.4 L223.8,399.2 L228.2,399.2 L230.2,400.4 L232.0,402.6 L232.8,405.8 Z" fill="none" stroke="#1a1a0a" stroke-width="1.1" clip-path="url(#gc3_2)"/><rect x="219.2" y="404.8" width="13.6" height="1" fill="#1a1a0a"/><clipPath id="gc3_3"><path d="M219.2,415.4 L220.0,412.2 L221.8,410.0 L223.8,408.8 L228.2,408.8 L230.2,410.0 L232.0,412.2 L232.8,415.4 Z"/></clipPath><g clip-path="url(#gc3_3)"><rect x="219.2" y="408.8" width="13.6" height="6.6" fill="#f0f020"/><path d="M217.2,415.4 L225.1,415.4 L221.2,408.8 L217.2,408.8 Z" fill="#20d020"/><path d="M226.1,415.4 L234.8,415.4 L234.8,408.8 L230.0,408.8 Z" fill="#e01818"/></g><path d="M219.2,415.4 L220.0,412.2 L221.8,410.0 L223.8,408.8 L228.2,408.8 L230.2,410.0 L232.0,412.2 L232.8,415.4 Z" fill="none" stroke="#1a1a0a" stroke-width="1.1" clip-path="url(#gc3_3)"/><rect x="219.2" y="414.4" width="13.6" height="1" fill="#1a1a0a"/><line x1="226.0" y1="415.4" x2="225.8" y2="409.4" stroke="#111" stroke-width="0.9"/><clipPath id="gc3_4"><path d="M219.2,425.0 L220.0,421.8 L221.8,419.6 L223.8,418.4 L228.2,418.4 L230.2,419.6 L232.0,421.8 L232.8,425.0 Z"/></clipPath><g clip-path="url(#gc3_4)"><rect x="219.2" y="418.4" width="13.6" height="6.6" fill="#f0f020"/><path d="M217.2,425.0 L225.1,425.0 L221.2,418.4 L217.2,418.4 Z" fill="#20d020"/><path d="M226.1,425.0 L234.8,425.0 L234.8,418.4 L230.0,418.4 Z" fill="#e01818"/></g><path d="M219.2,425.0 L220.0,421.8 L221.8,419.6 L223.8,418.4 L228.2,418.4 L230.2,419.6 L232.0,421.8 L232.8,425.0 Z" fill="none" stroke="#1a1a0a" stroke-width="1.1" clip-path="url(#gc3_4)"/><rect x="219.2" y="424.0" width="13.6" height="1" fill="#1a1a0a"/><clipPath id="gc4_0"><path d="M290.2,386.6 L291.0,383.4 L292.8,381.2 L294.8,380.0 L299.2,380.0 L301.2,381.2 L303.0,383.4 L303.8,386.6 Z"/></clipPath><g clip-path="url(#gc4_0)"><rect x="290.2" y="380.0" width="13.6" height="6.6" fill="#f0f020"/><path d="M288.2,386.6 L296.1,386.6 L292.2,380.0 L288.2,380.0 Z" fill="#20d020"/><path d="M297.1,386.6 L305.8,386.6 L305.8,380.0 L301.0,380.0 Z" fill="#e01818"/></g><path d="M290.2,386.6 L291.0,383.4 L292.8,381.2 L294.8,380.0 L299.2,380.0 L301.2,381.2 L303.0,383.4 L303.8,386.6 Z" fill="none" stroke="#1a1a0a" stroke-width="1.1" clip-path="url(#gc4_0)"/><rect x="290.2" y="385.6" width="13.6" height="1" fill="#1a1a0a"/><line x1="297.0" y1="386.6" x2="291.4" y2="384.5" stroke="#111" stroke-width="0.9"/><clipPath id="gc4_1"><path d="M290.2,396.2 L291.0,393.0 L292.8,390.8 L294.8,389.6 L299.2,389.6 L301.2,390.8 L303.0,393.0 L303.8,396.2 Z"/></clipPath><g clip-path="url(#gc4_1)"><rect x="290.2" y="389.6" width="13.6" height="6.6" fill="#f0f020"/><path d="M288.2,396.2 L296.1,396.2 L292.2,389.6 L288.2,389.6 Z" fill="#20d020"/><path d="M297.1,396.2 L305.8,396.2 L305.8,389.6 L301.0,389.6 Z" fill="#e01818"/></g><path d="M290.2,396.2 L291.0,393.0 L292.8,390.8 L294.8,389.6 L299.2,389.6 L301.2,390.8 L303.0,393.0 L303.8,396.2 Z" fill="none" stroke="#1a1a0a" stroke-width="1.1" clip-path="url(#gc4_1)"/><rect x="290.2" y="395.2" width="13.6" height="1" fill="#1a1a0a"/><line x1="297.0" y1="396.2" x2="293.1" y2="391.6" stroke="#111" stroke-width="0.9"/><clipPath id="gc4_2"><path d="M290.2,405.8 L291.0,402.6 L292.8,400.4 L294.8,399.2 L299.2,399.2 L301.2,400.4 L303.0,402.6 L303.8,405.8 Z"/></clipPath><g clip-path="url(#gc4_2)"><rect x="290.2" y="399.2" width="13.6" height="6.6" fill="#f0f020"/><path d="M288.2,405.8 L296.1,405.8 L292.2,399.2 L288.2,399.2 Z" fill="#20d020"/><path d="M297.1,405.8 L305.8,405.8 L305.8,399.2 L301.0,399.2 Z" fill="#e01818"/></g><path d="M290.2,405.8 L291.0,402.6 L292.8,400.4 L294.8,399.2 L299.2,399.2 L301.2,400.4 L303.0,402.6 L303.8,405.8 Z" fill="none" stroke="#1a1a0a" stroke-width="1.1" clip-path="url(#gc4_2)"/><rect x="290.2" y="404.8" width="13.6" height="1" fill="#1a1a0a"/><clipPath id="gc4_3"><path d="M290.2,415.4 L291.0,412.2 L292.8,410.0 L294.8,408.8 L299.2,408.8 L301.2,410.0 L303.0,412.2 L303.8,415.4 Z"/></clipPath><g clip-path="url(#gc4_3)"><rect x="290.2" y="408.8" width="13.6" height="6.6" fill="#f0f020"/><path d="M288.2,415.4 L296.1,415.4 L292.2,408.8 L288.2,408.8 Z" fill="#20d020"/><path d="M297.1,415.4 L305.8,415.4 L305.8,408.8 L301.0,408.8 Z" fill="#e01818"/></g><path d="M290.2,415.4 L291.0,412.2 L292.8,410.0 L294.8,408.8 L299.2,408.8 L301.2,410.0 L303.0,412.2 L303.8,415.4 Z" fill="none" stroke="#1a1a0a" stroke-width="1.1" clip-path="url(#gc4_3)"/><rect x="290.2" y="414.4" width="13.6" height="1" fill="#1a1a0a"/><clipPath id="gc4_4"><path d="M290.2,425.0 L291.0,421.8 L292.8,419.6 L294.8,418.4 L299.2,418.4 L301.2,419.6 L303.0,421.8 L303.8,425.0 Z"/></clipPath><g clip-path="url(#gc4_4)"><rect x="290.2" y="418.4" width="13.6" height="6.6" fill="#f0f020"/><path d="M288.2,425.0 L296.1,425.0 L292.2,418.4 L288.2,418.4 Z" fill="#20d020"/><path d="M297.1,425.0 L305.8,425.0 L305.8,418.4 L301.0,418.4 Z" fill="#e01818"/></g><path d="M290.2,425.0 L291.0,421.8 L292.8,419.6 L294.8,418.4 L299.2,418.4 L301.2,419.6 L303.0,421.8 L303.8,425.0 Z" fill="none" stroke="#1a1a0a" stroke-width="1.1" clip-path="url(#gc4_4)"/><rect x="290.2" y="424.0" width="13.6" height="1" fill="#1a1a0a"/><clipPath id="gc5_0"><path d="M361.2,386.6 L362.0,383.4 L363.8,381.2 L365.8,380.0 L370.2,380.0 L372.2,381.2 L374.0,383.4 L374.8,386.6 Z"/></clipPath><g clip-path="url(#gc5_0)"><rect x="361.2" y="380.0" width="13.6" height="6.6" fill="#f0f020"/><path d="M359.2,386.6 L367.1,386.6 L363.2,380.0 L359.2,380.0 Z" fill="#20d020"/><path d="M368.1,386.6 L376.8,386.6 L376.8,380.0 L372.0,380.0 Z" fill="#e01818"/></g><path d="M361.2,386.6 L362.0,383.4 L363.8,381.2 L365.8,380.0 L370.2,380.0 L372.2,381.2 L374.0,383.4 L374.8,386.6 Z" fill="none" stroke="#1a1a0a" stroke-width="1.1" clip-path="url(#gc5_0)"/><rect x="361.2" y="385.6" width="13.6" height="1" fill="#1a1a0a"/><line x1="368.0" y1="386.6" x2="367.0" y2="380.7" stroke="#111" stroke-width="0.9"/><clipPath id="gc5_1"><path d="M361.2,396.2 L362.0,393.0 L363.8,390.8 L365.8,389.6 L370.2,389.6 L372.2,390.8 L374.0,393.0 L374.8,396.2 Z"/></clipPath><g clip-path="url(#gc5_1)"><rect x="361.2" y="389.6" width="13.6" height="6.6" fill="#f0f020"/><path d="M359.2,396.2 L367.1,396.2 L363.2,389.6 L359.2,389.6 Z" fill="#20d020"/><path d="M368.1,396.2 L376.8,396.2 L376.8,389.6 L372.0,389.6 Z" fill="#e01818"/></g><path d="M361.2,396.2 L362.0,393.0 L363.8,390.8 L365.8,389.6 L370.2,389.6 L372.2,390.8 L374.0,393.0 L374.8,396.2 Z" fill="none" stroke="#1a1a0a" stroke-width="1.1" clip-path="url(#gc5_1)"/><rect x="361.2" y="395.2" width="13.6" height="1" fill="#1a1a0a"/><line x1="368.0" y1="396.2" x2="367.4" y2="390.2" stroke="#111" stroke-width="0.9"/><clipPath id="gc5_2"><path d="M361.2,405.8 L362.0,402.6 L363.8,400.4 L365.8,399.2 L370.2,399.2 L372.2,400.4 L374.0,402.6 L374.8,405.8 Z"/></clipPath><g clip-path="url(#gc5_2)"><rect x="361.2" y="399.2" width="13.6" height="6.6" fill="#f0f020"/><path d="M359.2,405.8 L367.1,405.8 L363.2,399.2 L359.2,399.2 Z" fill="#20d020"/><path d="M368.1,405.8 L376.8,405.8 L376.8,399.2 L372.0,399.2 Z" fill="#e01818"/></g><path d="M361.2,405.8 L362.0,402.6 L363.8,400.4 L365.8,399.2 L370.2,399.2 L372.2,400.4 L374.0,402.6 L374.8,405.8 Z" fill="none" stroke="#1a1a0a" stroke-width="1.1" clip-path="url(#gc5_2)"/><rect x="361.2" y="404.8" width="13.6" height="1" fill="#1a1a0a"/><clipPath id="gc5_3"><path d="M361.2,415.4 L362.0,412.2 L363.8,410.0 L365.8,408.8 L370.2,408.8 L372.2,410.0 L374.0,412.2 L374.8,415.4 Z"/></clipPath><g clip-path="url(#gc5_3)"><rect x="361.2" y="408.8" width="13.6" height="6.6" fill="#f0f020"/><path d="M359.2,415.4 L367.1,415.4 L363.2,408.8 L359.2,408.8 Z" fill="#20d020"/><path d="M368.1,415.4 L376.8,415.4 L376.8,408.8 L372.0,408.8 Z" fill="#e01818"/></g><path d="M361.2,415.4 L362.0,412.2 L363.8,410.0 L365.8,408.8 L370.2,408.8 L372.2,410.0 L374.0,412.2 L374.8,415.4 Z" fill="none" stroke="#1a1a0a" stroke-width="1.1" clip-path="url(#gc5_3)"/><rect x="361.2" y="414.4" width="13.6" height="1" fill="#1a1a0a"/><clipPath id="gc5_4"><path d="M361.2,425.0 L362.0,421.8 L363.8,419.6 L365.8,418.4 L370.2,418.4 L372.2,419.6 L374.0,421.8 L374.8,425.0 Z"/></clipPath><g clip-path="url(#gc5_4)"><rect x="361.2" y="418.4" width="13.6" height="6.6" fill="#f0f020"/><path d="M359.2,425.0 L367.1,425.0 L363.2,418.4 L359.2,418.4 Z" fill="#20d020"/><path d="M368.1,425.0 L376.8,425.0 L376.8,418.4 L372.0,418.4 Z" fill="#e01818"/></g><path d="M361.2,425.0 L362.0,421.8 L363.8,419.6 L365.8,418.4 L370.2,418.4 L372.2,419.6 L374.0,421.8 L374.8,425.0 Z" fill="none" stroke="#1a1a0a" stroke-width="1.1" clip-path="url(#gc5_4)"/><rect x="361.2" y="424.0" width="13.6" height="1" fill="#1a1a0a"/><clipPath id="gc6_0"><path d="M432.2,386.6 L433.0,383.4 L434.8,381.2 L436.8,380.0 L441.2,380.0 L443.2,381.2 L445.0,383.4 L445.8,386.6 Z"/></clipPath><g clip-path="url(#gc6_0)"><rect x="432.2" y="380.0" width="13.6" height="6.6" fill="#f0f020"/><path d="M430.2,386.6 L438.1,386.6 L434.2,380.0 L430.2,380.0 Z" fill="#20d020"/><path d="M439.1,386.6 L447.8,386.6 L447.8,380.0 L443.0,380.0 Z" fill="#e01818"/></g><path d="M432.2,386.6 L433.0,383.4 L434.8,381.2 L436.8,380.0 L441.2,380.0 L443.2,381.2 L445.0,383.4 L445.8,386.6 Z" fill="none" stroke="#1a1a0a" stroke-width="1.1" clip-path="url(#gc6_0)"/><rect x="432.2" y="385.6" width="13.6" height="1" fill="#1a1a0a"/><clipPath id="gc6_1"><path d="M432.2,396.2 L433.0,393.0 L434.8,390.8 L436.8,389.6 L441.2,389.6 L443.2,390.8 L445.0,393.0 L445.8,396.2 Z"/></clipPath><g clip-path="url(#gc6_1)"><rect x="432.2" y="389.6" width="13.6" height="6.6" fill="#f0f020"/><path d="M430.2,396.2 L438.1,396.2 L434.2,389.6 L430.2,389.6 Z" fill="#20d020"/><path d="M439.1,396.2 L447.8,396.2 L447.8,389.6 L443.0,389.6 Z" fill="#e01818"/></g><path d="M432.2,396.2 L433.0,393.0 L434.8,390.8 L436.8,389.6 L441.2,389.6 L443.2,390.8 L445.0,393.0 L445.8,396.2 Z" fill="none" stroke="#1a1a0a" stroke-width="1.1" clip-path="url(#gc6_1)"/><rect x="432.2" y="395.2" width="13.6" height="1" fill="#1a1a0a"/><line x1="439.0" y1="396.2" x2="436.0" y2="391.0" stroke="#111" stroke-width="0.9"/><clipPath id="gc6_2"><path d="M432.2,405.8 L433.0,402.6 L434.8,400.4 L436.8,399.2 L441.2,399.2 L443.2,400.4 L445.0,402.6 L445.8,405.8 Z"/></clipPath><g clip-path="url(#gc6_2)"><rect x="432.2" y="399.2" width="13.6" height="6.6" fill="#f0f020"/><path d="M430.2,405.8 L438.1,405.8 L434.2,399.2 L430.2,399.2 Z" fill="#20d020"/><path d="M439.1,405.8 L447.8,405.8 L447.8,399.2 L443.0,399.2 Z" fill="#e01818"/></g><path d="M432.2,405.8 L433.0,402.6 L434.8,400.4 L436.8,399.2 L441.2,399.2 L443.2,400.4 L445.0,402.6 L445.8,405.8 Z" fill="none" stroke="#1a1a0a" stroke-width="1.1" clip-path="url(#gc6_2)"/><rect x="432.2" y="404.8" width="13.6" height="1" fill="#1a1a0a"/><clipPath id="gc6_3"><path d="M432.2,415.4 L433.0,412.2 L434.8,410.0 L436.8,408.8 L441.2,408.8 L443.2,410.0 L445.0,412.2 L445.8,415.4 Z"/></clipPath><g clip-path="url(#gc6_3)"><rect x="432.2" y="408.8" width="13.6" height="6.6" fill="#f0f020"/><path d="M430.2,415.4 L438.1,415.4 L434.2,408.8 L430.2,408.8 Z" fill="#20d020"/><path d="M439.1,415.4 L447.8,415.4 L447.8,408.8 L443.0,408.8 Z" fill="#e01818"/></g><path d="M432.2,415.4 L433.0,412.2 L434.8,410.0 L436.8,408.8 L441.2,408.8 L443.2,410.0 L445.0,412.2 L445.8,415.4 Z" fill="none" stroke="#1a1a0a" stroke-width="1.1" clip-path="url(#gc6_3)"/><rect x="432.2" y="414.4" width="13.6" height="1" fill="#1a1a0a"/><clipPath id="gc6_4"><path d="M432.2,425.0 L433.0,421.8 L434.8,419.6 L436.8,418.4 L441.2,418.4 L443.2,419.6 L445.0,421.8 L445.8,425.0 Z"/></clipPath><g clip-path="url(#gc6_4)"><rect x="432.2" y="418.4" width="13.6" height="6.6" fill="#f0f020"/><path d="M430.2,425.0 L438.1,425.0 L434.2,418.4 L430.2,418.4 Z" fill="#20d020"/><path d="M439.1,425.0 L447.8,425.0 L447.8,418.4 L443.0,418.4 Z" fill="#e01818"/></g><path d="M432.2,425.0 L433.0,421.8 L434.8,419.6 L436.8,418.4 L441.2,418.4 L443.2,419.6 L445.0,421.8 L445.8,425.0 Z" fill="none" stroke="#1a1a0a" stroke-width="1.1" clip-path="url(#gc6_4)"/><rect x="432.2" y="424.0" width="13.6" height="1" fill="#1a1a0a"/><clipPath id="gc7_0"><path d="M503.2,386.6 L504.0,383.4 L505.8,381.2 L507.8,380.0 L512.2,380.0 L514.2,381.2 L516.0,383.4 L516.8,386.6 Z"/></clipPath><g clip-path="url(#gc7_0)"><rect x="503.2" y="380.0" width="13.6" height="6.6" fill="#f0f020"/><path d="M501.2,386.6 L509.1,386.6 L505.2,380.0 L501.2,380.0 Z" fill="#20d020"/><path d="M510.1,386.6 L518.8,386.6 L518.8,380.0 L514.0,380.0 Z" fill="#e01818"/></g><path d="M503.2,386.6 L504.0,383.4 L505.8,381.2 L507.8,380.0 L512.2,380.0 L514.2,381.2 L516.0,383.4 L516.8,386.6 Z" fill="none" stroke="#1a1a0a" stroke-width="1.1" clip-path="url(#gc7_0)"/><rect x="503.2" y="385.6" width="13.6" height="1" fill="#1a1a0a"/><line x1="510.0" y1="386.6" x2="509.5" y2="380.6" stroke="#111" stroke-width="0.9"/><clipPath id="gc7_1"><path d="M503.2,396.2 L504.0,393.0 L505.8,390.8 L507.8,389.6 L512.2,389.6 L514.2,390.8 L516.0,393.0 L516.8,396.2 Z"/></clipPath><g clip-path="url(#gc7_1)"><rect x="503.2" y="389.6" width="13.6" height="6.6" fill="#f0f020"/><path d="M501.2,396.2 L509.1,396.2 L505.2,389.6 L501.2,389.6 Z" fill="#20d020"/><path d="M510.1,396.2 L518.8,396.2 L518.8,389.6 L514.0,389.6 Z" fill="#e01818"/></g><path d="M503.2,396.2 L504.0,393.0 L505.8,390.8 L507.8,389.6 L512.2,389.6 L514.2,390.8 L516.0,393.0 L516.8,396.2 Z" fill="none" stroke="#1a1a0a" stroke-width="1.1" clip-path="url(#gc7_1)"/><rect x="503.2" y="395.2" width="13.6" height="1" fill="#1a1a0a"/><line x1="510.0" y1="396.2" x2="509.0" y2="390.3" stroke="#111" stroke-width="0.9"/><clipPath id="gc7_2"><path d="M503.2,405.8 L504.0,402.6 L505.8,400.4 L507.8,399.2 L512.2,399.2 L514.2,400.4 L516.0,402.6 L516.8,405.8 Z"/></clipPath><g clip-path="url(#gc7_2)"><rect x="503.2" y="399.2" width="13.6" height="6.6" fill="#f0f020"/><path d="M501.2,405.8 L509.1,405.8 L505.2,399.2 L501.2,399.2 Z" fill="#20d020"/><path d="M510.1,405.8 L518.8,405.8 L518.8,399.2 L514.0,399.2 Z" fill="#e01818"/></g><path d="M503.2,405.8 L504.0,402.6 L505.8,400.4 L507.8,399.2 L512.2,399.2 L514.2,400.4 L516.0,402.6 L516.8,405.8 Z" fill="none" stroke="#1a1a0a" stroke-width="1.1" clip-path="url(#gc7_2)"/><rect x="503.2" y="404.8" width="13.6" height="1" fill="#1a1a0a"/><clipPath id="gc7_3"><path d="M503.2,415.4 L504.0,412.2 L505.8,410.0 L507.8,408.8 L512.2,408.8 L514.2,410.0 L516.0,412.2 L516.8,415.4 Z"/></clipPath><g clip-path="url(#gc7_3)"><rect x="503.2" y="408.8" width="13.6" height="6.6" fill="#f0f020"/><path d="M501.2,415.4 L509.1,415.4 L505.2,408.8 L501.2,408.8 Z" fill="#20d020"/><path d="M510.1,415.4 L518.8,415.4 L518.8,408.8 L514.0,408.8 Z" fill="#e01818"/></g><path d="M503.2,415.4 L504.0,412.2 L505.8,410.0 L507.8,408.8 L512.2,408.8 L514.2,410.0 L516.0,412.2 L516.8,415.4 Z" fill="none" stroke="#1a1a0a" stroke-width="1.1" clip-path="url(#gc7_3)"/><rect x="503.2" y="414.4" width="13.6" height="1" fill="#1a1a0a"/><clipPath id="gc7_4"><path d="M503.2,425.0 L504.0,421.8 L505.8,419.6 L507.8,418.4 L512.2,418.4 L514.2,419.6 L516.0,421.8 L516.8,425.0 Z"/></clipPath><g clip-path="url(#gc7_4)"><rect x="503.2" y="418.4" width="13.6" height="6.6" fill="#f0f020"/><path d="M501.2,425.0 L509.1,425.0 L505.2,418.4 L501.2,418.4 Z" fill="#20d020"/><path d="M510.1,425.0 L518.8,425.0 L518.8,418.4 L514.0,418.4 Z" fill="#e01818"/></g><path d="M503.2,425.0 L504.0,421.8 L505.8,419.6 L507.8,418.4 L512.2,418.4 L514.2,419.6 L516.0,421.8 L516.8,425.0 Z" fill="none" stroke="#1a1a0a" stroke-width="1.1" clip-path="url(#gc7_4)"/><rect x="503.2" y="424.0" width="13.6" height="1" fill="#1a1a0a"/><line x1="510.0" y1="425.0" x2="507.0" y2="419.8" stroke="#111" stroke-width="0.9"/><clipPath id="gc8_0"><path d="M574.2,386.6 L575.0,383.4 L576.8,381.2 L578.8,380.0 L583.2,380.0 L585.2,381.2 L587.0,383.4 L587.8,386.6 Z"/></clipPath><g clip-path="url(#gc8_0)"><rect x="574.2" y="380.0" width="13.6" height="6.6" fill="#f0f020"/><path d="M572.2,386.6 L580.1,386.6 L576.2,380.0 L572.2,380.0 Z" fill="#20d020"/><path d="M581.1,386.6 L589.8,386.6 L589.8,380.0 L585.0,380.0 Z" fill="#e01818"/></g><path d="M574.2,386.6 L575.0,383.4 L576.8,381.2 L578.8,380.0 L583.2,380.0 L585.2,381.2 L587.0,383.4 L587.8,386.6 Z" fill="none" stroke="#1a1a0a" stroke-width="1.1" clip-path="url(#gc8_0)"/><rect x="574.2" y="385.6" width="13.6" height="1" fill="#1a1a0a"/><clipPath id="gc8_1"><path d="M574.2,396.2 L575.0,393.0 L576.8,390.8 L578.8,389.6 L583.2,389.6 L585.2,390.8 L587.0,393.0 L587.8,396.2 Z"/></clipPath><g clip-path="url(#gc8_1)"><rect x="574.2" y="389.6" width="13.6" height="6.6" fill="#f0f020"/><path d="M572.2,396.2 L580.1,396.2 L576.2,389.6 L572.2,389.6 Z" fill="#20d020"/><path d="M581.1,396.2 L589.8,396.2 L589.8,389.6 L585.0,389.6 Z" fill="#e01818"/></g><path d="M574.2,396.2 L575.0,393.0 L576.8,390.8 L578.8,389.6 L583.2,389.6 L585.2,390.8 L587.0,393.0 L587.8,396.2 Z" fill="none" stroke="#1a1a0a" stroke-width="1.1" clip-path="url(#gc8_1)"/><rect x="574.2" y="395.2" width="13.6" height="1" fill="#1a1a0a"/><line x1="581.0" y1="396.2" x2="576.4" y2="392.3" stroke="#111" stroke-width="0.9"/><clipPath id="gc8_2"><path d="M574.2,405.8 L575.0,402.6 L576.8,400.4 L578.8,399.2 L583.2,399.2 L585.2,400.4 L587.0,402.6 L587.8,405.8 Z"/></clipPath><g clip-path="url(#gc8_2)"><rect x="574.2" y="399.2" width="13.6" height="6.6" fill="#f0f020"/><path d="M572.2,405.8 L580.1,405.8 L576.2,399.2 L572.2,399.2 Z" fill="#20d020"/><path d="M581.1,405.8 L589.8,405.8 L589.8,399.2 L585.0,399.2 Z" fill="#e01818"/></g><path d="M574.2,405.8 L575.0,402.6 L576.8,400.4 L578.8,399.2 L583.2,399.2 L585.2,400.4 L587.0,402.6 L587.8,405.8 Z" fill="none" stroke="#1a1a0a" stroke-width="1.1" clip-path="url(#gc8_2)"/><rect x="574.2" y="404.8" width="13.6" height="1" fill="#1a1a0a"/><clipPath id="gc8_3"><path d="M574.2,415.4 L575.0,412.2 L576.8,410.0 L578.8,408.8 L583.2,408.8 L585.2,410.0 L587.0,412.2 L587.8,415.4 Z"/></clipPath><g clip-path="url(#gc8_3)"><rect x="574.2" y="408.8" width="13.6" height="6.6" fill="#f0f020"/><path d="M572.2,415.4 L580.1,415.4 L576.2,408.8 L572.2,408.8 Z" fill="#20d020"/><path d="M581.1,415.4 L589.8,415.4 L589.8,408.8 L585.0,408.8 Z" fill="#e01818"/></g><path d="M574.2,415.4 L575.0,412.2 L576.8,410.0 L578.8,408.8 L583.2,408.8 L585.2,410.0 L587.0,412.2 L587.8,415.4 Z" fill="none" stroke="#1a1a0a" stroke-width="1.1" clip-path="url(#gc8_3)"/><rect x="574.2" y="414.4" width="13.6" height="1" fill="#1a1a0a"/><clipPath id="gc9_0"><path d="M645.2,386.6 L646.0,383.4 L647.8,381.2 L649.8,380.0 L654.2,380.0 L656.2,381.2 L658.0,383.4 L658.8,386.6 Z"/></clipPath><g clip-path="url(#gc9_0)"><rect x="645.2" y="380.0" width="13.6" height="6.6" fill="#f0f020"/><path d="M643.2,386.6 L651.1,386.6 L647.2,380.0 L643.2,380.0 Z" fill="#20d020"/><path d="M652.1,386.6 L660.8,386.6 L660.8,380.0 L656.0,380.0 Z" fill="#e01818"/></g><path d="M645.2,386.6 L646.0,383.4 L647.8,381.2 L649.8,380.0 L654.2,380.0 L656.2,381.2 L658.0,383.4 L658.8,386.6 Z" fill="none" stroke="#1a1a0a" stroke-width="1.1" clip-path="url(#gc9_0)"/><rect x="645.2" y="385.6" width="13.6" height="1" fill="#1a1a0a"/><line x1="652.0" y1="386.6" x2="652.0" y2="380.6" stroke="#111" stroke-width="0.9"/><clipPath id="gc9_1"><path d="M645.2,396.2 L646.0,393.0 L647.8,390.8 L649.8,389.6 L654.2,389.6 L656.2,390.8 L658.0,393.0 L658.8,396.2 Z"/></clipPath><g clip-path="url(#gc9_1)"><rect x="645.2" y="389.6" width="13.6" height="6.6" fill="#f0f020"/><path d="M643.2,396.2 L651.1,396.2 L647.2,389.6 L643.2,389.6 Z" fill="#20d020"/><path d="M652.1,396.2 L660.8,396.2 L660.8,389.6 L656.0,389.6 Z" fill="#e01818"/></g><path d="M645.2,396.2 L646.0,393.0 L647.8,390.8 L649.8,389.6 L654.2,389.6 L656.2,390.8 L658.0,393.0 L658.8,396.2 Z" fill="none" stroke="#1a1a0a" stroke-width="1.1" clip-path="url(#gc9_1)"/><rect x="645.2" y="395.2" width="13.6" height="1" fill="#1a1a0a"/><clipPath id="gc9_2"><path d="M645.2,405.8 L646.0,402.6 L647.8,400.4 L649.8,399.2 L654.2,399.2 L656.2,400.4 L658.0,402.6 L658.8,405.8 Z"/></clipPath><g clip-path="url(#gc9_2)"><rect x="645.2" y="399.2" width="13.6" height="6.6" fill="#f0f020"/><path d="M643.2,405.8 L651.1,405.8 L647.2,399.2 L643.2,399.2 Z" fill="#20d020"/><path d="M652.1,405.8 L660.8,405.8 L660.8,399.2 L656.0,399.2 Z" fill="#e01818"/></g><path d="M645.2,405.8 L646.0,402.6 L647.8,400.4 L649.8,399.2 L654.2,399.2 L656.2,400.4 L658.0,402.6 L658.8,405.8 Z" fill="none" stroke="#1a1a0a" stroke-width="1.1" clip-path="url(#gc9_2)"/><rect x="645.2" y="404.8" width="13.6" height="1" fill="#1a1a0a"/><clipPath id="gc9_3"><path d="M645.2,415.4 L646.0,412.2 L647.8,410.0 L649.8,408.8 L654.2,408.8 L656.2,410.0 L658.0,412.2 L658.8,415.4 Z"/></clipPath><g clip-path="url(#gc9_3)"><rect x="645.2" y="408.8" width="13.6" height="6.6" fill="#f0f020"/><path d="M643.2,415.4 L651.1,415.4 L647.2,408.8 L643.2,408.8 Z" fill="#20d020"/><path d="M652.1,415.4 L660.8,415.4 L660.8,408.8 L656.0,408.8 Z" fill="#e01818"/></g><path d="M645.2,415.4 L646.0,412.2 L647.8,410.0 L649.8,408.8 L654.2,408.8 L656.2,410.0 L658.0,412.2 L658.8,415.4 Z" fill="none" stroke="#1a1a0a" stroke-width="1.1" clip-path="url(#gc9_3)"/><rect x="645.2" y="414.4" width="13.6" height="1" fill="#1a1a0a"/><clipPath id="gc10_0"><path d="M716.2,386.6 L717.0,383.4 L718.8,381.2 L720.8,380.0 L725.2,380.0 L727.2,381.2 L729.0,383.4 L729.8,386.6 Z"/></clipPath><g clip-path="url(#gc10_0)"><rect x="716.2" y="380.0" width="13.6" height="6.6" fill="#f0f020"/><path d="M714.2,386.6 L722.1,386.6 L718.2,380.0 L714.2,380.0 Z" fill="#20d020"/><path d="M723.1,386.6 L731.8,386.6 L731.8,380.0 L727.0,380.0 Z" fill="#e01818"/></g><path d="M716.2,386.6 L717.0,383.4 L718.8,381.2 L720.8,380.0 L725.2,380.0 L727.2,381.2 L729.0,383.4 L729.8,386.6 Z" fill="none" stroke="#1a1a0a" stroke-width="1.1" clip-path="url(#gc10_0)"/><rect x="716.2" y="385.6" width="13.6" height="1" fill="#1a1a0a"/><clipPath id="gc10_1"><path d="M716.2,396.2 L717.0,393.0 L718.8,390.8 L720.8,389.6 L725.2,389.6 L727.2,390.8 L729.0,393.0 L729.8,396.2 Z"/></clipPath><g clip-path="url(#gc10_1)"><rect x="716.2" y="389.6" width="13.6" height="6.6" fill="#f0f020"/><path d="M714.2,396.2 L722.1,396.2 L718.2,389.6 L714.2,389.6 Z" fill="#20d020"/><path d="M723.1,396.2 L731.8,396.2 L731.8,389.6 L727.0,389.6 Z" fill="#e01818"/></g><path d="M716.2,396.2 L717.0,393.0 L718.8,390.8 L720.8,389.6 L725.2,389.6 L727.2,390.8 L729.0,393.0 L729.8,396.2 Z" fill="none" stroke="#1a1a0a" stroke-width="1.1" clip-path="url(#gc10_1)"/><rect x="716.2" y="395.2" width="13.6" height="1" fill="#1a1a0a"/><clipPath id="gc10_2"><path d="M716.2,405.8 L717.0,402.6 L718.8,400.4 L720.8,399.2 L725.2,399.2 L727.2,400.4 L729.0,402.6 L729.8,405.8 Z"/></clipPath><g clip-path="url(#gc10_2)"><rect x="716.2" y="399.2" width="13.6" height="6.6" fill="#f0f020"/><path d="M714.2,405.8 L722.1,405.8 L718.2,399.2 L714.2,399.2 Z" fill="#20d020"/><path d="M723.1,405.8 L731.8,405.8 L731.8,399.2 L727.0,399.2 Z" fill="#e01818"/></g><path d="M716.2,405.8 L717.0,402.6 L718.8,400.4 L720.8,399.2 L725.2,399.2 L727.2,400.4 L729.0,402.6 L729.8,405.8 Z" fill="none" stroke="#1a1a0a" stroke-width="1.1" clip-path="url(#gc10_2)"/><rect x="716.2" y="404.8" width="13.6" height="1" fill="#1a1a0a"/><line x1="723.0" y1="405.8" x2="722.8" y2="399.8" stroke="#111" stroke-width="0.9"/><clipPath id="gc10_3"><path d="M716.2,415.4 L717.0,412.2 L718.8,410.0 L720.8,408.8 L725.2,408.8 L727.2,410.0 L729.0,412.2 L729.8,415.4 Z"/></clipPath><g clip-path="url(#gc10_3)"><rect x="716.2" y="408.8" width="13.6" height="6.6" fill="#f0f020"/><path d="M714.2,415.4 L722.1,415.4 L718.2,408.8 L714.2,408.8 Z" fill="#20d020"/><path d="M723.1,415.4 L731.8,415.4 L731.8,408.8 L727.0,408.8 Z" fill="#e01818"/></g><path d="M716.2,415.4 L717.0,412.2 L718.8,410.0 L720.8,408.8 L725.2,408.8 L727.2,410.0 L729.0,412.2 L729.8,415.4 Z" fill="none" stroke="#1a1a0a" stroke-width="1.1" clip-path="url(#gc10_3)"/><rect x="716.2" y="414.4" width="13.6" height="1" fill="#1a1a0a"/><clipPath id="gc11_0"><path d="M787.2,386.6 L788.0,383.4 L789.8,381.2 L791.8,380.0 L796.2,380.0 L798.2,381.2 L800.0,383.4 L800.8,386.6 Z"/></clipPath><g clip-path="url(#gc11_0)"><rect x="787.2" y="380.0" width="13.6" height="6.6" fill="#f0f020"/><path d="M785.2,386.6 L793.1,386.6 L789.2,380.0 L785.2,380.0 Z" fill="#20d020"/><path d="M794.1,386.6 L802.8,386.6 L802.8,380.0 L798.0,380.0 Z" fill="#e01818"/></g><path d="M787.2,386.6 L788.0,383.4 L789.8,381.2 L791.8,380.0 L796.2,380.0 L798.2,381.2 L800.0,383.4 L800.8,386.6 Z" fill="none" stroke="#1a1a0a" stroke-width="1.1" clip-path="url(#gc11_0)"/><rect x="787.2" y="385.6" width="13.6" height="1" fill="#1a1a0a"/><clipPath id="gc11_1"><path d="M787.2,396.2 L788.0,393.0 L789.8,390.8 L791.8,389.6 L796.2,389.6 L798.2,390.8 L800.0,393.0 L800.8,396.2 Z"/></clipPath><g clip-path="url(#gc11_1)"><rect x="787.2" y="389.6" width="13.6" height="6.6" fill="#f0f020"/><path d="M785.2,396.2 L793.1,396.2 L789.2,389.6 L785.2,389.6 Z" fill="#20d020"/><path d="M794.1,396.2 L802.8,396.2 L802.8,389.6 L798.0,389.6 Z" fill="#e01818"/></g><path d="M787.2,396.2 L788.0,393.0 L789.8,390.8 L791.8,389.6 L796.2,389.6 L798.2,390.8 L800.0,393.0 L800.8,396.2 Z" fill="none" stroke="#1a1a0a" stroke-width="1.1" clip-path="url(#gc11_1)"/><rect x="787.2" y="395.2" width="13.6" height="1" fill="#1a1a0a"/><clipPath id="gc11_2"><path d="M787.2,405.8 L788.0,402.6 L789.8,400.4 L791.8,399.2 L796.2,399.2 L798.2,400.4 L800.0,402.6 L800.8,405.8 Z"/></clipPath><g clip-path="url(#gc11_2)"><rect x="787.2" y="399.2" width="13.6" height="6.6" fill="#f0f020"/><path d="M785.2,405.8 L793.1,405.8 L789.2,399.2 L785.2,399.2 Z" fill="#20d020"/><path d="M794.1,405.8 L802.8,405.8 L802.8,399.2 L798.0,399.2 Z" fill="#e01818"/></g><path d="M787.2,405.8 L788.0,402.6 L789.8,400.4 L791.8,399.2 L796.2,399.2 L798.2,400.4 L800.0,402.6 L800.8,405.8 Z" fill="none" stroke="#1a1a0a" stroke-width="1.1" clip-path="url(#gc11_2)"/><rect x="787.2" y="404.8" width="13.6" height="1" fill="#1a1a0a"/><clipPath id="gc11_3"><path d="M787.2,415.4 L788.0,412.2 L789.8,410.0 L791.8,408.8 L796.2,408.8 L798.2,410.0 L800.0,412.2 L800.8,415.4 Z"/></clipPath><g clip-path="url(#gc11_3)"><rect x="787.2" y="408.8" width="13.6" height="6.6" fill="#f0f020"/><path d="M785.2,415.4 L793.1,415.4 L789.2,408.8 L785.2,408.8 Z" fill="#20d020"/><path d="M794.1,415.4 L802.8,415.4 L802.8,408.8 L798.0,408.8 Z" fill="#e01818"/></g><path d="M787.2,415.4 L788.0,412.2 L789.8,410.0 L791.8,408.8 L796.2,408.8 L798.2,410.0 L800.0,412.2 L800.8,415.4 Z" fill="none" stroke="#1a1a0a" stroke-width="1.1" clip-path="url(#gc11_3)"/><rect x="787.2" y="414.4" width="13.6" height="1" fill="#1a1a0a"/></svg>
<div style="position:absolute;left:572px;top:416px;width:284px;height:1px;background:#a8a79b;"></div>
<div style="position:absolute;left:5px;top:426.5px;width:726px;height:9px;background:#fff;border-top:1px solid #a8a8a0;"></div>
<div style="position:absolute;left:6.5px;top:429px;width:90px;height:4.5px;background:#0a14d8;"></div>
<div style="position:absolute;left:36px;top:429px;width:1px;height:4.5px;background:#a03060;"></div>
<svg style="position:absolute;left:0;top:0" width="861" height="439"><g fill="#111" stroke="none"><rect x="733" y="429" width="6" height="5"/><rect x="744.5" y="428.5" width="1.3" height="6"/><rect x="747" y="428.5" width="1.3" height="6"/><path d="M754 428 L761 431.3 L754 434.5 Z"/></g><g fill="none" stroke="#111" stroke-width="1"><circle cx="779.5" cy="429.8" r="2.3"/><line x1="777.8" y1="431.5" x2="775" y2="434.3" stroke-width="1.3"/><line x1="778.3" y1="429.8" x2="780.7" y2="429.8" stroke-width="0.8"/><circle cx="790" cy="429.8" r="2.3"/><line x1="788.3" y1="431.5" x2="785.5" y2="434.3" stroke-width="1.3"/><line x1="788.8" y1="429.8" x2="791.2" y2="429.8" stroke-width="0.8"/><line x1="790" y1="428.6" x2="790" y2="431" stroke-width="0.8"/></g><g fill="#111"><rect x="796" y="428.3" width="1.6" height="6.4"/><path d="M802.5 428.3 L797.5 431.5 L802.5 434.7 Z"/><path d="M810 428.5 L806.5 431.5 L810 434.5 Z"/><path d="M813 428.5 L809.5 431.5 L813 434.5 Z"/><rect x="817.5" y="431" width="7" height="1.3"/><rect x="827.5" y="430.9" width="7" height="1.3"/><rect x="830.35" y="428.2" width="1.3" height="6.7"/><path d="M837 428.5 L840.5 431.5 L837 434.5 Z"/><path d="M840.5 428.5 L844 431.5 L840.5 434.5 Z"/><path d="M848 428.5 L852.5 431.5 L848 434.5 Z"/><rect x="852.5" y="428.5" width="1.5" height="6"/></g></svg>
</body></html>
